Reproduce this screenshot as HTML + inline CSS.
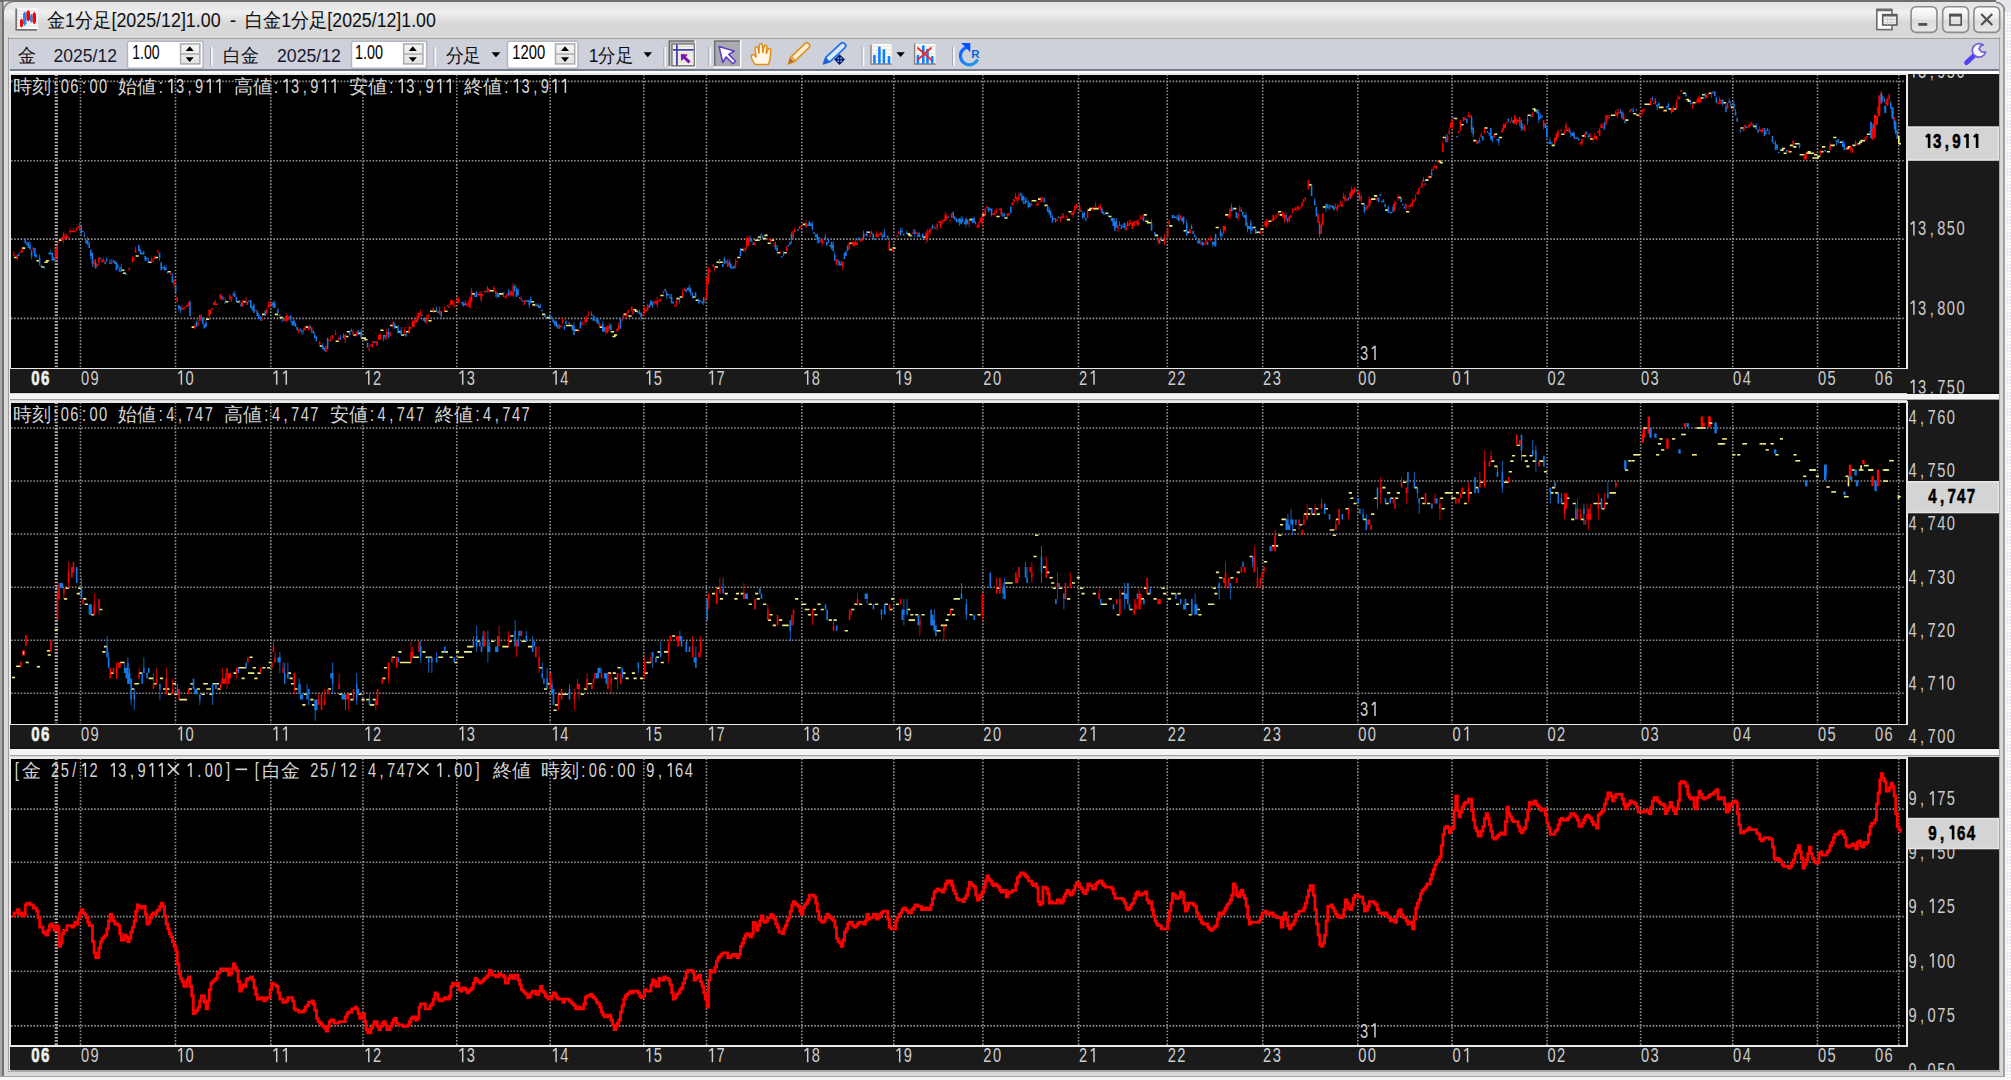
<!DOCTYPE html>
<html><head><meta charset="utf-8">
<style>
*{margin:0;padding:0;box-sizing:border-box}
html,body{width:2011px;height:1080px;overflow:hidden;background:#f6f6f6;font-family:"Liberation Sans",sans-serif}
.a{position:absolute}
svg{position:absolute;left:0;top:0}
</style></head><body>

<div class="a" style="left:2005px;top:0;width:6px;height:1080px;background-color:#e4e4ec;background-image:repeating-linear-gradient(0deg,rgba(255,255,255,.7) 0 1.6px,transparent 1.6px 3.2px),repeating-linear-gradient(90deg,rgba(255,255,255,.5) 0 1.6px,transparent 1.6px 3.2px)"></div>
<div class="a" style="left:0;top:0;width:2005px;height:1077px;background:#d8d8d8;border-radius:6px 6px 0 0"></div>
<div class="a" style="left:0;top:0;width:2px;height:1077px;background:#a8a8a8"></div>
<div class="a" style="left:2px;top:0;width:2px;height:1077px;background:#707070"></div>
<div class="a" style="left:0;top:0;width:2005px;height:2px;background:#6e6e6e"></div>
<div class="a" style="left:4px;top:2px;width:1999px;height:35px;background:linear-gradient(#e4e4e4 0px,#e6e6e6 6px,#f0f0f0 10px,#e4e4e4 16px,#d8d8d8 21px,#d8d8d8 33px,#e0e0e0 35px);border-radius:6px 6px 0 0"></div>
<div class="a" style="left:2003px;top:0;width:2px;height:1077px;background:#a0a0a0"></div>
<div class="a" style="left:0;top:1075.5px;width:2005px;height:1.6px;background:#a4a4a4"></div>
<div class="a" style="left:8px;top:1070px;width:1992px;height:1.6px;background:#a8a8a8"></div>
<div class="a" style="left:8px;top:37px;width:1px;height:1034px;background:#a0a0a0"></div><div class="a" style="left:9px;top:70px;width:2px;height:1001px;background:#e8e8e8"></div>
<div class="a" style="left:1998.5px;top:37px;width:1.6px;height:1034px;background:#a8a8a8"></div>
<div class="a" style="left:8px;top:37.5px;width:1992px;height:1.6px;background:#a0a0a0"></div>
<div class="a" style="left:9.5px;top:39px;width:1989px;height:29.5px;background:#ced1da"></div>
<div class="a" style="left:9.5px;top:68.5px;width:1989px;height:2px;background:#707c90"></div>
<div class="a" style="left:9.5px;top:70.5px;width:1989px;height:4px;background:#fff"></div>
<div class="a" style="left:9.5px;top:72.7px;width:1898px;height:320.8px;background:#1a1a1a"></div>
<div class="a" style="left:1907px;top:73.5px;width:92px;height:320.0px;background:#1a1a1a"></div>
<div class="a" style="left:9.5px;top:72.7px;width:1898px;height:296.6px;background:#e8e8e8"></div>
<div class="a" style="left:11px;top:74.5px;width:1894.5px;height:293.0px;background:#000"></div>
<div class="a" style="left:9.5px;top:391.9px;width:1989px;height:1.6px;background:#101010"></div>
<div class="a" style="left:9.5px;top:393.5px;width:1989px;height:5.5px;background:#f4f4f4"></div>
<div class="a" style="left:9.5px;top:399.0px;width:1989px;height:1.4px;background:#a0a0a0"></div>
<div class="a" style="left:9.5px;top:400.7px;width:1898px;height:348.59999999999997px;background:#1a1a1a"></div>
<div class="a" style="left:1907px;top:400.3px;width:92px;height:348.99999999999994px;background:#1a1a1a"></div>
<div class="a" style="left:9.5px;top:400.7px;width:1898px;height:324.70000000000005px;background:#e8e8e8"></div>
<div class="a" style="left:11px;top:402.5px;width:1894.5px;height:321.1px;background:#000"></div>
<div class="a" style="left:9.5px;top:747.6999999999999px;width:1989px;height:1.6px;background:#101010"></div>
<div class="a" style="left:9.5px;top:749.3px;width:1989px;height:5.5px;background:#f4f4f4"></div>
<div class="a" style="left:9.5px;top:754.8px;width:1989px;height:1.4px;background:#a0a0a0"></div>
<div class="a" style="left:9.5px;top:756.7px;width:1898px;height:313.29999999999995px;background:#1a1a1a"></div>
<div class="a" style="left:1907px;top:756.5px;width:92px;height:313.5px;background:#1a1a1a"></div>
<div class="a" style="left:9.5px;top:756.7px;width:1898px;height:290.1px;background:#e8e8e8"></div>
<div class="a" style="left:11px;top:758.5px;width:1894.5px;height:286.5px;background:#000"></div>
<svg width="2011" height="1080" style="position:absolute;left:0;top:0">
<defs><clipPath id="c0"><rect x="11" y="74.5" width="1894.5" height="293.0"/></clipPath><clipPath id="ax0"><rect x="1907" y="73.5" width="92" height="320.0"/></clipPath></defs>
<g clip-path="url(#c0)">
<line x1="56.3" y1="74.5" x2="56.3" y2="367.5" stroke="#b4b4b4" stroke-width="3.2" stroke-dasharray="1.6 1.6"/>
<line x1="80.5" y1="74.5" x2="80.5" y2="367.5" stroke="#8c8c8c" stroke-width="1.6" stroke-dasharray="1.6 1.6"/>
<line x1="175.5" y1="74.5" x2="175.5" y2="367.5" stroke="#8c8c8c" stroke-width="1.6" stroke-dasharray="1.6 1.6"/>
<line x1="270.8" y1="74.5" x2="270.8" y2="367.5" stroke="#8c8c8c" stroke-width="1.6" stroke-dasharray="1.6 1.6"/>
<line x1="362.9" y1="74.5" x2="362.9" y2="367.5" stroke="#8c8c8c" stroke-width="1.6" stroke-dasharray="1.6 1.6"/>
<line x1="456.8" y1="74.5" x2="456.8" y2="367.5" stroke="#8c8c8c" stroke-width="1.6" stroke-dasharray="1.6 1.6"/>
<line x1="550.2" y1="74.5" x2="550.2" y2="367.5" stroke="#8c8c8c" stroke-width="1.6" stroke-dasharray="1.6 1.6"/>
<line x1="643.8" y1="74.5" x2="643.8" y2="367.5" stroke="#8c8c8c" stroke-width="1.6" stroke-dasharray="1.6 1.6"/>
<line x1="706.5" y1="74.5" x2="706.5" y2="367.5" stroke="#8c8c8c" stroke-width="1.6" stroke-dasharray="1.6 1.6"/>
<line x1="801.8" y1="74.5" x2="801.8" y2="367.5" stroke="#8c8c8c" stroke-width="1.6" stroke-dasharray="1.6 1.6"/>
<line x1="893.8" y1="74.5" x2="893.8" y2="367.5" stroke="#8c8c8c" stroke-width="1.6" stroke-dasharray="1.6 1.6"/>
<line x1="982.9" y1="74.5" x2="982.9" y2="367.5" stroke="#8c8c8c" stroke-width="1.6" stroke-dasharray="1.6 1.6"/>
<line x1="1078.5" y1="74.5" x2="1078.5" y2="367.5" stroke="#8c8c8c" stroke-width="1.6" stroke-dasharray="1.6 1.6"/>
<line x1="1167.3" y1="74.5" x2="1167.3" y2="367.5" stroke="#8c8c8c" stroke-width="1.6" stroke-dasharray="1.6 1.6"/>
<line x1="1262.7" y1="74.5" x2="1262.7" y2="367.5" stroke="#8c8c8c" stroke-width="1.6" stroke-dasharray="1.6 1.6"/>
<line x1="1357.8" y1="74.5" x2="1357.8" y2="367.5" stroke="#8c8c8c" stroke-width="1.6" stroke-dasharray="1.6 1.6"/>
<line x1="1452.1" y1="74.5" x2="1452.1" y2="367.5" stroke="#8c8c8c" stroke-width="1.6" stroke-dasharray="1.6 1.6"/>
<line x1="1547.1" y1="74.5" x2="1547.1" y2="367.5" stroke="#8c8c8c" stroke-width="1.6" stroke-dasharray="1.6 1.6"/>
<line x1="1640.6" y1="74.5" x2="1640.6" y2="367.5" stroke="#8c8c8c" stroke-width="1.6" stroke-dasharray="1.6 1.6"/>
<line x1="1732.7" y1="74.5" x2="1732.7" y2="367.5" stroke="#8c8c8c" stroke-width="1.6" stroke-dasharray="1.6 1.6"/>
<line x1="1817.5" y1="74.5" x2="1817.5" y2="367.5" stroke="#8c8c8c" stroke-width="1.6" stroke-dasharray="1.6 1.6"/>
<line x1="1898.7" y1="74.5" x2="1898.7" y2="367.5" stroke="#8c8c8c" stroke-width="1.6" stroke-dasharray="1.6 1.6"/>
<line x1="11" y1="81.4" x2="1905.5" y2="81.4" stroke="#8c8c8c" stroke-width="1.6" stroke-dasharray="1.6 1.6"/>
<line x1="11" y1="160.8" x2="1905.5" y2="160.8" stroke="#8c8c8c" stroke-width="1.6" stroke-dasharray="1.6 1.6"/>
<line x1="11" y1="239.1" x2="1905.5" y2="239.1" stroke="#8c8c8c" stroke-width="1.6" stroke-dasharray="1.6 1.6"/>
<line x1="11" y1="318.4" x2="1905.5" y2="318.4" stroke="#8c8c8c" stroke-width="1.6" stroke-dasharray="1.6 1.6"/>
<path d="M14.0 256.7h3.2v1.6h-3.2zM22.0 247.3h3.2v1.6h-3.2zM36.4 259.9h3.2v1.6h-3.2zM41.2 266.2h3.2v1.6h-3.2zM44.4 261.5h3.2v1.6h-3.2zM46.0 259.9h3.2v1.6h-3.2zM58.8 239.4h3.2v1.6h-3.2zM121.2 269.4h3.2v1.6h-3.2zM122.8 272.5h3.2v1.6h-3.2zM135.6 255.2h3.2v1.6h-3.2zM148.4 261.5h3.2v1.6h-3.2zM154.8 256.7h3.2v1.6h-3.2zM167.6 271.0h3.2v1.6h-3.2zM191.6 326.3h3.2v1.6h-3.2zM206.0 318.4h3.2v1.6h-3.2zM225.2 301.0h3.2v1.6h-3.2zM236.4 301.0h3.2v1.6h-3.2zM242.8 301.0h3.2v1.6h-3.2zM262.0 313.6h3.2v1.6h-3.2zM274.8 313.6h3.2v1.6h-3.2zM279.6 316.8h3.2v1.6h-3.2zM305.2 326.3h3.2v1.6h-3.2zM319.6 345.2h3.2v1.6h-3.2zM335.6 340.5h3.2v1.6h-3.2zM345.2 335.7h3.2v1.6h-3.2zM346.8 331.0h3.2v1.6h-3.2zM353.2 334.2h3.2v1.6h-3.2zM358.0 332.6h3.2v1.6h-3.2zM361.2 337.3h3.2v1.6h-3.2zM362.8 337.3h3.2v1.6h-3.2zM364.4 338.9h3.2v1.6h-3.2zM380.4 329.4h3.2v1.6h-3.2zM390.0 324.7h3.2v1.6h-3.2zM394.8 326.3h3.2v1.6h-3.2zM398.0 331.0h3.2v1.6h-3.2zM401.2 334.2h3.2v1.6h-3.2zM406.0 331.0h3.2v1.6h-3.2zM428.4 319.9h3.2v1.6h-3.2zM430.0 310.5h3.2v1.6h-3.2zM433.2 310.5h3.2v1.6h-3.2zM444.4 310.5h3.2v1.6h-3.2zM471.6 293.1h3.2v1.6h-3.2zM489.2 289.9h3.2v1.6h-3.2zM490.8 289.9h3.2v1.6h-3.2zM498.8 293.1h3.2v1.6h-3.2zM500.4 293.1h3.2v1.6h-3.2zM530.8 301.0h3.2v1.6h-3.2zM532.4 304.1h3.2v1.6h-3.2zM542.0 313.6h3.2v1.6h-3.2zM546.8 316.8h3.2v1.6h-3.2zM566.0 324.7h3.2v1.6h-3.2zM569.2 324.7h3.2v1.6h-3.2zM574.0 329.4h3.2v1.6h-3.2zM575.6 329.4h3.2v1.6h-3.2zM599.6 326.3h3.2v1.6h-3.2zM610.8 331.0h3.2v1.6h-3.2zM612.4 335.7h3.2v1.6h-3.2zM614.0 334.2h3.2v1.6h-3.2zM623.6 313.6h3.2v1.6h-3.2zM628.4 315.2h3.2v1.6h-3.2zM633.2 308.9h3.2v1.6h-3.2zM634.8 310.5h3.2v1.6h-3.2zM660.4 294.7h3.2v1.6h-3.2zM676.4 297.8h3.2v1.6h-3.2zM679.6 296.2h3.2v1.6h-3.2zM692.4 296.2h3.2v1.6h-3.2zM695.6 299.4h3.2v1.6h-3.2zM714.8 266.2h3.2v1.6h-3.2zM716.4 261.5h3.2v1.6h-3.2zM719.6 261.5h3.2v1.6h-3.2zM737.2 256.7h3.2v1.6h-3.2zM740.4 248.8h3.2v1.6h-3.2zM754.8 239.4h3.2v1.6h-3.2zM756.4 239.4h3.2v1.6h-3.2zM758.0 236.2h3.2v1.6h-3.2zM762.8 237.8h3.2v1.6h-3.2zM764.4 234.6h3.2v1.6h-3.2zM767.6 242.5h3.2v1.6h-3.2zM770.8 239.4h3.2v1.6h-3.2zM777.2 252.0h3.2v1.6h-3.2zM783.6 252.0h3.2v1.6h-3.2zM802.8 223.6h3.2v1.6h-3.2zM849.2 242.5h3.2v1.6h-3.2zM866.8 231.5h3.2v1.6h-3.2zM889.2 248.8h3.2v1.6h-3.2zM892.4 247.3h3.2v1.6h-3.2zM906.8 233.0h3.2v1.6h-3.2zM908.4 234.6h3.2v1.6h-3.2zM922.8 236.2h3.2v1.6h-3.2zM969.2 218.8h3.2v1.6h-3.2zM982.0 214.1h3.2v1.6h-3.2zM996.4 215.7h3.2v1.6h-3.2zM1004.4 217.2h3.2v1.6h-3.2zM1031.6 199.9h3.2v1.6h-3.2zM1033.2 199.9h3.2v1.6h-3.2zM1038.0 198.3h3.2v1.6h-3.2zM1044.4 204.6h3.2v1.6h-3.2zM1066.8 218.8h3.2v1.6h-3.2zM1068.4 210.9h3.2v1.6h-3.2zM1087.6 209.3h3.2v1.6h-3.2zM1089.2 207.8h3.2v1.6h-3.2zM1092.4 207.8h3.2v1.6h-3.2zM1095.6 207.8h3.2v1.6h-3.2zM1105.2 212.5h3.2v1.6h-3.2zM1108.4 215.7h3.2v1.6h-3.2zM1143.6 214.1h3.2v1.6h-3.2zM1145.2 220.4h3.2v1.6h-3.2zM1146.8 222.0h3.2v1.6h-3.2zM1148.4 222.0h3.2v1.6h-3.2zM1154.8 234.6h3.2v1.6h-3.2zM1161.2 239.4h3.2v1.6h-3.2zM1169.2 225.1h3.2v1.6h-3.2zM1183.6 229.9h3.2v1.6h-3.2zM1186.8 231.5h3.2v1.6h-3.2zM1215.6 226.7h3.2v1.6h-3.2zM1225.2 214.1h3.2v1.6h-3.2zM1233.2 207.8h3.2v1.6h-3.2zM1252.4 226.7h3.2v1.6h-3.2zM1255.6 231.5h3.2v1.6h-3.2zM1257.2 231.5h3.2v1.6h-3.2zM1260.4 228.3h3.2v1.6h-3.2zM1268.4 220.4h3.2v1.6h-3.2zM1278.0 210.9h3.2v1.6h-3.2zM1279.6 214.1h3.2v1.6h-3.2zM1308.4 184.1h3.2v1.6h-3.2zM1322.8 206.2h3.2v1.6h-3.2zM1361.2 203.0h3.2v1.6h-3.2zM1370.8 198.3h3.2v1.6h-3.2zM1372.4 198.3h3.2v1.6h-3.2zM1374.0 195.1h3.2v1.6h-3.2zM1385.2 209.3h3.2v1.6h-3.2zM1398.0 196.7h3.2v1.6h-3.2zM1406.0 210.9h3.2v1.6h-3.2zM1425.2 179.3h3.2v1.6h-3.2zM1428.4 176.2h3.2v1.6h-3.2zM1438.0 160.4h3.2v1.6h-3.2zM1439.6 161.9h3.2v1.6h-3.2zM1442.8 136.7h3.2v1.6h-3.2zM1454.0 117.7h3.2v1.6h-3.2zM1460.4 124.0h3.2v1.6h-3.2zM1473.2 139.8h3.2v1.6h-3.2zM1484.4 127.2h3.2v1.6h-3.2zM1494.0 133.5h3.2v1.6h-3.2zM1498.8 136.7h3.2v1.6h-3.2zM1527.6 114.5h3.2v1.6h-3.2zM1532.4 108.2h3.2v1.6h-3.2zM1534.0 109.8h3.2v1.6h-3.2zM1551.6 144.6h3.2v1.6h-3.2zM1561.2 133.5h3.2v1.6h-3.2zM1582.0 135.1h3.2v1.6h-3.2zM1590.0 138.2h3.2v1.6h-3.2zM1610.8 114.5h3.2v1.6h-3.2zM1612.4 114.5h3.2v1.6h-3.2zM1625.2 119.3h3.2v1.6h-3.2zM1633.2 113.0h3.2v1.6h-3.2zM1636.4 114.5h3.2v1.6h-3.2zM1644.4 103.5h3.2v1.6h-3.2zM1647.6 103.5h3.2v1.6h-3.2zM1658.8 106.6h3.2v1.6h-3.2zM1660.4 106.6h3.2v1.6h-3.2zM1663.6 109.8h3.2v1.6h-3.2zM1668.4 108.2h3.2v1.6h-3.2zM1673.2 108.2h3.2v1.6h-3.2zM1682.8 92.4h3.2v1.6h-3.2zM1686.0 98.7h3.2v1.6h-3.2zM1687.6 100.3h3.2v1.6h-3.2zM1692.4 101.9h3.2v1.6h-3.2zM1700.4 97.2h3.2v1.6h-3.2zM1702.0 94.0h3.2v1.6h-3.2zM1708.4 92.4h3.2v1.6h-3.2zM1722.8 101.9h3.2v1.6h-3.2zM1730.8 106.6h3.2v1.6h-3.2zM1740.4 127.2h3.2v1.6h-3.2zM1753.2 125.6h3.2v1.6h-3.2zM1780.4 149.3h3.2v1.6h-3.2zM1782.0 147.7h3.2v1.6h-3.2zM1783.6 152.5h3.2v1.6h-3.2zM1788.4 150.9h3.2v1.6h-3.2zM1790.0 144.6h3.2v1.6h-3.2zM1793.2 146.1h3.2v1.6h-3.2zM1794.8 143.0h3.2v1.6h-3.2zM1796.4 143.0h3.2v1.6h-3.2zM1799.6 154.0h3.2v1.6h-3.2zM1801.2 154.0h3.2v1.6h-3.2zM1806.0 152.5h3.2v1.6h-3.2zM1807.6 150.9h3.2v1.6h-3.2zM1809.2 152.5h3.2v1.6h-3.2zM1810.8 152.5h3.2v1.6h-3.2zM1812.4 157.2h3.2v1.6h-3.2zM1814.0 154.0h3.2v1.6h-3.2zM1815.6 157.2h3.2v1.6h-3.2zM1817.2 155.6h3.2v1.6h-3.2zM1820.4 150.9h3.2v1.6h-3.2zM1822.0 146.1h3.2v1.6h-3.2zM1826.8 150.9h3.2v1.6h-3.2zM1830.0 144.6h3.2v1.6h-3.2zM1831.6 144.6h3.2v1.6h-3.2zM1833.2 136.7h3.2v1.6h-3.2zM1839.6 141.4h3.2v1.6h-3.2zM1846.0 147.7h3.2v1.6h-3.2zM1847.6 146.1h3.2v1.6h-3.2zM1852.4 144.6h3.2v1.6h-3.2zM1857.2 143.0h3.2v1.6h-3.2zM1858.8 141.4h3.2v1.6h-3.2zM1860.4 139.8h3.2v1.6h-3.2zM1862.0 139.8h3.2v1.6h-3.2zM1866.8 133.5h3.2v1.6h-3.2zM1874.8 116.1h3.2v1.6h-3.2z" fill="#f0ec80"/><path d="M18.0 254.4h1.6v1.6h-1.6zM18.4 252.8h0.8v1.6h-0.8zM24.4 238.6h1.6v4.7h-1.6zM26.0 243.3h1.6v1.6h-1.6zM26.4 241.7h0.8v1.6h-0.8zM27.6 241.7h1.6v6.3h-1.6zM29.2 244.9h1.6v4.7h-1.6zM29.6 241.7h0.8v3.2h-0.8zM30.8 251.2h1.6v4.7h-1.6zM31.2 249.6h0.8v1.6h-0.8zM31.2 256.0h0.8v3.2h-0.8zM34.0 248.1h1.6v7.9h-1.6zM34.4 256.0h0.8v1.6h-0.8zM35.6 254.4h1.6v3.2h-1.6zM38.8 257.5h1.6v6.3h-1.6zM39.2 254.4h0.8v3.2h-0.8zM39.2 263.9h0.8v1.6h-0.8zM40.4 265.4h1.6v1.6h-1.6zM40.8 263.9h0.8v1.6h-0.8zM43.6 267.0h1.6v1.6h-1.6zM48.4 252.8h1.6v1.6h-1.6zM50.0 252.8h1.6v1.6h-1.6zM50.4 249.6h0.8v3.2h-0.8zM51.6 252.8h1.6v7.9h-1.6zM53.2 257.5h1.6v3.2h-1.6zM80.4 225.9h1.6v6.3h-1.6zM80.8 224.4h0.8v1.6h-0.8zM80.8 232.3h0.8v3.2h-0.8zM82.0 230.7h1.6v1.6h-1.6zM83.6 235.4h1.6v1.6h-1.6zM84.0 232.3h0.8v3.2h-0.8zM85.2 240.2h1.6v3.2h-1.6zM86.8 240.2h1.6v3.2h-1.6zM87.2 237.0h0.8v3.2h-0.8zM87.2 243.3h0.8v1.6h-0.8zM88.4 243.3h1.6v4.7h-1.6zM88.8 241.7h0.8v1.6h-0.8zM90.0 249.6h1.6v6.3h-1.6zM90.4 256.0h0.8v3.2h-0.8zM91.6 252.8h1.6v11.1h-1.6zM92.0 263.9h0.8v3.2h-0.8zM94.8 262.3h1.6v6.3h-1.6zM95.2 259.1h0.8v3.2h-0.8zM99.6 257.5h1.6v1.6h-1.6zM104.4 262.3h1.6v1.6h-1.6zM104.8 260.7h0.8v1.6h-0.8zM106.0 259.1h1.6v1.6h-1.6zM106.4 257.5h0.8v1.6h-0.8zM106.4 260.7h0.8v1.6h-0.8zM109.2 262.3h1.6v1.6h-1.6zM109.6 259.1h0.8v3.2h-0.8zM112.4 260.7h1.6v1.6h-1.6zM112.8 259.1h0.8v1.6h-0.8zM114.0 260.7h1.6v3.2h-1.6zM115.6 262.3h1.6v7.9h-1.6zM117.2 265.4h1.6v1.6h-1.6zM117.6 263.9h0.8v1.6h-0.8zM117.6 267.0h0.8v3.2h-0.8zM118.8 270.2h1.6v1.6h-1.6zM119.2 267.0h0.8v3.2h-0.8zM120.4 267.0h1.6v4.7h-1.6zM120.8 263.9h0.8v3.2h-0.8zM125.2 273.3h1.6v1.6h-1.6zM138.0 244.9h1.6v6.3h-1.6zM139.6 249.6h1.6v4.7h-1.6zM141.2 252.8h1.6v1.6h-1.6zM142.8 251.2h1.6v3.2h-1.6zM144.4 256.0h1.6v4.7h-1.6zM146.0 257.5h1.6v1.6h-1.6zM146.4 259.1h0.8v1.6h-0.8zM147.6 260.7h1.6v1.6h-1.6zM148.0 257.5h0.8v3.2h-0.8zM158.8 252.8h1.6v4.7h-1.6zM159.2 257.5h0.8v3.2h-0.8zM160.4 262.3h1.6v7.9h-1.6zM162.0 267.0h1.6v1.6h-1.6zM163.6 267.0h1.6v3.2h-1.6zM164.0 265.4h0.8v1.6h-0.8zM165.2 268.6h1.6v1.6h-1.6zM165.6 265.4h0.8v3.2h-0.8zM166.8 271.8h1.6v1.6h-1.6zM171.6 276.5h1.6v6.3h-1.6zM172.0 273.3h0.8v3.2h-0.8zM174.8 284.4h1.6v7.9h-1.6zM178.0 304.9h1.6v3.2h-1.6zM178.4 308.1h0.8v3.2h-0.8zM179.6 306.5h1.6v3.2h-1.6zM180.0 309.7h0.8v3.2h-0.8zM189.2 301.8h1.6v14.2h-1.6zM189.6 300.2h0.8v1.6h-0.8zM195.6 322.3h1.6v4.7h-1.6zM196.0 320.7h0.8v1.6h-0.8zM198.8 316.0h1.6v1.6h-1.6zM199.2 314.4h0.8v1.6h-0.8zM199.2 317.6h0.8v3.2h-0.8zM202.0 317.6h1.6v6.3h-1.6zM203.6 323.9h1.6v4.7h-1.6zM205.2 322.3h1.6v4.7h-1.6zM205.6 319.2h0.8v3.2h-0.8zM221.2 295.5h1.6v3.2h-1.6zM221.6 298.6h0.8v1.6h-0.8zM224.4 301.8h1.6v1.6h-1.6zM224.8 298.6h0.8v3.2h-0.8zM232.4 293.9h1.6v1.6h-1.6zM232.8 292.3h0.8v1.6h-0.8zM234.0 293.9h1.6v3.2h-1.6zM234.4 290.7h0.8v3.2h-0.8zM235.6 297.0h1.6v4.7h-1.6zM238.8 300.2h1.6v1.6h-1.6zM239.2 301.8h0.8v1.6h-0.8zM240.4 303.4h1.6v3.2h-1.6zM240.8 301.8h0.8v1.6h-0.8zM246.8 301.8h1.6v1.6h-1.6zM247.2 301.8h0.8v3.2h-0.8zM248.4 300.2h1.6v1.6h-1.6zM250.0 300.2h1.6v7.9h-1.6zM251.6 306.5h1.6v3.2h-1.6zM252.0 309.7h0.8v1.6h-0.8zM253.2 304.9h1.6v7.9h-1.6zM253.6 303.4h0.8v1.6h-0.8zM256.4 311.3h1.6v4.7h-1.6zM256.8 309.7h0.8v1.6h-0.8zM258.0 314.4h1.6v4.7h-1.6zM258.4 312.8h0.8v1.6h-0.8zM259.6 317.6h1.6v1.6h-1.6zM260.0 316.0h0.8v1.6h-0.8zM260.0 319.2h0.8v1.6h-0.8zM264.4 311.3h1.6v4.7h-1.6zM264.8 309.7h0.8v1.6h-0.8zM270.8 303.4h1.6v1.6h-1.6zM271.2 303.4h0.8v3.2h-0.8zM272.4 301.8h1.6v4.7h-1.6zM272.8 306.5h0.8v1.6h-0.8zM274.0 303.4h1.6v4.7h-1.6zM274.4 300.2h0.8v3.2h-0.8zM277.2 309.7h1.6v3.2h-1.6zM277.6 308.1h0.8v1.6h-0.8zM278.8 314.4h1.6v1.6h-1.6zM282.0 319.2h1.6v1.6h-1.6zM282.4 320.7h0.8v1.6h-0.8zM290.0 316.0h1.6v3.2h-1.6zM290.4 314.4h0.8v1.6h-0.8zM290.4 319.2h0.8v3.2h-0.8zM291.6 320.7h1.6v4.7h-1.6zM293.2 320.7h1.6v4.7h-1.6zM293.6 319.2h0.8v1.6h-0.8zM294.8 323.9h1.6v3.2h-1.6zM295.2 322.3h0.8v1.6h-0.8zM296.4 327.1h1.6v3.2h-1.6zM299.6 328.6h1.6v1.6h-1.6zM300.0 330.2h0.8v1.6h-0.8zM301.2 330.2h1.6v1.6h-1.6zM301.6 331.8h0.8v3.2h-0.8zM309.2 325.5h1.6v3.2h-1.6zM309.6 328.6h0.8v1.6h-0.8zM312.4 330.2h1.6v3.2h-1.6zM314.0 335.0h1.6v3.2h-1.6zM314.4 331.8h0.8v3.2h-0.8zM315.6 336.5h1.6v4.7h-1.6zM322.0 346.0h1.6v3.2h-1.6zM322.4 342.9h0.8v3.2h-0.8zM323.6 347.6h1.6v3.2h-1.6zM326.8 338.1h1.6v11.1h-1.6zM339.6 338.1h1.6v1.6h-1.6zM340.0 335.0h0.8v3.2h-0.8zM342.8 335.0h1.6v3.2h-1.6zM343.2 333.4h0.8v1.6h-0.8zM349.2 333.4h1.6v1.6h-1.6zM349.6 330.2h0.8v3.2h-0.8zM350.8 330.2h1.6v1.6h-1.6zM351.2 328.6h0.8v1.6h-0.8zM357.2 330.2h1.6v4.7h-1.6zM360.4 331.8h1.6v6.3h-1.6zM360.8 328.6h0.8v3.2h-0.8zM366.8 342.9h1.6v4.7h-1.6zM373.2 341.3h1.6v1.6h-1.6zM382.8 335.0h1.6v3.2h-1.6zM383.2 338.1h0.8v3.2h-0.8zM384.4 335.0h1.6v1.6h-1.6zM384.8 336.5h0.8v3.2h-0.8zM387.6 331.8h1.6v3.2h-1.6zM388.0 328.6h0.8v3.2h-0.8zM388.0 335.0h0.8v3.2h-0.8zM394.0 323.9h1.6v4.7h-1.6zM394.4 322.3h0.8v1.6h-0.8zM397.2 325.5h1.6v7.9h-1.6zM400.4 330.2h1.6v4.7h-1.6zM400.8 327.1h0.8v3.2h-0.8zM405.2 333.4h1.6v3.2h-1.6zM421.2 314.4h1.6v1.6h-1.6zM422.8 319.2h1.6v1.6h-1.6zM423.2 317.6h0.8v1.6h-0.8zM424.4 319.2h1.6v3.2h-1.6zM424.8 317.6h0.8v1.6h-0.8zM435.6 309.7h1.6v1.6h-1.6zM436.0 306.5h0.8v3.2h-0.8zM437.2 311.3h1.6v1.6h-1.6zM437.6 311.3h0.8v1.6h-0.8zM440.4 311.3h1.6v4.7h-1.6zM440.8 316.0h0.8v3.2h-0.8zM461.2 301.8h1.6v1.6h-1.6zM461.6 303.4h0.8v1.6h-0.8zM462.8 303.4h1.6v3.2h-1.6zM463.2 301.8h0.8v1.6h-0.8zM464.4 303.4h1.6v1.6h-1.6zM464.8 300.2h0.8v3.2h-0.8zM474.0 295.5h1.6v1.6h-1.6zM474.4 293.9h0.8v1.6h-0.8zM475.6 292.3h1.6v4.7h-1.6zM476.0 290.7h0.8v1.6h-0.8zM485.2 290.7h1.6v1.6h-1.6zM496.4 292.3h1.6v4.7h-1.6zM496.8 297.0h0.8v1.6h-0.8zM498.0 293.9h1.6v3.2h-1.6zM502.8 292.3h1.6v1.6h-1.6zM503.2 293.9h0.8v3.2h-0.8zM507.6 292.3h1.6v3.2h-1.6zM508.0 289.1h0.8v3.2h-0.8zM514.0 286.0h1.6v4.7h-1.6zM514.4 284.4h0.8v1.6h-0.8zM514.4 290.7h0.8v1.6h-0.8zM515.6 290.7h1.6v6.3h-1.6zM516.0 287.6h0.8v3.2h-0.8zM517.2 289.1h1.6v6.3h-1.6zM518.8 297.0h1.6v1.6h-1.6zM522.0 300.2h1.6v1.6h-1.6zM525.2 300.2h1.6v1.6h-1.6zM526.8 300.2h1.6v1.6h-1.6zM528.4 300.2h1.6v4.7h-1.6zM528.8 304.9h0.8v3.2h-0.8zM530.0 298.6h1.6v4.7h-1.6zM530.4 295.5h0.8v3.2h-0.8zM536.4 303.4h1.6v3.2h-1.6zM538.0 304.9h1.6v3.2h-1.6zM539.6 306.5h1.6v1.6h-1.6zM540.0 303.4h0.8v3.2h-0.8zM541.2 309.7h1.6v1.6h-1.6zM544.4 314.4h1.6v3.2h-1.6zM549.2 314.4h1.6v3.2h-1.6zM550.8 317.6h1.6v1.6h-1.6zM551.2 316.0h0.8v1.6h-0.8zM552.4 319.2h1.6v3.2h-1.6zM554.0 320.7h1.6v4.7h-1.6zM555.6 322.3h1.6v4.7h-1.6zM556.0 320.7h0.8v1.6h-0.8zM557.2 325.5h1.6v3.2h-1.6zM557.6 323.9h0.8v1.6h-0.8zM563.6 325.5h1.6v3.2h-1.6zM564.0 328.6h0.8v1.6h-0.8zM565.2 320.7h1.6v3.2h-1.6zM568.4 322.3h1.6v1.6h-1.6zM571.6 325.5h1.6v4.7h-1.6zM573.2 325.5h1.6v9.5h-1.6zM573.6 322.3h0.8v3.2h-0.8zM579.6 322.3h1.6v6.3h-1.6zM580.0 320.7h0.8v1.6h-0.8zM590.8 314.4h1.6v1.6h-1.6zM591.2 311.3h0.8v3.2h-0.8zM592.4 317.6h1.6v3.2h-1.6zM592.8 314.4h0.8v3.2h-0.8zM594.0 319.2h1.6v1.6h-1.6zM594.4 316.0h0.8v3.2h-0.8zM595.6 320.7h1.6v1.6h-1.6zM596.0 317.6h0.8v3.2h-0.8zM596.0 320.7h0.8v1.6h-0.8zM597.2 319.2h1.6v4.7h-1.6zM602.0 323.9h1.6v7.9h-1.6zM602.4 320.7h0.8v3.2h-0.8zM603.6 327.1h1.6v4.7h-1.6zM610.0 325.5h1.6v4.7h-1.6zM610.4 323.9h0.8v1.6h-0.8zM619.6 319.2h1.6v9.5h-1.6zM620.0 317.6h0.8v1.6h-0.8zM637.2 311.3h1.6v1.6h-1.6zM638.8 312.8h1.6v1.6h-1.6zM639.2 309.7h0.8v3.2h-0.8zM640.4 312.8h1.6v4.7h-1.6zM640.8 317.6h0.8v3.2h-0.8zM648.4 304.9h1.6v3.2h-1.6zM648.8 303.4h0.8v1.6h-0.8zM650.0 300.2h1.6v4.7h-1.6zM650.4 304.9h0.8v1.6h-0.8zM651.6 301.8h1.6v3.2h-1.6zM652.0 304.9h0.8v3.2h-0.8zM664.4 289.1h1.6v1.6h-1.6zM664.8 290.7h0.8v1.6h-0.8zM666.0 292.3h1.6v3.2h-1.6zM666.4 290.7h0.8v1.6h-0.8zM666.4 295.5h0.8v3.2h-0.8zM667.6 293.9h1.6v1.6h-1.6zM669.2 297.0h1.6v1.6h-1.6zM669.6 293.9h0.8v3.2h-0.8zM670.8 297.0h1.6v6.3h-1.6zM671.2 293.9h0.8v3.2h-0.8zM672.4 301.8h1.6v1.6h-1.6zM678.8 298.6h1.6v1.6h-1.6zM679.2 300.2h0.8v3.2h-0.8zM685.2 289.1h1.6v3.2h-1.6zM686.8 287.6h1.6v1.6h-1.6zM687.2 289.1h0.8v1.6h-0.8zM688.4 287.6h1.6v3.2h-1.6zM688.8 284.4h0.8v3.2h-0.8zM688.8 290.7h0.8v1.6h-0.8zM690.0 289.1h1.6v4.7h-1.6zM690.4 287.6h0.8v1.6h-0.8zM690.4 293.9h0.8v1.6h-0.8zM691.6 293.9h1.6v1.6h-1.6zM692.0 292.3h0.8v1.6h-0.8zM692.0 295.5h0.8v3.2h-0.8zM694.8 292.3h1.6v4.7h-1.6zM698.0 300.2h1.6v3.2h-1.6zM698.4 298.6h0.8v1.6h-0.8zM699.6 300.2h1.6v1.6h-1.6zM701.2 301.8h1.6v1.6h-1.6zM702.8 298.6h1.6v4.7h-1.6zM703.2 297.0h0.8v1.6h-0.8zM703.2 303.4h0.8v1.6h-0.8zM718.8 259.1h1.6v1.6h-1.6zM719.2 260.7h0.8v3.2h-0.8zM722.0 263.9h1.6v3.2h-1.6zM723.6 257.5h1.6v6.3h-1.6zM725.2 260.7h1.6v1.6h-1.6zM725.6 262.3h0.8v1.6h-0.8zM728.4 262.3h1.6v3.2h-1.6zM728.8 259.1h0.8v3.2h-0.8zM728.8 265.4h0.8v1.6h-0.8zM730.0 263.9h1.6v4.7h-1.6zM730.4 262.3h0.8v1.6h-0.8zM731.6 267.0h1.6v1.6h-1.6zM733.2 265.4h1.6v3.2h-1.6zM739.6 251.2h1.6v4.7h-1.6zM740.0 248.1h0.8v3.2h-0.8zM742.8 249.6h1.6v1.6h-1.6zM749.2 238.6h1.6v3.2h-1.6zM749.6 235.4h0.8v3.2h-0.8zM750.8 240.2h1.6v1.6h-1.6zM752.4 243.3h1.6v1.6h-1.6zM752.8 241.7h0.8v1.6h-0.8zM760.4 233.8h1.6v1.6h-1.6zM762.0 235.4h1.6v3.2h-1.6zM774.8 244.9h1.6v4.7h-1.6zM775.2 241.7h0.8v3.2h-0.8zM776.4 248.1h1.6v3.2h-1.6zM776.8 244.9h0.8v3.2h-0.8zM781.2 256.0h1.6v1.6h-1.6zM782.8 251.2h1.6v3.2h-1.6zM783.2 254.4h0.8v1.6h-0.8zM787.6 244.9h1.6v1.6h-1.6zM789.2 241.7h1.6v3.2h-1.6zM790.8 233.8h1.6v6.3h-1.6zM791.2 232.3h0.8v1.6h-0.8zM791.2 240.2h0.8v3.2h-0.8zM797.2 229.1h1.6v1.6h-1.6zM806.8 224.4h1.6v1.6h-1.6zM808.4 221.2h1.6v4.7h-1.6zM810.0 222.8h1.6v3.2h-1.6zM811.6 224.4h1.6v4.7h-1.6zM812.0 221.2h0.8v3.2h-0.8zM812.0 229.1h0.8v1.6h-0.8zM813.2 232.3h1.6v1.6h-1.6zM814.8 235.4h1.6v1.6h-1.6zM815.2 233.8h0.8v1.6h-0.8zM815.2 235.4h0.8v1.6h-0.8zM816.4 233.8h1.6v6.3h-1.6zM816.8 240.2h0.8v3.2h-0.8zM818.0 237.0h1.6v6.3h-1.6zM824.4 237.0h1.6v3.2h-1.6zM824.8 233.8h0.8v3.2h-0.8zM826.0 241.7h1.6v3.2h-1.6zM826.4 244.9h0.8v1.6h-0.8zM827.6 240.2h1.6v1.6h-1.6zM828.0 238.6h0.8v1.6h-0.8zM828.0 241.7h0.8v1.6h-0.8zM829.2 244.9h1.6v1.6h-1.6zM830.8 241.7h1.6v6.3h-1.6zM831.2 248.1h0.8v1.6h-0.8zM832.4 244.9h1.6v6.3h-1.6zM832.8 241.7h0.8v3.2h-0.8zM834.0 254.4h1.6v6.3h-1.6zM834.4 251.2h0.8v3.2h-0.8zM837.2 260.7h1.6v1.6h-1.6zM837.6 259.1h0.8v1.6h-0.8zM837.6 262.3h0.8v3.2h-0.8zM838.8 262.3h1.6v3.2h-1.6zM839.2 260.7h0.8v1.6h-0.8zM840.4 263.9h1.6v1.6h-1.6zM840.8 260.7h0.8v3.2h-0.8zM843.6 252.8h1.6v6.3h-1.6zM845.2 251.2h1.6v4.7h-1.6zM846.8 246.5h1.6v4.7h-1.6zM847.2 244.9h0.8v1.6h-0.8zM858.0 238.6h1.6v1.6h-1.6zM858.4 237.0h0.8v1.6h-0.8zM862.8 233.8h1.6v4.7h-1.6zM863.2 230.7h0.8v3.2h-0.8zM863.2 238.6h0.8v1.6h-0.8zM866.0 233.8h1.6v1.6h-1.6zM866.4 230.7h0.8v3.2h-0.8zM866.4 235.4h0.8v1.6h-0.8zM870.8 232.3h1.6v1.6h-1.6zM871.2 230.7h0.8v1.6h-0.8zM872.4 233.8h1.6v4.7h-1.6zM874.0 238.6h1.6v1.6h-1.6zM882.0 235.4h1.6v1.6h-1.6zM882.4 233.8h0.8v1.6h-0.8zM882.4 237.0h0.8v3.2h-0.8zM883.6 232.3h1.6v4.7h-1.6zM884.0 229.1h0.8v3.2h-0.8zM885.2 238.6h1.6v1.6h-1.6zM886.8 235.4h1.6v3.2h-1.6zM899.6 230.7h1.6v4.7h-1.6zM900.0 227.5h0.8v3.2h-0.8zM901.2 230.7h1.6v1.6h-1.6zM901.6 227.5h0.8v3.2h-0.8zM902.8 233.8h1.6v1.6h-1.6zM906.0 232.3h1.6v1.6h-1.6zM906.4 230.7h0.8v1.6h-0.8zM910.8 235.4h1.6v1.6h-1.6zM914.0 230.7h1.6v3.2h-1.6zM914.4 229.1h0.8v1.6h-0.8zM914.4 233.8h0.8v3.2h-0.8zM917.2 233.8h1.6v3.2h-1.6zM917.6 232.3h0.8v1.6h-0.8zM918.8 235.4h1.6v1.6h-1.6zM919.2 232.3h0.8v3.2h-0.8zM922.0 233.8h1.6v3.2h-1.6zM922.4 237.0h0.8v1.6h-0.8zM931.6 225.9h1.6v3.2h-1.6zM932.0 224.4h0.8v1.6h-0.8zM934.8 227.5h1.6v1.6h-1.6zM947.6 216.5h1.6v1.6h-1.6zM952.4 211.7h1.6v6.3h-1.6zM954.0 216.5h1.6v3.2h-1.6zM955.6 219.6h1.6v1.6h-1.6zM956.0 218.0h0.8v1.6h-0.8zM956.0 221.2h0.8v1.6h-0.8zM957.2 219.6h1.6v1.6h-1.6zM957.6 219.6h0.8v3.2h-0.8zM958.8 218.0h1.6v4.7h-1.6zM959.2 222.8h0.8v3.2h-0.8zM960.4 219.6h1.6v4.7h-1.6zM960.8 216.5h0.8v3.2h-0.8zM962.0 219.6h1.6v1.6h-1.6zM962.4 216.5h0.8v3.2h-0.8zM962.4 221.2h0.8v1.6h-0.8zM963.6 222.8h1.6v1.6h-1.6zM964.0 221.2h0.8v1.6h-0.8zM965.2 218.0h1.6v6.3h-1.6zM965.6 224.4h0.8v3.2h-0.8zM966.8 219.6h1.6v3.2h-1.6zM967.2 222.8h0.8v1.6h-0.8zM971.6 218.0h1.6v4.7h-1.6zM973.2 218.0h1.6v4.7h-1.6zM973.6 216.5h0.8v1.6h-0.8zM974.8 222.8h1.6v1.6h-1.6zM975.2 221.2h0.8v1.6h-0.8zM987.6 207.0h1.6v4.7h-1.6zM989.2 208.6h1.6v1.6h-1.6zM990.8 208.6h1.6v6.3h-1.6zM991.2 214.9h0.8v1.6h-0.8zM1002.0 214.9h1.6v1.6h-1.6zM1002.4 211.7h0.8v3.2h-0.8zM1003.6 213.3h1.6v1.6h-1.6zM1004.0 214.9h0.8v3.2h-0.8zM1010.0 207.0h1.6v6.3h-1.6zM1010.4 205.4h0.8v1.6h-0.8zM1019.6 194.3h1.6v1.6h-1.6zM1020.0 192.8h0.8v1.6h-0.8zM1020.0 194.3h0.8v1.6h-0.8zM1021.2 195.9h1.6v4.7h-1.6zM1021.6 192.8h0.8v3.2h-0.8zM1021.6 200.7h0.8v1.6h-0.8zM1022.8 195.9h1.6v4.7h-1.6zM1023.2 200.7h0.8v3.2h-0.8zM1024.4 200.7h1.6v3.2h-1.6zM1024.8 197.5h0.8v3.2h-0.8zM1026.0 200.7h1.6v1.6h-1.6zM1026.4 197.5h0.8v3.2h-0.8zM1027.6 202.2h1.6v4.7h-1.6zM1028.0 200.7h0.8v1.6h-0.8zM1028.0 207.0h0.8v1.6h-0.8zM1029.2 203.8h1.6v3.2h-1.6zM1029.6 202.2h0.8v1.6h-0.8zM1043.6 199.1h1.6v3.2h-1.6zM1044.0 197.5h0.8v1.6h-0.8zM1046.8 205.4h1.6v6.3h-1.6zM1048.4 210.1h1.6v3.2h-1.6zM1048.8 207.0h0.8v3.2h-0.8zM1048.8 213.3h0.8v1.6h-0.8zM1050.0 211.7h1.6v6.3h-1.6zM1050.4 210.1h0.8v1.6h-0.8zM1051.6 218.0h1.6v4.7h-1.6zM1052.0 214.9h0.8v3.2h-0.8zM1053.2 218.0h1.6v1.6h-1.6zM1054.8 219.6h1.6v1.6h-1.6zM1055.2 218.0h0.8v1.6h-0.8zM1055.2 219.6h0.8v3.2h-0.8zM1058.0 216.5h1.6v1.6h-1.6zM1077.2 205.4h1.6v1.6h-1.6zM1080.4 210.1h1.6v1.6h-1.6zM1082.0 213.3h1.6v4.7h-1.6zM1082.4 211.7h0.8v1.6h-0.8zM1082.4 218.0h0.8v1.6h-0.8zM1083.6 213.3h1.6v3.2h-1.6zM1084.0 211.7h0.8v1.6h-0.8zM1084.0 216.5h0.8v1.6h-0.8zM1085.2 218.0h1.6v1.6h-1.6zM1085.6 219.6h0.8v1.6h-0.8zM1101.2 208.6h1.6v4.7h-1.6zM1101.6 207.0h0.8v1.6h-0.8zM1102.8 211.7h1.6v1.6h-1.6zM1103.2 213.3h0.8v1.6h-0.8zM1104.4 213.3h1.6v1.6h-1.6zM1107.6 214.9h1.6v1.6h-1.6zM1110.8 218.0h1.6v3.2h-1.6zM1112.4 218.0h1.6v7.9h-1.6zM1114.0 221.2h1.6v9.5h-1.6zM1114.4 218.0h0.8v3.2h-0.8zM1115.6 221.2h1.6v6.3h-1.6zM1116.0 218.0h0.8v3.2h-0.8zM1118.8 224.4h1.6v1.6h-1.6zM1119.2 221.2h0.8v3.2h-0.8zM1120.4 227.5h1.6v1.6h-1.6zM1120.8 224.4h0.8v3.2h-0.8zM1122.0 225.9h1.6v1.6h-1.6zM1122.4 224.4h0.8v1.6h-0.8zM1123.6 222.8h1.6v4.7h-1.6zM1124.0 227.5h0.8v1.6h-0.8zM1126.8 224.4h1.6v1.6h-1.6zM1127.2 221.2h0.8v3.2h-0.8zM1142.8 216.5h1.6v4.7h-1.6zM1150.8 222.8h1.6v7.9h-1.6zM1151.2 219.6h0.8v3.2h-0.8zM1154.0 232.3h1.6v1.6h-1.6zM1154.4 232.3h0.8v3.2h-0.8zM1158.8 240.2h1.6v3.2h-1.6zM1159.2 238.6h0.8v1.6h-0.8zM1160.4 237.0h1.6v1.6h-1.6zM1171.6 214.9h1.6v3.2h-1.6zM1173.2 216.5h1.6v1.6h-1.6zM1173.6 214.9h0.8v1.6h-0.8zM1174.8 216.5h1.6v1.6h-1.6zM1176.4 218.0h1.6v1.6h-1.6zM1176.8 214.9h0.8v3.2h-0.8zM1178.0 216.5h1.6v4.7h-1.6zM1178.4 213.3h0.8v3.2h-0.8zM1181.2 218.0h1.6v3.2h-1.6zM1181.6 216.5h0.8v1.6h-0.8zM1182.8 216.5h1.6v6.3h-1.6zM1183.2 222.8h0.8v1.6h-0.8zM1186.0 222.8h1.6v12.6h-1.6zM1186.4 219.6h0.8v3.2h-0.8zM1190.8 225.9h1.6v3.2h-1.6zM1191.2 224.4h0.8v1.6h-0.8zM1192.4 230.7h1.6v3.2h-1.6zM1194.0 235.4h1.6v1.6h-1.6zM1194.4 233.8h0.8v1.6h-0.8zM1195.6 237.0h1.6v1.6h-1.6zM1197.2 240.2h1.6v3.2h-1.6zM1198.8 240.2h1.6v3.2h-1.6zM1202.0 241.7h1.6v3.2h-1.6zM1202.4 244.9h0.8v1.6h-0.8zM1206.8 241.7h1.6v3.2h-1.6zM1211.6 241.7h1.6v1.6h-1.6zM1212.0 243.3h0.8v3.2h-0.8zM1213.2 241.7h1.6v3.2h-1.6zM1213.6 244.9h0.8v1.6h-0.8zM1214.8 233.8h1.6v12.6h-1.6zM1219.6 232.3h1.6v3.2h-1.6zM1220.0 229.1h0.8v3.2h-0.8zM1220.0 235.4h0.8v3.2h-0.8zM1221.2 233.8h1.6v1.6h-1.6zM1221.6 232.3h0.8v1.6h-0.8zM1221.6 235.4h0.8v1.6h-0.8zM1230.8 207.0h1.6v4.7h-1.6zM1231.2 203.8h0.8v3.2h-0.8zM1232.4 208.6h1.6v1.6h-1.6zM1235.6 211.7h1.6v6.3h-1.6zM1240.4 210.1h1.6v1.6h-1.6zM1240.8 207.0h0.8v3.2h-0.8zM1242.0 211.7h1.6v3.2h-1.6zM1242.4 214.9h0.8v1.6h-0.8zM1243.6 214.9h1.6v3.2h-1.6zM1245.2 214.9h1.6v11.1h-1.6zM1245.6 211.7h0.8v3.2h-0.8zM1246.8 225.9h1.6v3.2h-1.6zM1247.2 222.8h0.8v3.2h-0.8zM1247.2 229.1h0.8v3.2h-0.8zM1248.4 225.9h1.6v3.2h-1.6zM1250.0 222.8h1.6v7.9h-1.6zM1250.4 219.6h0.8v3.2h-0.8zM1250.4 230.7h0.8v3.2h-0.8zM1251.6 227.5h1.6v1.6h-1.6zM1252.0 227.5h0.8v3.2h-0.8zM1254.8 229.1h1.6v4.7h-1.6zM1285.2 214.9h1.6v3.2h-1.6zM1285.6 211.7h0.8v3.2h-0.8zM1285.6 218.0h0.8v3.2h-0.8zM1286.8 218.0h1.6v1.6h-1.6zM1287.2 219.6h0.8v3.2h-0.8zM1310.8 184.9h1.6v11.1h-1.6zM1314.0 200.7h1.6v4.7h-1.6zM1314.4 197.5h0.8v3.2h-0.8zM1315.6 207.0h1.6v9.5h-1.6zM1318.8 224.4h1.6v9.5h-1.6zM1319.2 221.2h0.8v3.2h-0.8zM1319.2 233.8h0.8v3.2h-0.8zM1325.2 203.8h1.6v4.7h-1.6zM1325.6 208.6h0.8v3.2h-0.8zM1326.8 205.4h1.6v1.6h-1.6zM1327.2 203.8h0.8v1.6h-0.8zM1327.2 207.0h0.8v1.6h-0.8zM1328.4 207.0h1.6v1.6h-1.6zM1328.8 203.8h0.8v3.2h-0.8zM1328.8 208.6h0.8v1.6h-0.8zM1330.0 205.4h1.6v1.6h-1.6zM1331.6 205.4h1.6v3.2h-1.6zM1333.2 207.0h1.6v3.2h-1.6zM1333.6 205.4h0.8v1.6h-0.8zM1347.6 197.5h1.6v1.6h-1.6zM1348.0 197.5h0.8v3.2h-0.8zM1355.6 189.6h1.6v1.6h-1.6zM1358.8 195.9h1.6v1.6h-1.6zM1359.2 192.8h0.8v3.2h-0.8zM1359.2 197.5h0.8v3.2h-0.8zM1363.6 205.4h1.6v6.3h-1.6zM1364.0 203.8h0.8v1.6h-0.8zM1364.0 211.7h0.8v1.6h-0.8zM1378.0 197.5h1.6v4.7h-1.6zM1379.6 194.3h1.6v1.6h-1.6zM1381.2 200.7h1.6v1.6h-1.6zM1382.8 200.7h1.6v1.6h-1.6zM1383.2 199.1h0.8v1.6h-0.8zM1384.4 203.8h1.6v3.2h-1.6zM1387.6 207.0h1.6v4.7h-1.6zM1388.0 205.4h0.8v1.6h-0.8zM1388.0 211.7h0.8v1.6h-0.8zM1389.2 211.7h1.6v1.6h-1.6zM1390.8 211.7h1.6v1.6h-1.6zM1392.4 207.0h1.6v4.7h-1.6zM1392.8 203.8h0.8v3.2h-0.8zM1400.4 197.5h1.6v4.7h-1.6zM1402.0 203.8h1.6v1.6h-1.6zM1403.6 207.0h1.6v1.6h-1.6zM1404.0 205.4h0.8v1.6h-0.8zM1422.8 180.1h1.6v1.6h-1.6zM1423.2 177.0h0.8v3.2h-0.8zM1430.8 172.2h1.6v3.2h-1.6zM1431.2 169.1h0.8v3.2h-0.8zM1445.2 137.5h1.6v4.7h-1.6zM1445.6 134.3h0.8v3.2h-0.8zM1453.2 116.9h1.6v1.6h-1.6zM1456.4 135.9h1.6v1.6h-1.6zM1466.0 118.5h1.6v4.7h-1.6zM1470.8 116.9h1.6v12.6h-1.6zM1471.2 115.3h0.8v1.6h-0.8zM1471.2 129.6h0.8v3.2h-0.8zM1472.4 128.0h1.6v6.3h-1.6zM1472.8 126.4h0.8v1.6h-0.8zM1472.8 134.3h0.8v3.2h-0.8zM1477.2 142.2h1.6v1.6h-1.6zM1477.6 140.6h0.8v1.6h-0.8zM1478.8 140.6h1.6v1.6h-1.6zM1479.2 137.5h0.8v3.2h-0.8zM1482.0 135.9h1.6v4.7h-1.6zM1486.8 131.1h1.6v1.6h-1.6zM1488.4 132.7h1.6v1.6h-1.6zM1488.8 132.7h0.8v3.2h-0.8zM1490.0 128.0h1.6v11.1h-1.6zM1490.4 139.0h0.8v1.6h-0.8zM1491.6 135.9h1.6v4.7h-1.6zM1492.0 140.6h0.8v1.6h-0.8zM1496.4 139.0h1.6v1.6h-1.6zM1498.0 139.0h1.6v3.2h-1.6zM1498.4 137.5h0.8v1.6h-0.8zM1498.4 142.2h0.8v3.2h-0.8zM1507.6 118.5h1.6v3.2h-1.6zM1512.4 120.1h1.6v3.2h-1.6zM1520.4 120.1h1.6v7.9h-1.6zM1520.8 128.0h0.8v3.2h-0.8zM1522.0 126.4h1.6v3.2h-1.6zM1522.4 123.2h0.8v3.2h-0.8zM1526.8 118.5h1.6v3.2h-1.6zM1527.2 115.3h0.8v3.2h-0.8zM1527.2 121.7h0.8v3.2h-0.8zM1530.0 115.3h1.6v1.6h-1.6zM1536.4 110.6h1.6v3.2h-1.6zM1538.0 112.2h1.6v7.9h-1.6zM1538.4 109.0h0.8v3.2h-0.8zM1538.4 120.1h0.8v3.2h-0.8zM1539.6 116.9h1.6v1.6h-1.6zM1540.0 113.8h0.8v3.2h-0.8zM1541.2 115.3h1.6v1.6h-1.6zM1541.6 116.9h0.8v1.6h-0.8zM1544.4 123.2h1.6v4.7h-1.6zM1546.0 128.0h1.6v9.5h-1.6zM1546.4 124.8h0.8v3.2h-0.8zM1547.6 142.2h1.6v1.6h-1.6zM1549.2 140.6h1.6v3.2h-1.6zM1549.6 137.5h0.8v3.2h-0.8zM1550.8 142.2h1.6v1.6h-1.6zM1566.8 129.6h1.6v1.6h-1.6zM1570.0 132.7h1.6v1.6h-1.6zM1570.4 129.6h0.8v3.2h-0.8zM1570.4 134.3h0.8v3.2h-0.8zM1571.6 132.7h1.6v3.2h-1.6zM1573.2 132.7h1.6v4.7h-1.6zM1573.6 131.1h0.8v1.6h-0.8zM1573.6 137.5h0.8v1.6h-0.8zM1574.8 137.5h1.6v1.6h-1.6zM1576.4 137.5h1.6v1.6h-1.6zM1578.0 139.0h1.6v1.6h-1.6zM1578.4 137.5h0.8v1.6h-0.8zM1586.0 132.7h1.6v1.6h-1.6zM1586.4 131.1h0.8v1.6h-0.8zM1587.6 135.9h1.6v1.6h-1.6zM1588.0 134.3h0.8v1.6h-0.8zM1603.6 123.2h1.6v6.3h-1.6zM1604.0 121.7h0.8v1.6h-0.8zM1619.6 112.2h1.6v1.6h-1.6zM1620.0 109.0h0.8v3.2h-0.8zM1621.2 112.2h1.6v6.3h-1.6zM1621.6 110.6h0.8v1.6h-0.8zM1624.4 120.1h1.6v3.2h-1.6zM1624.8 118.5h0.8v1.6h-0.8zM1630.8 109.0h1.6v1.6h-1.6zM1632.4 110.6h1.6v1.6h-1.6zM1632.8 107.4h0.8v3.2h-0.8zM1635.6 109.0h1.6v1.6h-1.6zM1651.6 98.0h1.6v1.6h-1.6zM1652.0 96.4h0.8v1.6h-0.8zM1652.0 99.5h0.8v1.6h-0.8zM1654.8 101.1h1.6v1.6h-1.6zM1655.2 98.0h0.8v3.2h-0.8zM1655.2 102.7h0.8v1.6h-0.8zM1656.4 104.3h1.6v3.2h-1.6zM1656.8 107.4h0.8v3.2h-0.8zM1658.0 102.7h1.6v3.2h-1.6zM1666.0 105.9h1.6v1.6h-1.6zM1666.4 107.4h0.8v1.6h-0.8zM1667.6 104.3h1.6v1.6h-1.6zM1668.0 102.7h0.8v1.6h-0.8zM1668.0 105.9h0.8v3.2h-0.8zM1685.2 93.2h1.6v3.2h-1.6zM1690.0 102.7h1.6v1.6h-1.6zM1690.4 99.5h0.8v3.2h-0.8zM1704.4 93.2h1.6v3.2h-1.6zM1704.8 96.4h0.8v3.2h-0.8zM1712.4 91.6h1.6v1.6h-1.6zM1714.0 91.6h1.6v4.7h-1.6zM1715.6 98.0h1.6v4.7h-1.6zM1716.0 96.4h0.8v1.6h-0.8zM1722.0 99.5h1.6v3.2h-1.6zM1722.4 102.7h0.8v3.2h-0.8zM1725.2 105.9h1.6v6.3h-1.6zM1725.6 102.7h0.8v3.2h-0.8zM1728.4 101.1h1.6v1.6h-1.6zM1728.8 98.0h0.8v3.2h-0.8zM1730.0 104.3h1.6v1.6h-1.6zM1730.4 101.1h0.8v3.2h-0.8zM1733.2 104.3h1.6v3.2h-1.6zM1733.6 101.1h0.8v3.2h-0.8zM1733.6 107.4h0.8v3.2h-0.8zM1734.8 112.2h1.6v3.2h-1.6zM1735.2 109.0h0.8v3.2h-0.8zM1736.4 118.5h1.6v3.2h-1.6zM1736.8 116.9h0.8v1.6h-0.8zM1739.6 129.6h1.6v1.6h-1.6zM1740.0 131.1h0.8v1.6h-0.8zM1746.0 126.4h1.6v1.6h-1.6zM1752.4 124.8h1.6v1.6h-1.6zM1752.8 123.2h0.8v1.6h-0.8zM1755.6 126.4h1.6v3.2h-1.6zM1756.0 123.2h0.8v3.2h-0.8zM1757.2 129.6h1.6v3.2h-1.6zM1763.6 128.0h1.6v7.9h-1.6zM1765.2 132.7h1.6v1.6h-1.6zM1765.6 129.6h0.8v3.2h-0.8zM1766.8 129.6h1.6v1.6h-1.6zM1767.2 128.0h0.8v1.6h-0.8zM1768.4 132.7h1.6v1.6h-1.6zM1768.8 129.6h0.8v3.2h-0.8zM1771.6 135.9h1.6v6.3h-1.6zM1773.2 142.2h1.6v1.6h-1.6zM1774.8 143.8h1.6v6.3h-1.6zM1775.2 140.6h0.8v3.2h-0.8zM1776.4 145.4h1.6v3.2h-1.6zM1776.8 143.8h0.8v1.6h-0.8zM1776.8 148.5h0.8v1.6h-0.8zM1778.0 151.7h1.6v1.6h-1.6zM1778.4 151.7h0.8v1.6h-0.8zM1779.6 148.5h1.6v1.6h-1.6zM1786.0 150.1h1.6v1.6h-1.6zM1798.8 143.8h1.6v3.2h-1.6zM1799.2 146.9h0.8v1.6h-0.8zM1824.4 150.1h1.6v1.6h-1.6zM1835.6 140.6h1.6v1.6h-1.6zM1836.0 142.2h0.8v3.2h-0.8zM1837.2 139.0h1.6v3.2h-1.6zM1837.6 142.2h0.8v1.6h-0.8zM1842.0 140.6h1.6v6.3h-1.6zM1843.6 143.8h1.6v6.3h-1.6zM1844.0 142.2h0.8v1.6h-0.8zM1854.8 143.8h1.6v1.6h-1.6zM1855.2 140.6h0.8v3.2h-0.8zM1872.4 124.8h1.6v6.3h-1.6zM1872.8 123.2h0.8v1.6h-0.8zM1882.0 96.4h1.6v1.6h-1.6zM1882.4 98.0h0.8v3.2h-0.8zM1883.6 99.5h1.6v1.6h-1.6zM1884.0 98.0h0.8v1.6h-0.8zM1884.0 99.5h0.8v3.2h-0.8zM1890.0 102.7h1.6v6.3h-1.6zM1890.4 101.1h0.8v1.6h-0.8zM1891.6 109.0h1.6v7.9h-1.6zM1894.8 121.7h1.6v11.1h-1.6zM1895.2 132.7h0.8v1.6h-0.8zM1896.4 131.1h1.6v7.9h-1.6zM1896.8 129.6h0.8v1.6h-0.8zM1898.0 139.0h1.6v3.2h-1.6zM1898.4 137.5h0.8v1.6h-0.8z" fill="#1478e6"/><path d="M13.2 254.4h1.6v1.6h-1.6zM13.6 251.2h0.8v3.2h-0.8zM16.4 254.4h1.6v4.7h-1.6zM16.8 259.1h0.8v1.6h-0.8zM19.6 251.2h1.6v1.6h-1.6zM21.2 249.6h1.6v3.2h-1.6zM21.6 248.1h0.8v1.6h-0.8zM32.4 248.1h1.6v1.6h-1.6zM32.8 246.5h0.8v1.6h-0.8zM32.8 249.6h0.8v3.2h-0.8zM54.8 249.6h1.6v11.1h-1.6zM55.2 248.1h0.8v1.6h-0.8zM56.4 244.9h1.6v12.6h-1.6zM58.0 241.7h1.6v1.6h-1.6zM61.2 237.0h1.6v3.2h-1.6zM61.6 240.2h0.8v1.6h-0.8zM62.8 233.8h1.6v6.3h-1.6zM63.2 232.3h0.8v1.6h-0.8zM63.2 240.2h0.8v3.2h-0.8zM64.4 237.0h1.6v1.6h-1.6zM64.8 233.8h0.8v3.2h-0.8zM66.0 235.4h1.6v3.2h-1.6zM66.4 233.8h0.8v1.6h-0.8zM67.6 237.0h1.6v1.6h-1.6zM68.0 237.0h0.8v1.6h-0.8zM69.2 230.7h1.6v1.6h-1.6zM69.6 227.5h0.8v3.2h-0.8zM69.6 232.3h0.8v1.6h-0.8zM70.8 230.7h1.6v1.6h-1.6zM72.4 230.7h1.6v1.6h-1.6zM72.8 227.5h0.8v3.2h-0.8zM74.0 230.7h1.6v1.6h-1.6zM75.6 227.5h1.6v3.2h-1.6zM77.2 225.9h1.6v1.6h-1.6zM78.8 225.9h1.6v4.7h-1.6zM79.2 222.8h0.8v3.2h-0.8zM93.2 260.7h1.6v3.2h-1.6zM93.6 259.1h0.8v1.6h-0.8zM93.6 263.9h0.8v3.2h-0.8zM96.4 263.9h1.6v3.2h-1.6zM98.0 257.5h1.6v4.7h-1.6zM98.4 262.3h0.8v3.2h-0.8zM101.2 259.1h1.6v3.2h-1.6zM102.8 260.7h1.6v1.6h-1.6zM103.2 257.5h0.8v3.2h-0.8zM110.8 262.3h1.6v1.6h-1.6zM111.2 259.1h0.8v3.2h-0.8zM128.4 268.6h1.6v1.6h-1.6zM128.8 267.0h0.8v1.6h-0.8zM131.6 259.1h1.6v3.2h-1.6zM132.0 256.0h0.8v3.2h-0.8zM133.2 257.5h1.6v1.6h-1.6zM133.6 259.1h0.8v1.6h-0.8zM134.8 249.6h1.6v3.2h-1.6zM135.2 246.5h0.8v3.2h-0.8zM150.8 259.1h1.6v1.6h-1.6zM151.2 257.5h0.8v1.6h-0.8zM152.4 260.7h1.6v1.6h-1.6zM152.8 257.5h0.8v3.2h-0.8zM154.0 257.5h1.6v1.6h-1.6zM154.4 256.0h0.8v1.6h-0.8zM157.2 251.2h1.6v1.6h-1.6zM157.6 249.6h0.8v1.6h-0.8zM170.0 273.3h1.6v1.6h-1.6zM173.2 279.7h1.6v4.7h-1.6zM173.6 284.4h0.8v3.2h-0.8zM176.4 297.0h1.6v4.7h-1.6zM181.2 308.1h1.6v1.6h-1.6zM181.6 304.9h0.8v3.2h-0.8zM182.8 308.1h1.6v1.6h-1.6zM184.4 306.5h1.6v1.6h-1.6zM186.0 304.9h1.6v1.6h-1.6zM187.6 304.9h1.6v1.6h-1.6zM188.0 301.8h0.8v3.2h-0.8zM194.0 327.1h1.6v1.6h-1.6zM194.4 323.9h0.8v3.2h-0.8zM197.2 322.3h1.6v3.2h-1.6zM197.6 319.2h0.8v3.2h-0.8zM200.4 314.4h1.6v6.3h-1.6zM208.4 309.7h1.6v6.3h-1.6zM208.8 316.0h0.8v1.6h-0.8zM210.0 309.7h1.6v4.7h-1.6zM211.6 308.1h1.6v1.6h-1.6zM213.2 301.8h1.6v3.2h-1.6zM214.8 303.4h1.6v1.6h-1.6zM215.2 300.2h0.8v3.2h-0.8zM216.4 303.4h1.6v1.6h-1.6zM216.8 303.4h0.8v1.6h-0.8zM219.6 293.9h1.6v4.7h-1.6zM220.0 298.6h0.8v1.6h-0.8zM222.8 297.0h1.6v1.6h-1.6zM223.2 297.0h0.8v3.2h-0.8zM229.2 295.5h1.6v3.2h-1.6zM229.6 293.9h0.8v1.6h-0.8zM229.6 298.6h0.8v3.2h-0.8zM230.8 297.0h1.6v1.6h-1.6zM231.2 298.6h0.8v3.2h-0.8zM242.0 300.2h1.6v6.3h-1.6zM245.2 300.2h1.6v1.6h-1.6zM245.6 297.0h0.8v3.2h-0.8zM245.6 301.8h0.8v3.2h-0.8zM254.8 309.7h1.6v1.6h-1.6zM255.2 309.7h0.8v1.6h-0.8zM261.2 319.2h1.6v1.6h-1.6zM261.6 316.0h0.8v3.2h-0.8zM266.0 309.7h1.6v3.2h-1.6zM266.4 308.1h0.8v1.6h-0.8zM266.4 312.8h0.8v1.6h-0.8zM267.6 304.9h1.6v3.2h-1.6zM268.0 301.8h0.8v3.2h-0.8zM269.2 303.4h1.6v3.2h-1.6zM269.6 300.2h0.8v3.2h-0.8zM283.6 319.2h1.6v1.6h-1.6zM285.2 316.0h1.6v4.7h-1.6zM285.6 312.8h0.8v3.2h-0.8zM285.6 320.7h0.8v1.6h-0.8zM286.8 316.0h1.6v4.7h-1.6zM287.2 314.4h0.8v1.6h-0.8zM288.4 317.6h1.6v1.6h-1.6zM288.8 316.0h0.8v1.6h-0.8zM298.0 330.2h1.6v1.6h-1.6zM298.4 328.6h0.8v1.6h-0.8zM298.4 331.8h0.8v1.6h-0.8zM302.8 328.6h1.6v1.6h-1.6zM303.2 330.2h0.8v3.2h-0.8zM304.4 327.1h1.6v3.2h-1.6zM307.6 328.6h1.6v1.6h-1.6zM308.0 325.5h0.8v3.2h-0.8zM310.8 327.1h1.6v4.7h-1.6zM311.2 331.8h0.8v1.6h-0.8zM318.8 341.3h1.6v3.2h-1.6zM325.2 346.0h1.6v6.3h-1.6zM328.4 339.7h1.6v1.6h-1.6zM330.0 339.7h1.6v1.6h-1.6zM330.4 336.5h0.8v3.2h-0.8zM331.6 335.0h1.6v3.2h-1.6zM332.0 338.1h0.8v1.6h-0.8zM334.8 333.4h1.6v1.6h-1.6zM335.2 330.2h0.8v3.2h-0.8zM338.0 338.1h1.6v1.6h-1.6zM338.4 336.5h0.8v1.6h-0.8zM344.4 335.0h1.6v4.7h-1.6zM344.8 333.4h0.8v1.6h-0.8zM344.8 339.7h0.8v3.2h-0.8zM352.4 331.8h1.6v3.2h-1.6zM352.8 330.2h0.8v1.6h-0.8zM355.6 335.0h1.6v1.6h-1.6zM356.0 331.8h0.8v3.2h-0.8zM368.4 349.2h1.6v1.6h-1.6zM368.8 346.0h0.8v3.2h-0.8zM370.0 344.4h1.6v1.6h-1.6zM371.6 344.4h1.6v3.2h-1.6zM372.0 341.3h0.8v3.2h-0.8zM374.8 341.3h1.6v1.6h-1.6zM376.4 341.3h1.6v4.7h-1.6zM378.0 335.0h1.6v4.7h-1.6zM379.6 335.0h1.6v4.7h-1.6zM380.0 333.4h0.8v1.6h-0.8zM386.0 331.8h1.6v4.7h-1.6zM386.4 328.6h0.8v3.2h-0.8zM386.4 336.5h0.8v3.2h-0.8zM389.2 331.8h1.6v4.7h-1.6zM392.4 322.3h1.6v3.2h-1.6zM392.8 320.7h0.8v1.6h-0.8zM392.8 325.5h0.8v3.2h-0.8zM403.6 330.2h1.6v3.2h-1.6zM404.0 327.1h0.8v3.2h-0.8zM408.4 327.1h1.6v6.3h-1.6zM408.8 325.5h0.8v1.6h-0.8zM410.0 327.1h1.6v1.6h-1.6zM411.6 322.3h1.6v4.7h-1.6zM412.0 319.2h0.8v3.2h-0.8zM413.2 320.7h1.6v6.3h-1.6zM414.8 319.2h1.6v3.2h-1.6zM416.4 316.0h1.6v6.3h-1.6zM416.8 312.8h0.8v3.2h-0.8zM418.0 312.8h1.6v4.7h-1.6zM418.4 317.6h0.8v1.6h-0.8zM419.6 312.8h1.6v1.6h-1.6zM420.0 309.7h0.8v3.2h-0.8zM420.0 314.4h0.8v1.6h-0.8zM426.0 317.6h1.6v3.2h-1.6zM426.4 314.4h0.8v3.2h-0.8zM426.4 320.7h0.8v3.2h-0.8zM427.6 314.4h1.6v3.2h-1.6zM432.4 308.1h1.6v1.6h-1.6zM432.8 309.7h0.8v3.2h-0.8zM438.8 309.7h1.6v4.7h-1.6zM439.2 306.5h0.8v3.2h-0.8zM443.6 309.7h1.6v1.6h-1.6zM444.0 306.5h0.8v3.2h-0.8zM444.0 309.7h0.8v1.6h-0.8zM446.8 304.9h1.6v1.6h-1.6zM448.4 306.5h1.6v1.6h-1.6zM448.8 303.4h0.8v3.2h-0.8zM450.0 300.2h1.6v4.7h-1.6zM451.6 300.2h1.6v3.2h-1.6zM452.0 303.4h0.8v1.6h-0.8zM453.2 303.4h1.6v1.6h-1.6zM453.6 300.2h0.8v3.2h-0.8zM453.6 304.9h0.8v3.2h-0.8zM454.8 304.9h1.6v1.6h-1.6zM456.4 298.6h1.6v3.2h-1.6zM456.8 297.0h0.8v1.6h-0.8zM458.0 298.6h1.6v4.7h-1.6zM458.4 297.0h0.8v1.6h-0.8zM466.0 304.9h1.6v1.6h-1.6zM466.4 301.8h0.8v3.2h-0.8zM467.6 303.4h1.6v1.6h-1.6zM468.0 300.2h0.8v3.2h-0.8zM468.0 304.9h0.8v1.6h-0.8zM469.2 297.0h1.6v11.1h-1.6zM470.8 290.7h1.6v11.1h-1.6zM471.2 287.6h0.8v3.2h-0.8zM477.2 293.9h1.6v1.6h-1.6zM477.6 292.3h0.8v1.6h-0.8zM478.8 293.9h1.6v1.6h-1.6zM479.2 292.3h0.8v1.6h-0.8zM480.4 292.3h1.6v7.9h-1.6zM480.8 290.7h0.8v1.6h-0.8zM480.8 300.2h0.8v1.6h-0.8zM482.0 293.9h1.6v1.6h-1.6zM483.6 290.7h1.6v1.6h-1.6zM486.8 287.6h1.6v4.7h-1.6zM487.2 286.0h0.8v1.6h-0.8zM488.4 289.1h1.6v1.6h-1.6zM493.2 287.6h1.6v3.2h-1.6zM493.6 286.0h0.8v1.6h-0.8zM494.8 290.7h1.6v3.2h-1.6zM495.2 293.9h0.8v3.2h-0.8zM504.4 295.5h1.6v1.6h-1.6zM504.8 297.0h0.8v1.6h-0.8zM506.0 293.9h1.6v1.6h-1.6zM506.4 295.5h0.8v3.2h-0.8zM509.2 290.7h1.6v4.7h-1.6zM509.6 295.5h0.8v1.6h-0.8zM510.8 292.3h1.6v3.2h-1.6zM511.2 290.7h0.8v1.6h-0.8zM512.4 286.0h1.6v9.5h-1.6zM512.8 282.8h0.8v3.2h-0.8zM512.8 295.5h0.8v1.6h-0.8zM520.4 298.6h1.6v1.6h-1.6zM520.8 295.5h0.8v3.2h-0.8zM523.6 300.2h1.6v4.7h-1.6zM534.8 304.9h1.6v1.6h-1.6zM535.2 303.4h0.8v1.6h-0.8zM558.8 325.5h1.6v3.2h-1.6zM559.2 323.9h0.8v1.6h-0.8zM560.4 325.5h1.6v1.6h-1.6zM562.0 319.2h1.6v3.2h-1.6zM562.4 317.6h0.8v1.6h-0.8zM562.4 322.3h0.8v1.6h-0.8zM578.0 330.2h1.6v1.6h-1.6zM581.2 322.3h1.6v3.2h-1.6zM581.6 320.7h0.8v1.6h-0.8zM584.4 319.2h1.6v3.2h-1.6zM584.8 316.0h0.8v3.2h-0.8zM584.8 322.3h0.8v3.2h-0.8zM586.0 317.6h1.6v4.7h-1.6zM586.4 316.0h0.8v1.6h-0.8zM587.6 314.4h1.6v1.6h-1.6zM588.0 311.3h0.8v3.2h-0.8zM598.8 323.9h1.6v3.2h-1.6zM599.2 322.3h0.8v1.6h-0.8zM605.2 327.1h1.6v6.3h-1.6zM605.6 325.5h0.8v1.6h-0.8zM606.8 327.1h1.6v4.7h-1.6zM607.2 325.5h0.8v1.6h-0.8zM607.2 331.8h0.8v1.6h-0.8zM608.4 325.5h1.6v3.2h-1.6zM608.8 322.3h0.8v3.2h-0.8zM608.8 328.6h0.8v3.2h-0.8zM616.4 328.6h1.6v3.2h-1.6zM618.0 325.5h1.6v4.7h-1.6zM618.4 322.3h0.8v3.2h-0.8zM621.2 319.2h1.6v1.6h-1.6zM622.8 314.4h1.6v4.7h-1.6zM626.0 312.8h1.6v3.2h-1.6zM626.4 316.0h0.8v1.6h-0.8zM627.6 309.7h1.6v3.2h-1.6zM630.8 306.5h1.6v4.7h-1.6zM632.4 311.3h1.6v3.2h-1.6zM632.8 308.1h0.8v3.2h-0.8zM642.0 314.4h1.6v1.6h-1.6zM643.6 308.1h1.6v3.2h-1.6zM644.0 306.5h0.8v1.6h-0.8zM644.0 311.3h0.8v3.2h-0.8zM645.2 309.7h1.6v1.6h-1.6zM646.8 304.9h1.6v6.3h-1.6zM647.2 303.4h0.8v1.6h-0.8zM653.2 301.8h1.6v1.6h-1.6zM653.6 300.2h0.8v1.6h-0.8zM654.8 301.8h1.6v1.6h-1.6zM655.2 300.2h0.8v1.6h-0.8zM656.4 300.2h1.6v4.7h-1.6zM656.8 297.0h0.8v3.2h-0.8zM656.8 304.9h0.8v3.2h-0.8zM658.0 300.2h1.6v1.6h-1.6zM659.6 298.6h1.6v1.6h-1.6zM660.0 298.6h0.8v3.2h-0.8zM662.8 290.7h1.6v1.6h-1.6zM663.2 292.3h0.8v1.6h-0.8zM674.0 304.9h1.6v1.6h-1.6zM675.6 300.2h1.6v3.2h-1.6zM676.0 303.4h0.8v3.2h-0.8zM682.0 292.3h1.6v4.7h-1.6zM682.4 289.1h0.8v3.2h-0.8zM683.6 289.1h1.6v1.6h-1.6zM684.0 287.6h0.8v1.6h-0.8zM704.4 298.6h1.6v1.6h-1.6zM704.8 297.0h0.8v1.6h-0.8zM704.8 300.2h0.8v3.2h-0.8zM706.0 278.1h1.6v20.5h-1.6zM707.6 268.6h1.6v12.6h-1.6zM708.0 267.0h0.8v1.6h-0.8zM708.0 281.2h0.8v3.2h-0.8zM709.2 270.2h1.6v1.6h-1.6zM712.4 265.4h1.6v1.6h-1.6zM712.8 263.9h0.8v1.6h-0.8zM714.0 267.0h1.6v1.6h-1.6zM714.4 268.6h0.8v3.2h-0.8zM726.8 260.7h1.6v6.3h-1.6zM727.2 259.1h0.8v1.6h-0.8zM734.8 262.3h1.6v4.7h-1.6zM735.2 259.1h0.8v3.2h-0.8zM735.2 267.0h0.8v1.6h-0.8zM736.4 260.7h1.6v1.6h-1.6zM744.4 248.1h1.6v1.6h-1.6zM744.8 246.5h0.8v1.6h-0.8zM744.8 249.6h0.8v3.2h-0.8zM746.0 238.6h1.6v7.9h-1.6zM746.4 235.4h0.8v3.2h-0.8zM746.4 246.5h0.8v3.2h-0.8zM747.6 240.2h1.6v4.7h-1.6zM748.0 237.0h0.8v3.2h-0.8zM748.0 244.9h0.8v1.6h-0.8zM754.0 243.3h1.6v1.6h-1.6zM754.4 241.7h0.8v1.6h-0.8zM766.8 238.6h1.6v1.6h-1.6zM770.0 238.6h1.6v3.2h-1.6zM773.2 244.9h1.6v1.6h-1.6zM773.6 241.7h0.8v3.2h-0.8zM779.6 251.2h1.6v1.6h-1.6zM786.0 246.5h1.6v4.7h-1.6zM792.4 230.7h1.6v6.3h-1.6zM792.8 237.0h0.8v1.6h-0.8zM794.0 229.1h1.6v3.2h-1.6zM794.4 227.5h0.8v1.6h-0.8zM798.8 225.9h1.6v3.2h-1.6zM800.4 225.9h1.6v1.6h-1.6zM800.8 224.4h0.8v1.6h-0.8zM805.2 222.8h1.6v4.7h-1.6zM805.6 219.6h0.8v3.2h-0.8zM819.6 240.2h1.6v1.6h-1.6zM821.2 238.6h1.6v4.7h-1.6zM821.6 243.3h0.8v3.2h-0.8zM822.8 241.7h1.6v1.6h-1.6zM835.6 259.1h1.6v4.7h-1.6zM836.0 263.9h0.8v1.6h-0.8zM842.0 262.3h1.6v4.7h-1.6zM842.4 260.7h0.8v1.6h-0.8zM842.4 267.0h0.8v3.2h-0.8zM848.4 243.3h1.6v6.3h-1.6zM848.8 241.7h0.8v1.6h-0.8zM851.6 241.7h1.6v3.2h-1.6zM853.2 241.7h1.6v4.7h-1.6zM854.8 241.7h1.6v3.2h-1.6zM855.2 238.6h0.8v3.2h-0.8zM856.4 243.3h1.6v1.6h-1.6zM856.8 240.2h0.8v3.2h-0.8zM859.6 240.2h1.6v1.6h-1.6zM861.2 238.6h1.6v1.6h-1.6zM861.6 237.0h0.8v1.6h-0.8zM861.6 238.6h0.8v3.2h-0.8zM864.4 233.8h1.6v1.6h-1.6zM869.2 235.4h1.6v1.6h-1.6zM869.6 232.3h0.8v3.2h-0.8zM875.6 233.8h1.6v3.2h-1.6zM876.0 230.7h0.8v3.2h-0.8zM877.2 235.4h1.6v1.6h-1.6zM877.6 233.8h0.8v1.6h-0.8zM878.8 233.8h1.6v1.6h-1.6zM880.4 232.3h1.6v3.2h-1.6zM888.4 241.7h1.6v7.9h-1.6zM888.8 238.6h0.8v3.2h-0.8zM891.6 248.1h1.6v3.2h-1.6zM896.4 235.4h1.6v1.6h-1.6zM898.0 232.3h1.6v1.6h-1.6zM898.4 230.7h0.8v1.6h-0.8zM912.4 232.3h1.6v1.6h-1.6zM912.8 229.1h0.8v3.2h-0.8zM915.6 232.3h1.6v1.6h-1.6zM925.2 233.8h1.6v6.3h-1.6zM925.6 230.7h0.8v3.2h-0.8zM925.6 240.2h0.8v3.2h-0.8zM926.8 232.3h1.6v6.3h-1.6zM927.2 229.1h0.8v3.2h-0.8zM927.2 238.6h0.8v3.2h-0.8zM928.4 230.7h1.6v1.6h-1.6zM928.8 227.5h0.8v3.2h-0.8zM928.8 232.3h0.8v3.2h-0.8zM930.0 229.1h1.6v1.6h-1.6zM930.4 230.7h0.8v3.2h-0.8zM933.2 225.9h1.6v1.6h-1.6zM936.4 224.4h1.6v3.2h-1.6zM936.8 222.8h0.8v1.6h-0.8zM936.8 227.5h0.8v3.2h-0.8zM938.0 221.2h1.6v1.6h-1.6zM939.6 221.2h1.6v6.3h-1.6zM940.0 227.5h0.8v1.6h-0.8zM941.2 221.2h1.6v1.6h-1.6zM941.6 219.6h0.8v1.6h-0.8zM941.6 222.8h0.8v1.6h-0.8zM942.8 219.6h1.6v1.6h-1.6zM944.4 214.9h1.6v6.3h-1.6zM944.8 211.7h0.8v3.2h-0.8zM946.0 216.5h1.6v3.2h-1.6zM946.4 213.3h0.8v3.2h-0.8zM949.2 219.6h1.6v1.6h-1.6zM950.8 213.3h1.6v4.7h-1.6zM968.4 222.8h1.6v1.6h-1.6zM968.8 219.6h0.8v3.2h-0.8zM968.8 224.4h0.8v3.2h-0.8zM976.4 225.9h1.6v1.6h-1.6zM976.8 224.4h0.8v1.6h-0.8zM978.0 224.4h1.6v3.2h-1.6zM978.4 221.2h0.8v3.2h-0.8zM979.6 218.0h1.6v4.7h-1.6zM981.2 216.5h1.6v6.3h-1.6zM981.6 213.3h0.8v3.2h-0.8zM981.6 222.8h0.8v3.2h-0.8zM984.4 208.6h1.6v7.9h-1.6zM986.0 207.0h1.6v1.6h-1.6zM986.4 205.4h0.8v1.6h-0.8zM992.4 213.3h1.6v1.6h-1.6zM994.0 213.3h1.6v1.6h-1.6zM994.4 210.1h0.8v3.2h-0.8zM995.6 211.7h1.6v1.6h-1.6zM996.0 208.6h0.8v3.2h-0.8zM998.8 208.6h1.6v1.6h-1.6zM1000.4 208.6h1.6v6.3h-1.6zM1000.8 214.9h0.8v1.6h-0.8zM1006.8 213.3h1.6v3.2h-1.6zM1007.2 216.5h0.8v1.6h-0.8zM1008.4 213.3h1.6v1.6h-1.6zM1011.6 202.2h1.6v3.2h-1.6zM1013.2 199.1h1.6v3.2h-1.6zM1014.8 195.9h1.6v3.2h-1.6zM1015.2 192.8h0.8v3.2h-0.8zM1016.4 197.5h1.6v3.2h-1.6zM1016.8 200.7h0.8v3.2h-0.8zM1018.0 195.9h1.6v3.2h-1.6zM1018.4 192.8h0.8v3.2h-0.8zM1018.4 199.1h0.8v1.6h-0.8zM1030.8 203.8h1.6v1.6h-1.6zM1031.2 202.2h0.8v1.6h-0.8zM1035.6 203.8h1.6v1.6h-1.6zM1037.2 203.8h1.6v1.6h-1.6zM1037.6 200.7h0.8v3.2h-0.8zM1040.4 199.1h1.6v3.2h-1.6zM1040.8 195.9h0.8v3.2h-0.8zM1042.0 197.5h1.6v1.6h-1.6zM1042.4 199.1h0.8v3.2h-0.8zM1056.4 219.6h1.6v1.6h-1.6zM1056.8 218.0h0.8v1.6h-0.8zM1059.6 218.0h1.6v1.6h-1.6zM1060.0 216.5h0.8v1.6h-0.8zM1060.0 219.6h0.8v3.2h-0.8zM1061.2 216.5h1.6v1.6h-1.6zM1061.6 213.3h0.8v3.2h-0.8zM1062.8 216.5h1.6v1.6h-1.6zM1063.2 213.3h0.8v3.2h-0.8zM1066.0 216.5h1.6v1.6h-1.6zM1066.4 214.9h0.8v1.6h-0.8zM1070.8 213.3h1.6v1.6h-1.6zM1072.4 211.7h1.6v3.2h-1.6zM1072.8 210.1h0.8v1.6h-0.8zM1072.8 214.9h0.8v3.2h-0.8zM1074.0 207.0h1.6v3.2h-1.6zM1074.4 205.4h0.8v1.6h-0.8zM1074.4 210.1h0.8v3.2h-0.8zM1075.6 203.8h1.6v4.7h-1.6zM1078.8 205.4h1.6v6.3h-1.6zM1079.2 202.2h0.8v3.2h-0.8zM1086.8 211.7h1.6v6.3h-1.6zM1087.2 208.6h0.8v3.2h-0.8zM1091.6 208.6h1.6v1.6h-1.6zM1092.0 207.0h0.8v1.6h-0.8zM1094.8 205.4h1.6v1.6h-1.6zM1095.2 202.2h0.8v3.2h-0.8zM1098.0 207.0h1.6v1.6h-1.6zM1098.4 205.4h0.8v1.6h-0.8zM1099.6 207.0h1.6v3.2h-1.6zM1100.0 203.8h0.8v3.2h-0.8zM1117.2 225.9h1.6v3.2h-1.6zM1117.6 224.4h0.8v1.6h-0.8zM1117.6 229.1h0.8v3.2h-0.8zM1125.2 225.9h1.6v4.7h-1.6zM1125.6 222.8h0.8v3.2h-0.8zM1128.4 222.8h1.6v3.2h-1.6zM1128.8 219.6h0.8v3.2h-0.8zM1130.0 222.8h1.6v1.6h-1.6zM1130.4 219.6h0.8v3.2h-0.8zM1131.6 222.8h1.6v6.3h-1.6zM1133.2 221.2h1.6v4.7h-1.6zM1134.8 221.2h1.6v1.6h-1.6zM1136.4 221.2h1.6v3.2h-1.6zM1136.8 219.6h0.8v1.6h-0.8zM1136.8 224.4h0.8v1.6h-0.8zM1138.0 222.8h1.6v1.6h-1.6zM1138.4 219.6h0.8v3.2h-0.8zM1138.4 222.8h0.8v3.2h-0.8zM1139.6 218.0h1.6v1.6h-1.6zM1140.0 214.9h0.8v3.2h-0.8zM1141.2 218.0h1.6v1.6h-1.6zM1141.6 214.9h0.8v3.2h-0.8zM1157.2 238.6h1.6v3.2h-1.6zM1157.6 237.0h0.8v1.6h-0.8zM1157.6 241.7h0.8v3.2h-0.8zM1163.6 237.0h1.6v6.3h-1.6zM1164.0 233.8h0.8v3.2h-0.8zM1164.0 243.3h0.8v1.6h-0.8zM1166.8 227.5h1.6v9.5h-1.6zM1167.2 237.0h0.8v3.2h-0.8zM1168.4 221.2h1.6v3.2h-1.6zM1168.8 219.6h0.8v1.6h-0.8zM1179.6 214.9h1.6v4.7h-1.6zM1189.2 229.1h1.6v4.7h-1.6zM1200.4 243.3h1.6v1.6h-1.6zM1200.8 240.2h0.8v3.2h-0.8zM1203.6 243.3h1.6v1.6h-1.6zM1205.2 240.2h1.6v3.2h-1.6zM1208.4 238.6h1.6v1.6h-1.6zM1210.0 238.6h1.6v1.6h-1.6zM1210.4 235.4h0.8v3.2h-0.8zM1210.4 240.2h0.8v1.6h-0.8zM1222.8 225.9h1.6v7.9h-1.6zM1224.4 225.9h1.6v4.7h-1.6zM1227.6 214.9h1.6v1.6h-1.6zM1228.0 216.5h0.8v1.6h-0.8zM1229.2 208.6h1.6v7.9h-1.6zM1229.6 216.5h0.8v3.2h-0.8zM1237.2 213.3h1.6v4.7h-1.6zM1237.6 218.0h0.8v3.2h-0.8zM1238.8 208.6h1.6v3.2h-1.6zM1239.2 205.4h0.8v3.2h-0.8zM1259.6 230.7h1.6v3.2h-1.6zM1264.4 221.2h1.6v4.7h-1.6zM1264.8 225.9h0.8v1.6h-0.8zM1266.0 219.6h1.6v7.9h-1.6zM1267.6 222.8h1.6v1.6h-1.6zM1270.8 219.6h1.6v1.6h-1.6zM1272.4 214.9h1.6v6.3h-1.6zM1274.0 218.0h1.6v1.6h-1.6zM1274.4 216.5h0.8v1.6h-0.8zM1274.4 218.0h0.8v1.6h-0.8zM1275.6 214.9h1.6v1.6h-1.6zM1276.0 216.5h0.8v1.6h-0.8zM1277.2 213.3h1.6v1.6h-1.6zM1282.0 211.7h1.6v4.7h-1.6zM1282.4 216.5h0.8v1.6h-0.8zM1283.6 214.9h1.6v4.7h-1.6zM1284.0 213.3h0.8v1.6h-0.8zM1284.0 219.6h0.8v3.2h-0.8zM1288.4 216.5h1.6v4.7h-1.6zM1288.8 221.2h0.8v1.6h-0.8zM1290.0 214.9h1.6v3.2h-1.6zM1291.6 211.7h1.6v1.6h-1.6zM1292.0 208.6h0.8v3.2h-0.8zM1293.2 208.6h1.6v1.6h-1.6zM1294.8 208.6h1.6v1.6h-1.6zM1295.2 207.0h0.8v1.6h-0.8zM1296.4 207.0h1.6v1.6h-1.6zM1296.8 205.4h0.8v1.6h-0.8zM1296.8 208.6h0.8v3.2h-0.8zM1298.0 208.6h1.6v1.6h-1.6zM1298.4 205.4h0.8v3.2h-0.8zM1299.6 207.0h1.6v1.6h-1.6zM1301.2 202.2h1.6v4.7h-1.6zM1302.8 199.1h1.6v3.2h-1.6zM1304.4 197.5h1.6v1.6h-1.6zM1304.8 199.1h0.8v1.6h-0.8zM1307.6 180.1h1.6v9.5h-1.6zM1317.2 213.3h1.6v9.5h-1.6zM1320.4 224.4h1.6v9.5h-1.6zM1320.8 221.2h0.8v3.2h-0.8zM1322.0 213.3h1.6v11.1h-1.6zM1322.4 224.4h0.8v1.6h-0.8zM1334.8 207.0h1.6v1.6h-1.6zM1335.2 203.8h0.8v3.2h-0.8zM1336.4 207.0h1.6v3.2h-1.6zM1336.8 203.8h0.8v3.2h-0.8zM1336.8 210.1h0.8v1.6h-0.8zM1338.0 205.4h1.6v1.6h-1.6zM1339.6 203.8h1.6v1.6h-1.6zM1340.0 200.7h0.8v3.2h-0.8zM1341.2 203.8h1.6v3.2h-1.6zM1341.6 200.7h0.8v3.2h-0.8zM1342.8 195.9h1.6v3.2h-1.6zM1343.2 192.8h0.8v3.2h-0.8zM1344.4 197.5h1.6v3.2h-1.6zM1344.8 194.3h0.8v3.2h-0.8zM1344.8 200.7h0.8v1.6h-0.8zM1346.0 199.1h1.6v1.6h-1.6zM1349.2 192.8h1.6v6.3h-1.6zM1349.6 191.2h0.8v1.6h-0.8zM1350.8 189.6h1.6v7.9h-1.6zM1351.2 186.4h0.8v3.2h-0.8zM1352.4 189.6h1.6v4.7h-1.6zM1354.0 188.0h1.6v4.7h-1.6zM1354.4 186.4h0.8v1.6h-0.8zM1357.2 191.2h1.6v3.2h-1.6zM1357.6 189.6h0.8v1.6h-0.8zM1357.6 194.3h0.8v1.6h-0.8zM1360.4 195.9h1.6v4.7h-1.6zM1360.8 194.3h0.8v1.6h-0.8zM1360.8 200.7h0.8v1.6h-0.8zM1365.2 207.0h1.6v3.2h-1.6zM1365.6 205.4h0.8v1.6h-0.8zM1366.8 205.4h1.6v1.6h-1.6zM1367.2 207.0h0.8v1.6h-0.8zM1368.4 199.1h1.6v6.3h-1.6zM1368.8 195.9h0.8v3.2h-0.8zM1368.8 205.4h0.8v1.6h-0.8zM1370.0 200.7h1.6v1.6h-1.6zM1370.4 199.1h0.8v1.6h-0.8zM1370.4 202.2h0.8v3.2h-0.8zM1376.4 197.5h1.6v3.2h-1.6zM1394.0 203.8h1.6v6.3h-1.6zM1394.4 200.7h0.8v3.2h-0.8zM1394.4 210.1h0.8v1.6h-0.8zM1395.6 202.2h1.6v1.6h-1.6zM1397.2 195.9h1.6v3.2h-1.6zM1397.6 194.3h0.8v1.6h-0.8zM1397.6 199.1h0.8v1.6h-0.8zM1405.2 203.8h1.6v4.7h-1.6zM1405.6 208.6h0.8v1.6h-0.8zM1408.4 205.4h1.6v1.6h-1.6zM1408.8 207.0h0.8v3.2h-0.8zM1410.0 203.8h1.6v3.2h-1.6zM1411.6 202.2h1.6v1.6h-1.6zM1412.0 199.1h0.8v3.2h-0.8zM1412.0 203.8h0.8v3.2h-0.8zM1413.2 200.7h1.6v1.6h-1.6zM1413.6 199.1h0.8v1.6h-0.8zM1414.8 197.5h1.6v1.6h-1.6zM1415.2 194.3h0.8v3.2h-0.8zM1415.2 199.1h0.8v1.6h-0.8zM1416.4 192.8h1.6v1.6h-1.6zM1416.8 191.2h0.8v1.6h-0.8zM1416.8 192.8h0.8v1.6h-0.8zM1418.0 188.0h1.6v6.3h-1.6zM1419.6 186.4h1.6v1.6h-1.6zM1421.2 183.3h1.6v3.2h-1.6zM1421.6 180.1h0.8v3.2h-0.8zM1421.6 186.4h0.8v1.6h-0.8zM1424.4 183.3h1.6v1.6h-1.6zM1424.8 184.9h0.8v1.6h-0.8zM1427.6 177.0h1.6v1.6h-1.6zM1428.0 175.4h0.8v1.6h-0.8zM1432.4 169.1h1.6v1.6h-1.6zM1432.8 165.9h0.8v3.2h-0.8zM1434.0 165.9h1.6v1.6h-1.6zM1434.4 164.3h0.8v1.6h-0.8zM1435.6 165.9h1.6v3.2h-1.6zM1437.2 161.2h1.6v1.6h-1.6zM1437.6 159.6h0.8v1.6h-0.8zM1442.0 143.8h1.6v7.9h-1.6zM1442.4 140.6h0.8v3.2h-0.8zM1446.8 135.9h1.6v6.3h-1.6zM1447.2 134.3h0.8v1.6h-0.8zM1448.4 131.1h1.6v3.2h-1.6zM1448.8 128.0h0.8v3.2h-0.8zM1450.0 123.2h1.6v4.7h-1.6zM1450.4 121.7h0.8v1.6h-0.8zM1451.6 121.7h1.6v4.7h-1.6zM1452.0 118.5h0.8v3.2h-0.8zM1452.0 126.4h0.8v3.2h-0.8zM1458.0 131.1h1.6v1.6h-1.6zM1459.6 121.7h1.6v7.9h-1.6zM1460.0 120.1h0.8v1.6h-0.8zM1460.0 129.6h0.8v1.6h-0.8zM1462.8 116.9h1.6v4.7h-1.6zM1464.4 118.5h1.6v1.6h-1.6zM1464.8 116.9h0.8v1.6h-0.8zM1467.6 115.3h1.6v1.6h-1.6zM1468.0 112.2h0.8v3.2h-0.8zM1469.2 115.3h1.6v1.6h-1.6zM1469.6 116.9h0.8v1.6h-0.8zM1475.6 140.6h1.6v1.6h-1.6zM1476.0 142.2h0.8v1.6h-0.8zM1480.4 134.3h1.6v3.2h-1.6zM1480.8 132.7h0.8v1.6h-0.8zM1483.6 131.1h1.6v1.6h-1.6zM1484.0 128.0h0.8v3.2h-0.8zM1484.0 131.1h0.8v3.2h-0.8zM1493.2 134.3h1.6v3.2h-1.6zM1501.2 129.6h1.6v3.2h-1.6zM1501.6 128.0h0.8v1.6h-0.8zM1502.8 124.8h1.6v4.7h-1.6zM1503.2 123.2h0.8v1.6h-0.8zM1503.2 129.6h0.8v1.6h-0.8zM1504.4 123.2h1.6v4.7h-1.6zM1506.0 121.7h1.6v1.6h-1.6zM1509.2 121.7h1.6v1.6h-1.6zM1510.8 120.1h1.6v1.6h-1.6zM1511.2 116.9h0.8v3.2h-0.8zM1514.0 115.3h1.6v7.9h-1.6zM1514.4 123.2h0.8v1.6h-0.8zM1515.6 118.5h1.6v3.2h-1.6zM1516.0 121.7h0.8v3.2h-0.8zM1517.2 120.1h1.6v1.6h-1.6zM1518.8 116.9h1.6v6.3h-1.6zM1519.2 123.2h0.8v3.2h-0.8zM1523.6 124.8h1.6v6.3h-1.6zM1531.6 113.8h1.6v1.6h-1.6zM1532.0 112.2h0.8v1.6h-0.8zM1532.0 115.3h0.8v1.6h-0.8zM1542.8 120.1h1.6v6.3h-1.6zM1543.2 126.4h0.8v3.2h-0.8zM1554.0 137.5h1.6v6.3h-1.6zM1555.6 134.3h1.6v6.3h-1.6zM1556.0 132.7h0.8v1.6h-0.8zM1557.2 131.1h1.6v6.3h-1.6zM1557.6 129.6h0.8v1.6h-0.8zM1560.4 129.6h1.6v1.6h-1.6zM1563.6 131.1h1.6v1.6h-1.6zM1564.0 129.6h0.8v1.6h-0.8zM1564.0 131.1h0.8v3.2h-0.8zM1565.2 124.8h1.6v6.3h-1.6zM1565.6 121.7h0.8v3.2h-0.8zM1568.4 128.0h1.6v4.7h-1.6zM1568.8 126.4h0.8v1.6h-0.8zM1579.6 142.2h1.6v1.6h-1.6zM1580.0 142.2h0.8v3.2h-0.8zM1581.2 139.0h1.6v4.7h-1.6zM1581.6 143.8h0.8v1.6h-0.8zM1584.4 132.7h1.6v4.7h-1.6zM1584.8 131.1h0.8v1.6h-0.8zM1589.2 134.3h1.6v3.2h-1.6zM1589.6 132.7h0.8v1.6h-0.8zM1592.4 137.5h1.6v1.6h-1.6zM1592.8 139.0h0.8v3.2h-0.8zM1594.0 135.9h1.6v3.2h-1.6zM1594.4 132.7h0.8v3.2h-0.8zM1595.6 135.9h1.6v3.2h-1.6zM1596.0 139.0h0.8v1.6h-0.8zM1597.2 131.1h1.6v1.6h-1.6zM1598.8 129.6h1.6v6.3h-1.6zM1599.2 128.0h0.8v1.6h-0.8zM1600.4 124.8h1.6v3.2h-1.6zM1600.8 123.2h0.8v1.6h-0.8zM1602.0 126.4h1.6v1.6h-1.6zM1602.4 123.2h0.8v3.2h-0.8zM1602.4 126.4h0.8v1.6h-0.8zM1605.2 115.3h1.6v9.5h-1.6zM1606.8 115.3h1.6v1.6h-1.6zM1607.2 116.9h0.8v3.2h-0.8zM1608.4 116.9h1.6v1.6h-1.6zM1608.8 115.3h0.8v1.6h-0.8zM1614.8 113.8h1.6v1.6h-1.6zM1615.2 110.6h0.8v3.2h-0.8zM1616.4 112.2h1.6v3.2h-1.6zM1616.8 109.0h0.8v3.2h-0.8zM1616.8 115.3h0.8v3.2h-0.8zM1618.0 112.2h1.6v1.6h-1.6zM1618.4 109.0h0.8v3.2h-0.8zM1622.8 113.8h1.6v6.3h-1.6zM1623.2 112.2h0.8v1.6h-0.8zM1629.2 110.6h1.6v1.6h-1.6zM1629.6 109.0h0.8v1.6h-0.8zM1638.8 113.8h1.6v3.2h-1.6zM1639.2 112.2h0.8v1.6h-0.8zM1640.4 110.6h1.6v1.6h-1.6zM1642.0 110.6h1.6v1.6h-1.6zM1642.4 109.0h0.8v1.6h-0.8zM1642.4 112.2h0.8v3.2h-0.8zM1643.6 109.0h1.6v1.6h-1.6zM1650.0 101.1h1.6v4.7h-1.6zM1650.4 98.0h0.8v3.2h-0.8zM1653.2 102.7h1.6v1.6h-1.6zM1653.6 99.5h0.8v3.2h-0.8zM1662.8 110.6h1.6v1.6h-1.6zM1670.8 109.0h1.6v3.2h-1.6zM1671.2 112.2h0.8v1.6h-0.8zM1672.4 107.4h1.6v4.7h-1.6zM1672.8 105.9h0.8v1.6h-0.8zM1675.6 102.7h1.6v6.3h-1.6zM1676.0 99.5h0.8v3.2h-0.8zM1677.2 98.0h1.6v1.6h-1.6zM1677.6 94.8h0.8v3.2h-0.8zM1678.8 96.4h1.6v1.6h-1.6zM1679.2 98.0h0.8v1.6h-0.8zM1680.4 90.1h1.6v1.6h-1.6zM1691.6 105.9h1.6v1.6h-1.6zM1692.0 104.3h0.8v1.6h-0.8zM1692.0 105.9h0.8v3.2h-0.8zM1694.8 102.7h1.6v1.6h-1.6zM1696.4 99.5h1.6v3.2h-1.6zM1696.8 98.0h0.8v1.6h-0.8zM1698.0 96.4h1.6v6.3h-1.6zM1699.6 99.5h1.6v3.2h-1.6zM1700.0 98.0h0.8v1.6h-0.8zM1706.0 94.8h1.6v3.2h-1.6zM1707.6 93.2h1.6v1.6h-1.6zM1710.8 93.2h1.6v1.6h-1.6zM1711.2 94.8h0.8v3.2h-0.8zM1717.2 102.7h1.6v1.6h-1.6zM1717.6 101.1h0.8v1.6h-0.8zM1718.8 99.5h1.6v1.6h-1.6zM1719.2 96.4h0.8v3.2h-0.8zM1719.2 101.1h0.8v3.2h-0.8zM1720.4 99.5h1.6v4.7h-1.6zM1726.8 102.7h1.6v6.3h-1.6zM1742.8 128.0h1.6v3.2h-1.6zM1744.4 124.8h1.6v3.2h-1.6zM1744.8 128.0h0.8v1.6h-0.8zM1747.6 124.8h1.6v1.6h-1.6zM1748.0 124.8h0.8v3.2h-0.8zM1749.2 124.8h1.6v1.6h-1.6zM1749.6 121.7h0.8v3.2h-0.8zM1750.8 123.2h1.6v1.6h-1.6zM1751.2 121.7h0.8v1.6h-0.8zM1758.8 129.6h1.6v1.6h-1.6zM1759.2 126.4h0.8v3.2h-0.8zM1760.4 129.6h1.6v1.6h-1.6zM1760.8 131.1h0.8v1.6h-0.8zM1762.0 129.6h1.6v1.6h-1.6zM1762.4 128.0h0.8v1.6h-0.8zM1762.4 129.6h0.8v3.2h-0.8zM1787.6 150.1h1.6v1.6h-1.6zM1792.4 140.6h1.6v4.7h-1.6zM1803.6 154.8h1.6v4.7h-1.6zM1805.2 153.3h1.6v6.3h-1.6zM1805.6 151.7h0.8v1.6h-0.8zM1819.6 150.1h1.6v4.7h-1.6zM1829.2 145.4h1.6v4.7h-1.6zM1829.6 142.2h0.8v3.2h-0.8zM1845.2 148.5h1.6v1.6h-1.6zM1850.0 145.4h1.6v4.7h-1.6zM1850.4 150.1h0.8v3.2h-0.8zM1851.6 148.5h1.6v1.6h-1.6zM1852.0 150.1h0.8v3.2h-0.8zM1856.4 143.8h1.6v1.6h-1.6zM1856.8 142.2h0.8v1.6h-0.8zM1864.4 137.5h1.6v1.6h-1.6zM1866.0 135.9h1.6v1.6h-1.6zM1866.4 137.5h0.8v3.2h-0.8zM1869.2 131.1h1.6v1.6h-1.6zM1870.8 129.6h1.6v1.6h-1.6zM1874.0 120.1h1.6v1.6h-1.6zM1874.4 121.7h0.8v3.2h-0.8zM1877.2 107.4h1.6v6.3h-1.6zM1877.6 105.9h0.8v1.6h-0.8zM1877.6 113.8h0.8v3.2h-0.8zM1880.4 91.6h1.6v12.6h-1.6zM1885.2 102.7h1.6v1.6h-1.6zM1885.6 99.5h0.8v3.2h-0.8zM1886.8 102.7h1.6v1.6h-1.6zM1887.2 99.5h0.8v3.2h-0.8zM1887.2 102.7h0.8v3.2h-0.8zM1888.4 94.8h1.6v4.7h-1.6zM1888.8 93.2h0.8v1.6h-0.8zM1888.8 99.5h0.8v1.6h-0.8zM1893.2 116.9h1.6v4.7h-1.6zM1893.6 121.7h0.8v3.2h-0.8z" fill="#ff0000"/><rect x="1898" y="136" width="1.6" height="8" fill="#f0ec80"/><rect x="1898.6" y="143" width="2.4" height="1.6" fill="#f0ec80"/><rect x="1870.1" y="121.9" width="2" height="16.3" fill="#1478e6"/><rect x="1871.6" y="127.9" width="2" height="11.9" fill="#ff0000"/><rect x="1873.8" y="114.5" width="2" height="23.7" fill="#ff0000"/><rect x="1876.0" y="116.0" width="2" height="8.9" fill="#ff0000"/><rect x="1878.3" y="95.3" width="2" height="20.7" fill="#ff0000"/><rect x="1880.5" y="93.8" width="2" height="8.9" fill="#1478e6"/><rect x="1884.2" y="105.6" width="2" height="7.4" fill="#1478e6"/><rect x="1886.4" y="98.2" width="2" height="7.4" fill="#ff0000"/><rect x="1891.6" y="107.1" width="2" height="11.9" fill="#1478e6"/><rect x="1893.8" y="120.4" width="2" height="8.9" fill="#1478e6"/>
<text xml:space="preserve" transform="translate(12.80,93.1) scale(1.0000,1)" font-size="19.2" font-family="Liberation Sans" font-weight="normal" fill="#d4d4d4" >時刻</text><g font-size="20.4" font-family="Liberation Sans" font-weight="normal" fill="#d4d4d4"><text transform="translate(55.20,93.1) scale(0.72,1)" text-anchor="middle">:</text><text transform="translate(64.80,93.1) scale(0.72,1)" text-anchor="middle">0</text><text transform="translate(74.40,93.1) scale(0.72,1)" text-anchor="middle">6</text><text transform="translate(84.00,93.1) scale(0.72,1)" text-anchor="middle">:</text><text transform="translate(93.60,93.1) scale(0.72,1)" text-anchor="middle">0</text><text transform="translate(103.20,93.1) scale(0.72,1)" text-anchor="middle">0</text></g><text xml:space="preserve" transform="translate(118.40,93.1) scale(1.0000,1)" font-size="19.2" font-family="Liberation Sans" font-weight="normal" fill="#d4d4d4" >始値</text><g font-size="20.4" font-family="Liberation Sans" font-weight="normal" fill="#d4d4d4"><text transform="translate(160.80,93.1) scale(0.72,1)" text-anchor="middle">:</text><path d="M171.80 78.90V93.10M168.60 82.10L171.80 79.10" stroke="#d4d4d4" stroke-width="1.5" fill="none"/><text transform="translate(180.00,93.1) scale(0.72,1)" text-anchor="middle">3</text><text transform="translate(189.60,93.1) scale(0.72,1)" text-anchor="middle">,</text><text transform="translate(199.20,93.1) scale(0.72,1)" text-anchor="middle">9</text><path d="M210.20 78.90V93.10M207.00 82.10L210.20 79.10" stroke="#d4d4d4" stroke-width="1.5" fill="none"/><path d="M219.80 78.90V93.10M216.60 82.10L219.80 79.10" stroke="#d4d4d4" stroke-width="1.5" fill="none"/></g><text xml:space="preserve" transform="translate(233.60,93.1) scale(1.0000,1)" font-size="19.2" font-family="Liberation Sans" font-weight="normal" fill="#d4d4d4" >高値</text><g font-size="20.4" font-family="Liberation Sans" font-weight="normal" fill="#d4d4d4"><text transform="translate(276.00,93.1) scale(0.72,1)" text-anchor="middle">:</text><path d="M287.00 78.90V93.10M283.80 82.10L287.00 79.10" stroke="#d4d4d4" stroke-width="1.5" fill="none"/><text transform="translate(295.20,93.1) scale(0.72,1)" text-anchor="middle">3</text><text transform="translate(304.80,93.1) scale(0.72,1)" text-anchor="middle">,</text><text transform="translate(314.40,93.1) scale(0.72,1)" text-anchor="middle">9</text><path d="M325.40 78.90V93.10M322.20 82.10L325.40 79.10" stroke="#d4d4d4" stroke-width="1.5" fill="none"/><path d="M335.00 78.90V93.10M331.80 82.10L335.00 79.10" stroke="#d4d4d4" stroke-width="1.5" fill="none"/></g><text xml:space="preserve" transform="translate(348.80,93.1) scale(1.0000,1)" font-size="19.2" font-family="Liberation Sans" font-weight="normal" fill="#d4d4d4" >安値</text><g font-size="20.4" font-family="Liberation Sans" font-weight="normal" fill="#d4d4d4"><text transform="translate(391.20,93.1) scale(0.72,1)" text-anchor="middle">:</text><path d="M402.20 78.90V93.10M399.00 82.10L402.20 79.10" stroke="#d4d4d4" stroke-width="1.5" fill="none"/><text transform="translate(410.40,93.1) scale(0.72,1)" text-anchor="middle">3</text><text transform="translate(420.00,93.1) scale(0.72,1)" text-anchor="middle">,</text><text transform="translate(429.60,93.1) scale(0.72,1)" text-anchor="middle">9</text><path d="M440.60 78.90V93.10M437.40 82.10L440.60 79.10" stroke="#d4d4d4" stroke-width="1.5" fill="none"/><path d="M450.20 78.90V93.10M447.00 82.10L450.20 79.10" stroke="#d4d4d4" stroke-width="1.5" fill="none"/></g><text xml:space="preserve" transform="translate(464.00,93.1) scale(1.0000,1)" font-size="19.2" font-family="Liberation Sans" font-weight="normal" fill="#d4d4d4" >終値</text><g font-size="20.4" font-family="Liberation Sans" font-weight="normal" fill="#d4d4d4"><text transform="translate(506.40,93.1) scale(0.72,1)" text-anchor="middle">:</text><path d="M517.40 78.90V93.10M514.20 82.10L517.40 79.10" stroke="#d4d4d4" stroke-width="1.5" fill="none"/><text transform="translate(525.60,93.1) scale(0.72,1)" text-anchor="middle">3</text><text transform="translate(535.20,93.1) scale(0.72,1)" text-anchor="middle">,</text><text transform="translate(544.80,93.1) scale(0.72,1)" text-anchor="middle">9</text><path d="M555.80 78.90V93.10M552.60 82.10L555.80 79.10" stroke="#d4d4d4" stroke-width="1.5" fill="none"/><path d="M565.40 78.90V93.10M562.20 82.10L565.40 79.10" stroke="#d4d4d4" stroke-width="1.5" fill="none"/></g>
<g font-size="20.4" font-family="Liberation Sans" font-weight="normal" fill="#cccccc"><text transform="translate(1364.00,360.0) scale(0.72,1)" text-anchor="middle">3</text><path d="M1375.00 345.80V360.00M1371.80 349.00L1375.00 346.00" stroke="#cccccc" stroke-width="1.5" fill="none"/></g>
</g>
<g font-size="20.4" font-family="Liberation Sans" font-weight="bold" fill="#f0f0f0" stroke="#f0f0f0" stroke-width="0.6"><text transform="translate(35.50,384.7) scale(0.74,1)" text-anchor="middle">0</text><text transform="translate(45.10,384.7) scale(0.74,1)" text-anchor="middle">6</text></g>
<g font-size="20.4" font-family="Liberation Sans" font-weight="normal" fill="#cccccc"><text transform="translate(85.00,384.7) scale(0.72,1)" text-anchor="middle">0</text><text transform="translate(94.60,384.7) scale(0.72,1)" text-anchor="middle">9</text></g>
<g font-size="20.4" font-family="Liberation Sans" font-weight="normal" fill="#cccccc"><path d="M181.40 370.50V384.70M178.20 373.70L181.40 370.70" stroke="#cccccc" stroke-width="1.5" fill="none"/><text transform="translate(189.60,384.7) scale(0.72,1)" text-anchor="middle">0</text></g>
<g font-size="20.4" font-family="Liberation Sans" font-weight="normal" fill="#cccccc"><path d="M276.70 370.50V384.70M273.50 373.70L276.70 370.70" stroke="#cccccc" stroke-width="1.5" fill="none"/><path d="M286.30 370.50V384.70M283.10 373.70L286.30 370.70" stroke="#cccccc" stroke-width="1.5" fill="none"/></g>
<g font-size="20.4" font-family="Liberation Sans" font-weight="normal" fill="#cccccc"><path d="M368.80 370.50V384.70M365.60 373.70L368.80 370.70" stroke="#cccccc" stroke-width="1.5" fill="none"/><text transform="translate(377.00,384.7) scale(0.72,1)" text-anchor="middle">2</text></g>
<g font-size="20.4" font-family="Liberation Sans" font-weight="normal" fill="#cccccc"><path d="M462.70 370.50V384.70M459.50 373.70L462.70 370.70" stroke="#cccccc" stroke-width="1.5" fill="none"/><text transform="translate(470.90,384.7) scale(0.72,1)" text-anchor="middle">3</text></g>
<g font-size="20.4" font-family="Liberation Sans" font-weight="normal" fill="#cccccc"><path d="M556.10 370.50V384.70M552.90 373.70L556.10 370.70" stroke="#cccccc" stroke-width="1.5" fill="none"/><text transform="translate(564.30,384.7) scale(0.72,1)" text-anchor="middle">4</text></g>
<g font-size="20.4" font-family="Liberation Sans" font-weight="normal" fill="#cccccc"><path d="M649.70 370.50V384.70M646.50 373.70L649.70 370.70" stroke="#cccccc" stroke-width="1.5" fill="none"/><text transform="translate(657.90,384.7) scale(0.72,1)" text-anchor="middle">5</text></g>
<g font-size="20.4" font-family="Liberation Sans" font-weight="normal" fill="#cccccc"><path d="M712.40 370.50V384.70M709.20 373.70L712.40 370.70" stroke="#cccccc" stroke-width="1.5" fill="none"/><text transform="translate(720.60,384.7) scale(0.72,1)" text-anchor="middle">7</text></g>
<g font-size="20.4" font-family="Liberation Sans" font-weight="normal" fill="#cccccc"><path d="M807.70 370.50V384.70M804.50 373.70L807.70 370.70" stroke="#cccccc" stroke-width="1.5" fill="none"/><text transform="translate(815.90,384.7) scale(0.72,1)" text-anchor="middle">8</text></g>
<g font-size="20.4" font-family="Liberation Sans" font-weight="normal" fill="#cccccc"><path d="M899.70 370.50V384.70M896.50 373.70L899.70 370.70" stroke="#cccccc" stroke-width="1.5" fill="none"/><text transform="translate(907.90,384.7) scale(0.72,1)" text-anchor="middle">9</text></g>
<g font-size="20.4" font-family="Liberation Sans" font-weight="normal" fill="#cccccc"><text transform="translate(987.40,384.7) scale(0.72,1)" text-anchor="middle">2</text><text transform="translate(997.00,384.7) scale(0.72,1)" text-anchor="middle">0</text></g>
<g font-size="20.4" font-family="Liberation Sans" font-weight="normal" fill="#cccccc"><text transform="translate(1083.00,384.7) scale(0.72,1)" text-anchor="middle">2</text><path d="M1094.00 370.50V384.70M1090.80 373.70L1094.00 370.70" stroke="#cccccc" stroke-width="1.5" fill="none"/></g>
<g font-size="20.4" font-family="Liberation Sans" font-weight="normal" fill="#cccccc"><text transform="translate(1171.80,384.7) scale(0.72,1)" text-anchor="middle">2</text><text transform="translate(1181.40,384.7) scale(0.72,1)" text-anchor="middle">2</text></g>
<g font-size="20.4" font-family="Liberation Sans" font-weight="normal" fill="#cccccc"><text transform="translate(1267.20,384.7) scale(0.72,1)" text-anchor="middle">2</text><text transform="translate(1276.80,384.7) scale(0.72,1)" text-anchor="middle">3</text></g>
<g font-size="20.4" font-family="Liberation Sans" font-weight="normal" fill="#cccccc"><text transform="translate(1362.30,384.7) scale(0.72,1)" text-anchor="middle">0</text><text transform="translate(1371.90,384.7) scale(0.72,1)" text-anchor="middle">0</text></g>
<g font-size="20.4" font-family="Liberation Sans" font-weight="normal" fill="#cccccc"><text transform="translate(1456.60,384.7) scale(0.72,1)" text-anchor="middle">0</text><path d="M1467.60 370.50V384.70M1464.40 373.70L1467.60 370.70" stroke="#cccccc" stroke-width="1.5" fill="none"/></g>
<g font-size="20.4" font-family="Liberation Sans" font-weight="normal" fill="#cccccc"><text transform="translate(1551.60,384.7) scale(0.72,1)" text-anchor="middle">0</text><text transform="translate(1561.20,384.7) scale(0.72,1)" text-anchor="middle">2</text></g>
<g font-size="20.4" font-family="Liberation Sans" font-weight="normal" fill="#cccccc"><text transform="translate(1645.10,384.7) scale(0.72,1)" text-anchor="middle">0</text><text transform="translate(1654.70,384.7) scale(0.72,1)" text-anchor="middle">3</text></g>
<g font-size="20.4" font-family="Liberation Sans" font-weight="normal" fill="#cccccc"><text transform="translate(1737.20,384.7) scale(0.72,1)" text-anchor="middle">0</text><text transform="translate(1746.80,384.7) scale(0.72,1)" text-anchor="middle">4</text></g>
<g font-size="20.4" font-family="Liberation Sans" font-weight="normal" fill="#cccccc"><text transform="translate(1822.00,384.7) scale(0.72,1)" text-anchor="middle">0</text><text transform="translate(1831.60,384.7) scale(0.72,1)" text-anchor="middle">5</text></g>
<g font-size="20.4" font-family="Liberation Sans" font-weight="normal" fill="#cccccc"><text transform="translate(1879.00,384.7) scale(0.72,1)" text-anchor="middle">0</text><text transform="translate(1888.60,384.7) scale(0.72,1)" text-anchor="middle">6</text></g>
<g clip-path="url(#ax0)">
<g font-size="20.4" font-family="Liberation Sans" font-weight="normal" fill="#cccccc"><path d="M1913.90 63.50V77.70M1910.70 66.70L1913.90 63.70" stroke="#cccccc" stroke-width="1.5" fill="none"/><text transform="translate(1922.10,77.7) scale(0.72,1)" text-anchor="middle">3</text><text transform="translate(1931.70,77.7) scale(0.72,1)" text-anchor="middle">,</text><text transform="translate(1941.30,77.7) scale(0.72,1)" text-anchor="middle">9</text><text transform="translate(1950.90,77.7) scale(0.72,1)" text-anchor="middle">5</text><text transform="translate(1960.50,77.7) scale(0.72,1)" text-anchor="middle">0</text></g>
<g font-size="20.4" font-family="Liberation Sans" font-weight="normal" fill="#cccccc"><path d="M1913.90 142.90V157.10M1910.70 146.10L1913.90 143.10" stroke="#cccccc" stroke-width="1.5" fill="none"/><text transform="translate(1922.10,157.10000000000002) scale(0.72,1)" text-anchor="middle">3</text><text transform="translate(1931.70,157.10000000000002) scale(0.72,1)" text-anchor="middle">,</text><text transform="translate(1941.30,157.10000000000002) scale(0.72,1)" text-anchor="middle">9</text><text transform="translate(1950.90,157.10000000000002) scale(0.72,1)" text-anchor="middle">0</text><text transform="translate(1960.50,157.10000000000002) scale(0.72,1)" text-anchor="middle">0</text></g>
<g font-size="20.4" font-family="Liberation Sans" font-weight="normal" fill="#cccccc"><path d="M1913.90 221.20V235.40M1910.70 224.40L1913.90 221.40" stroke="#cccccc" stroke-width="1.5" fill="none"/><text transform="translate(1922.10,235.4) scale(0.72,1)" text-anchor="middle">3</text><text transform="translate(1931.70,235.4) scale(0.72,1)" text-anchor="middle">,</text><text transform="translate(1941.30,235.4) scale(0.72,1)" text-anchor="middle">8</text><text transform="translate(1950.90,235.4) scale(0.72,1)" text-anchor="middle">5</text><text transform="translate(1960.50,235.4) scale(0.72,1)" text-anchor="middle">0</text></g>
<g font-size="20.4" font-family="Liberation Sans" font-weight="normal" fill="#cccccc"><path d="M1913.90 300.50V314.70M1910.70 303.70L1913.90 300.70" stroke="#cccccc" stroke-width="1.5" fill="none"/><text transform="translate(1922.10,314.7) scale(0.72,1)" text-anchor="middle">3</text><text transform="translate(1931.70,314.7) scale(0.72,1)" text-anchor="middle">,</text><text transform="translate(1941.30,314.7) scale(0.72,1)" text-anchor="middle">8</text><text transform="translate(1950.90,314.7) scale(0.72,1)" text-anchor="middle">0</text><text transform="translate(1960.50,314.7) scale(0.72,1)" text-anchor="middle">0</text></g>
<g font-size="20.4" font-family="Liberation Sans" font-weight="normal" fill="#cccccc"><path d="M1913.90 379.70V393.90M1910.70 382.90L1913.90 379.90" stroke="#cccccc" stroke-width="1.5" fill="none"/><text transform="translate(1922.10,393.90000000000003) scale(0.72,1)" text-anchor="middle">3</text><text transform="translate(1931.70,393.90000000000003) scale(0.72,1)" text-anchor="middle">,</text><text transform="translate(1941.30,393.90000000000003) scale(0.72,1)" text-anchor="middle">7</text><text transform="translate(1950.90,393.90000000000003) scale(0.72,1)" text-anchor="middle">5</text><text transform="translate(1960.50,393.90000000000003) scale(0.72,1)" text-anchor="middle">0</text></g>
<rect x="1905.8" y="126.3" width="93.5" height="34.500000000000014" fill="#e4e4e4"/>
<rect x="1907.4" y="127.89999999999999" width="90.3" height="31.300000000000015" fill="#d4d4d4"/>
<g font-size="20.4" font-family="Liberation Sans" font-weight="bold" fill="#000" stroke="#000" stroke-width="0.6"><path d="M1929.10 133.90V148.10M1925.90 137.10L1929.10 134.10" stroke="#000" stroke-width="2.6" fill="none"/><text transform="translate(1937.30,148.1) scale(0.74,1)" text-anchor="middle">3</text><text transform="translate(1946.90,148.1) scale(0.74,1)" text-anchor="middle">,</text><text transform="translate(1956.50,148.1) scale(0.74,1)" text-anchor="middle">9</text><path d="M1967.50 133.90V148.10M1964.30 137.10L1967.50 134.10" stroke="#000" stroke-width="2.6" fill="none"/><path d="M1977.10 133.90V148.10M1973.90 137.10L1977.10 134.10" stroke="#000" stroke-width="2.6" fill="none"/></g>
</g>
</svg>
<svg width="2011" height="1080" style="position:absolute;left:0;top:0">
<defs><clipPath id="c1"><rect x="11" y="402.5" width="1894.5" height="321.1"/></clipPath><clipPath id="ax1"><rect x="1907" y="400.3" width="92" height="348.99999999999994"/></clipPath></defs>
<g clip-path="url(#c1)">
<line x1="56.3" y1="402.5" x2="56.3" y2="723.6" stroke="#b4b4b4" stroke-width="3.2" stroke-dasharray="1.6 1.6"/>
<line x1="80.5" y1="402.5" x2="80.5" y2="723.6" stroke="#8c8c8c" stroke-width="1.6" stroke-dasharray="1.6 1.6"/>
<line x1="175.5" y1="402.5" x2="175.5" y2="723.6" stroke="#8c8c8c" stroke-width="1.6" stroke-dasharray="1.6 1.6"/>
<line x1="270.8" y1="402.5" x2="270.8" y2="723.6" stroke="#8c8c8c" stroke-width="1.6" stroke-dasharray="1.6 1.6"/>
<line x1="362.9" y1="402.5" x2="362.9" y2="723.6" stroke="#8c8c8c" stroke-width="1.6" stroke-dasharray="1.6 1.6"/>
<line x1="456.8" y1="402.5" x2="456.8" y2="723.6" stroke="#8c8c8c" stroke-width="1.6" stroke-dasharray="1.6 1.6"/>
<line x1="550.2" y1="402.5" x2="550.2" y2="723.6" stroke="#8c8c8c" stroke-width="1.6" stroke-dasharray="1.6 1.6"/>
<line x1="643.8" y1="402.5" x2="643.8" y2="723.6" stroke="#8c8c8c" stroke-width="1.6" stroke-dasharray="1.6 1.6"/>
<line x1="706.5" y1="402.5" x2="706.5" y2="723.6" stroke="#8c8c8c" stroke-width="1.6" stroke-dasharray="1.6 1.6"/>
<line x1="801.8" y1="402.5" x2="801.8" y2="723.6" stroke="#8c8c8c" stroke-width="1.6" stroke-dasharray="1.6 1.6"/>
<line x1="893.8" y1="402.5" x2="893.8" y2="723.6" stroke="#8c8c8c" stroke-width="1.6" stroke-dasharray="1.6 1.6"/>
<line x1="982.9" y1="402.5" x2="982.9" y2="723.6" stroke="#8c8c8c" stroke-width="1.6" stroke-dasharray="1.6 1.6"/>
<line x1="1078.5" y1="402.5" x2="1078.5" y2="723.6" stroke="#8c8c8c" stroke-width="1.6" stroke-dasharray="1.6 1.6"/>
<line x1="1167.3" y1="402.5" x2="1167.3" y2="723.6" stroke="#8c8c8c" stroke-width="1.6" stroke-dasharray="1.6 1.6"/>
<line x1="1262.7" y1="402.5" x2="1262.7" y2="723.6" stroke="#8c8c8c" stroke-width="1.6" stroke-dasharray="1.6 1.6"/>
<line x1="1357.8" y1="402.5" x2="1357.8" y2="723.6" stroke="#8c8c8c" stroke-width="1.6" stroke-dasharray="1.6 1.6"/>
<line x1="1452.1" y1="402.5" x2="1452.1" y2="723.6" stroke="#8c8c8c" stroke-width="1.6" stroke-dasharray="1.6 1.6"/>
<line x1="1547.1" y1="402.5" x2="1547.1" y2="723.6" stroke="#8c8c8c" stroke-width="1.6" stroke-dasharray="1.6 1.6"/>
<line x1="1640.6" y1="402.5" x2="1640.6" y2="723.6" stroke="#8c8c8c" stroke-width="1.6" stroke-dasharray="1.6 1.6"/>
<line x1="1732.7" y1="402.5" x2="1732.7" y2="723.6" stroke="#8c8c8c" stroke-width="1.6" stroke-dasharray="1.6 1.6"/>
<line x1="1817.5" y1="402.5" x2="1817.5" y2="723.6" stroke="#8c8c8c" stroke-width="1.6" stroke-dasharray="1.6 1.6"/>
<line x1="1898.7" y1="402.5" x2="1898.7" y2="723.6" stroke="#8c8c8c" stroke-width="1.6" stroke-dasharray="1.6 1.6"/>
<line x1="11" y1="428.0" x2="1905.5" y2="428.0" stroke="#8c8c8c" stroke-width="1.6" stroke-dasharray="1.6 1.6"/>
<line x1="11" y1="481.0" x2="1905.5" y2="481.0" stroke="#8c8c8c" stroke-width="1.6" stroke-dasharray="1.6 1.6"/>
<line x1="11" y1="534.0" x2="1905.5" y2="534.0" stroke="#8c8c8c" stroke-width="1.6" stroke-dasharray="1.6 1.6"/>
<line x1="11" y1="587.3" x2="1905.5" y2="587.3" stroke="#8c8c8c" stroke-width="1.6" stroke-dasharray="1.6 1.6"/>
<line x1="11" y1="640.3" x2="1905.5" y2="640.3" stroke="#8c8c8c" stroke-width="1.6" stroke-dasharray="1.6 1.6"/>
<line x1="11" y1="693.3" x2="1905.5" y2="693.3" stroke="#8c8c8c" stroke-width="1.6" stroke-dasharray="1.6 1.6"/>
<path d="M63.9 598.1h3.2v1.6h-3.2zM65.5 587.5h3.2v1.6h-3.2zM76.7 592.8h3.2v1.6h-3.2zM78.3 587.5h3.2v1.6h-3.2zM83.1 598.1h3.2v1.6h-3.2zM84.7 603.4h3.2v1.6h-3.2zM91.1 614.0h3.2v1.6h-3.2zM99.1 608.7h3.2v1.6h-3.2zM102.3 651.1h3.2v1.6h-3.2zM103.9 645.8h3.2v1.6h-3.2zM110.3 672.3h3.2v1.6h-3.2zM119.9 661.7h3.2v1.6h-3.2zM121.5 661.7h3.2v1.6h-3.2zM131.1 688.2h3.2v1.6h-3.2zM134.3 682.9h3.2v1.6h-3.2zM135.9 682.9h3.2v1.6h-3.2zM139.1 672.3h3.2v1.6h-3.2zM148.7 677.6h3.2v1.6h-3.2zM150.3 677.6h3.2v1.6h-3.2zM153.5 682.9h3.2v1.6h-3.2zM159.9 677.6h3.2v1.6h-3.2zM163.1 688.2h3.2v1.6h-3.2zM166.3 688.2h3.2v1.6h-3.2zM167.9 693.5h3.2v1.6h-3.2zM172.7 682.9h3.2v1.6h-3.2zM174.3 693.5h3.2v1.6h-3.2zM179.1 698.8h3.2v1.6h-3.2zM180.7 698.8h3.2v1.6h-3.2zM182.3 698.8h3.2v1.6h-3.2zM183.9 698.8h3.2v1.6h-3.2zM188.7 688.2h3.2v1.6h-3.2zM190.3 682.9h3.2v1.6h-3.2zM196.7 688.2h3.2v1.6h-3.2zM201.5 693.5h3.2v1.6h-3.2zM203.1 682.9h3.2v1.6h-3.2zM204.7 682.9h3.2v1.6h-3.2zM206.3 688.2h3.2v1.6h-3.2zM207.9 688.2h3.2v1.6h-3.2zM209.5 693.5h3.2v1.6h-3.2zM212.7 682.9h3.2v1.6h-3.2zM215.9 682.9h3.2v1.6h-3.2zM217.5 688.2h3.2v1.6h-3.2zM233.5 672.3h3.2v1.6h-3.2zM238.3 667.0h3.2v1.6h-3.2zM239.9 667.0h3.2v1.6h-3.2zM241.5 677.6h3.2v1.6h-3.2zM243.1 667.0h3.2v1.6h-3.2zM247.9 672.3h3.2v1.6h-3.2zM249.5 656.4h3.2v1.6h-3.2zM251.1 672.3h3.2v1.6h-3.2zM252.7 667.0h3.2v1.6h-3.2zM254.3 677.6h3.2v1.6h-3.2zM257.5 672.3h3.2v1.6h-3.2zM262.3 667.0h3.2v1.6h-3.2zM267.1 667.0h3.2v1.6h-3.2zM268.7 661.7h3.2v1.6h-3.2zM287.9 672.3h3.2v1.6h-3.2zM289.5 677.6h3.2v1.6h-3.2zM291.1 682.9h3.2v1.6h-3.2zM294.3 688.2h3.2v1.6h-3.2zM302.3 704.1h3.2v1.6h-3.2zM303.9 693.5h3.2v1.6h-3.2zM310.3 698.8h3.2v1.6h-3.2zM311.9 704.1h3.2v1.6h-3.2zM327.9 688.2h3.2v1.6h-3.2zM339.1 693.5h3.2v1.6h-3.2zM348.7 693.5h3.2v1.6h-3.2zM350.3 698.8h3.2v1.6h-3.2zM358.3 693.5h3.2v1.6h-3.2zM361.5 698.8h3.2v1.6h-3.2zM366.3 698.8h3.2v1.6h-3.2zM369.5 704.1h3.2v1.6h-3.2zM371.1 704.1h3.2v1.6h-3.2zM372.7 698.8h3.2v1.6h-3.2zM382.3 677.6h3.2v1.6h-3.2zM383.9 667.0h3.2v1.6h-3.2zM391.9 656.4h3.2v1.6h-3.2zM398.3 651.1h3.2v1.6h-3.2zM399.9 661.7h3.2v1.6h-3.2zM401.5 661.7h3.2v1.6h-3.2zM403.1 661.7h3.2v1.6h-3.2zM404.7 661.7h3.2v1.6h-3.2zM406.3 661.7h3.2v1.6h-3.2zM407.9 661.7h3.2v1.6h-3.2zM412.7 656.4h3.2v1.6h-3.2zM415.9 656.4h3.2v1.6h-3.2zM422.3 651.1h3.2v1.6h-3.2zM425.5 656.4h3.2v1.6h-3.2zM428.7 656.4h3.2v1.6h-3.2zM438.3 656.4h3.2v1.6h-3.2zM439.9 656.4h3.2v1.6h-3.2zM441.5 651.1h3.2v1.6h-3.2zM444.7 651.1h3.2v1.6h-3.2zM449.5 656.4h3.2v1.6h-3.2zM454.3 661.7h3.2v1.6h-3.2zM455.9 651.1h3.2v1.6h-3.2zM457.5 656.4h3.2v1.6h-3.2zM459.1 656.4h3.2v1.6h-3.2zM460.7 656.4h3.2v1.6h-3.2zM463.9 651.1h3.2v1.6h-3.2zM465.5 651.1h3.2v1.6h-3.2zM467.1 645.8h3.2v1.6h-3.2zM468.7 651.1h3.2v1.6h-3.2zM470.3 645.8h3.2v1.6h-3.2zM476.7 640.5h3.2v1.6h-3.2zM491.1 640.5h3.2v1.6h-3.2zM502.3 645.8h3.2v1.6h-3.2zM503.9 645.8h3.2v1.6h-3.2zM505.5 645.8h3.2v1.6h-3.2zM508.7 640.5h3.2v1.6h-3.2zM510.3 635.2h3.2v1.6h-3.2zM521.5 640.5h3.2v1.6h-3.2zM523.1 640.5h3.2v1.6h-3.2zM527.9 645.8h3.2v1.6h-3.2zM529.5 645.8h3.2v1.6h-3.2zM539.1 667.0h3.2v1.6h-3.2zM543.9 688.2h3.2v1.6h-3.2zM547.1 682.9h3.2v1.6h-3.2zM553.5 709.4h3.2v1.6h-3.2zM555.1 704.1h3.2v1.6h-3.2zM558.3 693.5h3.2v1.6h-3.2zM561.5 693.5h3.2v1.6h-3.2zM564.7 693.5h3.2v1.6h-3.2zM580.7 693.5h3.2v1.6h-3.2zM583.9 688.2h3.2v1.6h-3.2zM587.1 682.9h3.2v1.6h-3.2zM588.7 682.9h3.2v1.6h-3.2zM607.9 672.3h3.2v1.6h-3.2zM612.7 672.3h3.2v1.6h-3.2zM614.3 677.6h3.2v1.6h-3.2zM617.5 667.0h3.2v1.6h-3.2zM622.3 672.3h3.2v1.6h-3.2zM625.5 677.6h3.2v1.6h-3.2zM631.9 672.3h3.2v1.6h-3.2zM633.5 677.6h3.2v1.6h-3.2zM639.9 677.6h3.2v1.6h-3.2zM644.7 672.3h3.2v1.6h-3.2zM646.3 661.7h3.2v1.6h-3.2zM647.9 661.7h3.2v1.6h-3.2zM655.9 656.4h3.2v1.6h-3.2zM657.5 651.1h3.2v1.6h-3.2zM660.7 661.7h3.2v1.6h-3.2zM663.9 651.1h3.2v1.6h-3.2zM665.5 651.1h3.2v1.6h-3.2zM671.9 635.2h3.2v1.6h-3.2zM711.9 592.8h3.2v1.6h-3.2zM716.7 587.5h3.2v1.6h-3.2zM719.9 598.1h3.2v1.6h-3.2zM724.7 592.8h3.2v1.6h-3.2zM734.3 598.1h3.2v1.6h-3.2zM735.9 592.8h3.2v1.6h-3.2zM740.7 592.8h3.2v1.6h-3.2zM748.7 603.4h3.2v1.6h-3.2zM755.1 592.8h3.2v1.6h-3.2zM756.7 598.1h3.2v1.6h-3.2zM763.1 603.4h3.2v1.6h-3.2zM767.9 619.3h3.2v1.6h-3.2zM769.5 614.0h3.2v1.6h-3.2zM772.7 624.6h3.2v1.6h-3.2zM779.1 619.3h3.2v1.6h-3.2zM782.3 624.6h3.2v1.6h-3.2zM785.5 624.6h3.2v1.6h-3.2zM795.1 598.1h3.2v1.6h-3.2zM801.5 603.4h3.2v1.6h-3.2zM803.1 603.4h3.2v1.6h-3.2zM804.7 608.7h3.2v1.6h-3.2zM806.3 608.7h3.2v1.6h-3.2zM807.9 614.0h3.2v1.6h-3.2zM812.7 608.7h3.2v1.6h-3.2zM814.3 614.0h3.2v1.6h-3.2zM817.5 603.4h3.2v1.6h-3.2zM820.7 608.7h3.2v1.6h-3.2zM828.7 619.3h3.2v1.6h-3.2zM833.5 619.3h3.2v1.6h-3.2zM844.7 629.9h3.2v1.6h-3.2zM851.1 608.7h3.2v1.6h-3.2zM854.3 603.4h3.2v1.6h-3.2zM859.1 603.4h3.2v1.6h-3.2zM868.7 603.4h3.2v1.6h-3.2zM875.1 603.4h3.2v1.6h-3.2zM884.7 603.4h3.2v1.6h-3.2zM889.5 608.7h3.2v1.6h-3.2zM891.1 598.1h3.2v1.6h-3.2zM895.9 603.4h3.2v1.6h-3.2zM907.1 608.7h3.2v1.6h-3.2zM908.7 619.3h3.2v1.6h-3.2zM910.3 614.0h3.2v1.6h-3.2zM911.9 619.3h3.2v1.6h-3.2zM915.1 614.0h3.2v1.6h-3.2zM921.5 614.0h3.2v1.6h-3.2zM935.9 629.9h3.2v1.6h-3.2zM937.5 629.9h3.2v1.6h-3.2zM940.7 624.6h3.2v1.6h-3.2zM943.9 624.6h3.2v1.6h-3.2zM945.5 619.3h3.2v1.6h-3.2zM947.1 614.0h3.2v1.6h-3.2zM950.3 608.7h3.2v1.6h-3.2zM951.9 614.0h3.2v1.6h-3.2zM953.5 598.1h3.2v1.6h-3.2zM956.7 598.1h3.2v1.6h-3.2zM969.5 614.0h3.2v1.6h-3.2zM977.5 614.0h3.2v1.6h-3.2zM996.7 587.5h3.2v1.6h-3.2zM1004.7 582.2h3.2v1.6h-3.2zM1006.3 582.2h3.2v1.6h-3.2zM1009.5 582.2h3.2v1.6h-3.2zM1033.5 555.7h3.2v1.6h-3.2zM1035.1 534.5h3.2v1.6h-3.2zM1043.1 566.3h3.2v1.6h-3.2zM1046.3 571.6h3.2v1.6h-3.2zM1049.5 576.9h3.2v1.6h-3.2zM1051.1 582.2h3.2v1.6h-3.2zM1052.7 587.5h3.2v1.6h-3.2zM1059.1 587.5h3.2v1.6h-3.2zM1067.1 598.1h3.2v1.6h-3.2zM1071.9 582.2h3.2v1.6h-3.2zM1076.7 576.9h3.2v1.6h-3.2zM1079.9 587.5h3.2v1.6h-3.2zM1081.5 592.8h3.2v1.6h-3.2zM1092.7 592.8h3.2v1.6h-3.2zM1100.7 603.4h3.2v1.6h-3.2zM1102.3 603.4h3.2v1.6h-3.2zM1103.9 603.4h3.2v1.6h-3.2zM1108.7 598.1h3.2v1.6h-3.2zM1116.7 614.0h3.2v1.6h-3.2zM1121.5 592.8h3.2v1.6h-3.2zM1129.5 608.7h3.2v1.6h-3.2zM1140.7 598.1h3.2v1.6h-3.2zM1143.9 587.5h3.2v1.6h-3.2zM1147.1 592.8h3.2v1.6h-3.2zM1153.5 598.1h3.2v1.6h-3.2zM1161.5 587.5h3.2v1.6h-3.2zM1163.1 592.8h3.2v1.6h-3.2zM1167.9 598.1h3.2v1.6h-3.2zM1171.1 592.8h3.2v1.6h-3.2zM1172.7 592.8h3.2v1.6h-3.2zM1175.9 603.4h3.2v1.6h-3.2zM1177.5 592.8h3.2v1.6h-3.2zM1185.5 603.4h3.2v1.6h-3.2zM1188.7 614.0h3.2v1.6h-3.2zM1196.7 608.7h3.2v1.6h-3.2zM1198.3 614.0h3.2v1.6h-3.2zM1207.9 603.4h3.2v1.6h-3.2zM1211.1 603.4h3.2v1.6h-3.2zM1212.7 587.5h3.2v1.6h-3.2zM1214.3 592.8h3.2v1.6h-3.2zM1215.9 571.6h3.2v1.6h-3.2zM1219.1 576.9h3.2v1.6h-3.2zM1230.3 576.9h3.2v1.6h-3.2zM1236.7 571.6h3.2v1.6h-3.2zM1249.5 555.7h3.2v1.6h-3.2zM1263.9 561.0h3.2v1.6h-3.2zM1271.9 545.1h3.2v1.6h-3.2zM1275.1 545.1h3.2v1.6h-3.2zM1278.3 534.5h3.2v1.6h-3.2zM1279.9 523.9h3.2v1.6h-3.2zM1281.5 518.6h3.2v1.6h-3.2zM1283.1 518.6h3.2v1.6h-3.2zM1292.7 529.2h3.2v1.6h-3.2zM1299.1 523.9h3.2v1.6h-3.2zM1303.9 513.3h3.2v1.6h-3.2zM1307.1 513.3h3.2v1.6h-3.2zM1308.7 508.0h3.2v1.6h-3.2zM1311.9 513.3h3.2v1.6h-3.2zM1315.1 508.0h3.2v1.6h-3.2zM1316.7 513.3h3.2v1.6h-3.2zM1324.7 508.0h3.2v1.6h-3.2zM1329.5 529.2h3.2v1.6h-3.2zM1331.1 529.2h3.2v1.6h-3.2zM1332.7 534.5h3.2v1.6h-3.2zM1335.9 518.6h3.2v1.6h-3.2zM1345.5 508.0h3.2v1.6h-3.2zM1348.7 492.1h3.2v1.6h-3.2zM1350.3 497.4h3.2v1.6h-3.2zM1353.5 502.7h3.2v1.6h-3.2zM1363.1 518.6h3.2v1.6h-3.2zM1371.1 513.3h3.2v1.6h-3.2zM1374.3 497.4h3.2v1.6h-3.2zM1382.3 486.8h3.2v1.6h-3.2zM1385.5 502.7h3.2v1.6h-3.2zM1387.1 492.1h3.2v1.6h-3.2zM1390.3 497.4h3.2v1.6h-3.2zM1395.1 497.4h3.2v1.6h-3.2zM1396.7 492.1h3.2v1.6h-3.2zM1403.1 481.5h3.2v1.6h-3.2zM1414.3 486.8h3.2v1.6h-3.2zM1420.7 497.4h3.2v1.6h-3.2zM1422.3 502.7h3.2v1.6h-3.2zM1427.1 502.7h3.2v1.6h-3.2zM1439.9 497.4h3.2v1.6h-3.2zM1441.5 508.0h3.2v1.6h-3.2zM1444.7 492.1h3.2v1.6h-3.2zM1447.9 492.1h3.2v1.6h-3.2zM1449.5 492.1h3.2v1.6h-3.2zM1451.1 497.4h3.2v1.6h-3.2zM1452.7 497.4h3.2v1.6h-3.2zM1455.9 492.1h3.2v1.6h-3.2zM1462.3 492.1h3.2v1.6h-3.2zM1463.9 502.7h3.2v1.6h-3.2zM1468.7 492.1h3.2v1.6h-3.2zM1475.1 486.8h3.2v1.6h-3.2zM1479.9 481.5h3.2v1.6h-3.2zM1491.1 460.3h3.2v1.6h-3.2zM1494.3 465.6h3.2v1.6h-3.2zM1503.9 481.5h3.2v1.6h-3.2zM1505.5 481.5h3.2v1.6h-3.2zM1508.7 470.9h3.2v1.6h-3.2zM1510.3 460.3h3.2v1.6h-3.2zM1511.9 455.0h3.2v1.6h-3.2zM1516.7 444.4h3.2v1.6h-3.2zM1521.5 455.0h3.2v1.6h-3.2zM1523.1 455.0h3.2v1.6h-3.2zM1524.7 460.3h3.2v1.6h-3.2zM1526.3 465.6h3.2v1.6h-3.2zM1529.5 455.0h3.2v1.6h-3.2zM1532.7 460.3h3.2v1.6h-3.2zM1539.1 460.3h3.2v1.6h-3.2zM1540.7 460.3h3.2v1.6h-3.2zM1543.9 470.9h3.2v1.6h-3.2zM1550.3 492.1h3.2v1.6h-3.2zM1551.9 486.8h3.2v1.6h-3.2zM1555.1 492.1h3.2v1.6h-3.2zM1561.5 502.7h3.2v1.6h-3.2zM1566.3 497.4h3.2v1.6h-3.2zM1571.1 518.6h3.2v1.6h-3.2zM1572.7 502.7h3.2v1.6h-3.2zM1580.7 518.6h3.2v1.6h-3.2zM1593.5 502.7h3.2v1.6h-3.2zM1595.1 502.7h3.2v1.6h-3.2zM1598.3 502.7h3.2v1.6h-3.2zM1601.5 508.0h3.2v1.6h-3.2zM1604.7 502.7h3.2v1.6h-3.2zM1609.5 492.1h3.2v1.6h-3.2zM1612.7 492.1h3.2v1.6h-3.2z" fill="#f0ec80"/><path d="M59.9 583.0h1.6v5.3h-1.6zM61.5 583.0h1.6v5.3h-1.6zM75.9 567.1h1.6v15.9h-1.6zM80.7 588.3h1.6v10.6h-1.6zM81.1 577.7h0.8v10.6h-0.8zM88.7 604.2h1.6v10.6h-1.6zM90.3 604.2h1.6v10.6h-1.6zM106.3 646.6h1.6v10.6h-1.6zM106.7 636.0h0.8v10.6h-0.8zM107.9 657.2h1.6v10.6h-1.6zM108.3 651.9h0.8v5.3h-0.8zM123.9 667.8h1.6v5.3h-1.6zM124.3 662.5h0.8v5.3h-0.8zM125.5 667.8h1.6v10.6h-1.6zM127.1 662.5h1.6v21.2h-1.6zM127.5 657.2h0.8v5.3h-0.8zM128.7 673.1h1.6v10.6h-1.6zM129.1 667.8h0.8v5.3h-0.8zM130.3 678.4h1.6v21.2h-1.6zM130.7 699.6h0.8v5.3h-0.8zM133.5 694.3h1.6v5.3h-1.6zM133.9 689.0h0.8v5.3h-0.8zM133.9 699.6h0.8v10.6h-0.8zM141.5 673.1h1.6v10.6h-1.6zM143.1 667.8h1.6v5.3h-1.6zM143.5 657.2h0.8v10.6h-0.8zM146.3 673.1h1.6v5.3h-1.6zM147.9 667.8h1.6v5.3h-1.6zM159.1 683.7h1.6v5.3h-1.6zM159.5 689.0h0.8v10.6h-0.8zM176.7 689.0h1.6v5.3h-1.6zM177.1 683.7h0.8v5.3h-0.8zM192.7 678.4h1.6v10.6h-1.6zM194.3 689.0h1.6v5.3h-1.6zM195.9 689.0h1.6v5.3h-1.6zM199.1 694.3h1.6v5.3h-1.6zM199.5 699.6h0.8v5.3h-0.8zM211.9 683.7h1.6v10.6h-1.6zM212.3 694.3h0.8v10.6h-0.8zM215.1 683.7h1.6v5.3h-1.6zM237.5 667.8h1.6v5.3h-1.6zM245.5 662.5h1.6v5.3h-1.6zM277.5 657.2h1.6v5.3h-1.6zM279.1 657.2h1.6v5.3h-1.6zM279.5 651.9h0.8v5.3h-0.8zM279.5 662.5h0.8v10.6h-0.8zM283.9 673.1h1.6v10.6h-1.6zM284.3 662.5h0.8v10.6h-0.8zM287.1 673.1h1.6v5.3h-1.6zM287.5 662.5h0.8v10.6h-0.8zM298.3 683.7h1.6v10.6h-1.6zM298.7 678.4h0.8v5.3h-0.8zM299.9 694.3h1.6v5.3h-1.6zM300.3 683.7h0.8v10.6h-0.8zM301.5 694.3h1.6v5.3h-1.6zM306.3 694.3h1.6v5.3h-1.6zM306.7 683.7h0.8v10.6h-0.8zM307.9 689.0h1.6v5.3h-1.6zM308.3 694.3h0.8v10.6h-0.8zM314.3 699.6h1.6v10.6h-1.6zM314.7 710.2h0.8v10.6h-0.8zM315.9 699.6h1.6v10.6h-1.6zM330.3 673.1h1.6v5.3h-1.6zM331.9 673.1h1.6v10.6h-1.6zM332.3 662.5h0.8v10.6h-0.8zM332.3 683.7h0.8v10.6h-0.8zM341.5 694.3h1.6v5.3h-1.6zM343.1 694.3h1.6v5.3h-1.6zM344.7 694.3h1.6v5.3h-1.6zM345.1 699.6h0.8v10.6h-0.8zM355.9 683.7h1.6v15.9h-1.6zM356.3 673.1h0.8v10.6h-0.8zM356.3 699.6h0.8v5.3h-0.8zM357.5 689.0h1.6v5.3h-1.6zM368.7 699.6h1.6v5.3h-1.6zM369.1 694.3h0.8v5.3h-0.8zM397.5 657.2h1.6v5.3h-1.6zM419.9 646.6h1.6v10.6h-1.6zM420.3 641.3h0.8v5.3h-0.8zM420.3 657.2h0.8v5.3h-0.8zM427.9 657.2h1.6v5.3h-1.6zM428.3 662.5h0.8v10.6h-0.8zM431.1 657.2h1.6v5.3h-1.6zM431.5 662.5h0.8v10.6h-0.8zM435.9 657.2h1.6v5.3h-1.6zM436.3 651.9h0.8v5.3h-0.8zM443.9 646.6h1.6v5.3h-1.6zM453.5 657.2h1.6v5.3h-1.6zM472.7 641.3h1.6v5.3h-1.6zM473.1 636.0h0.8v5.3h-0.8zM475.9 636.0h1.6v10.6h-1.6zM476.3 625.4h0.8v10.6h-0.8zM476.3 646.6h0.8v5.3h-0.8zM479.1 641.3h1.6v5.3h-1.6zM480.7 646.6h1.6v5.3h-1.6zM482.3 636.0h1.6v10.6h-1.6zM482.7 630.7h0.8v5.3h-0.8zM487.1 641.3h1.6v10.6h-1.6zM487.5 630.7h0.8v10.6h-0.8zM487.5 651.9h0.8v10.6h-0.8zM488.7 646.6h1.6v5.3h-1.6zM489.1 641.3h0.8v5.3h-0.8zM495.1 646.6h1.6v5.3h-1.6zM496.7 646.6h1.6v5.3h-1.6zM497.1 636.0h0.8v10.6h-0.8zM514.3 630.7h1.6v15.9h-1.6zM514.7 620.1h0.8v10.6h-0.8zM517.5 641.3h1.6v5.3h-1.6zM517.9 630.7h0.8v10.6h-0.8zM519.1 630.7h1.6v5.3h-1.6zM525.5 636.0h1.6v5.3h-1.6zM525.9 630.7h0.8v5.3h-0.8zM531.9 646.6h1.6v5.3h-1.6zM532.3 636.0h0.8v10.6h-0.8zM533.5 641.3h1.6v5.3h-1.6zM541.5 673.1h1.6v5.3h-1.6zM541.9 662.5h0.8v10.6h-0.8zM543.1 678.4h1.6v5.3h-1.6zM546.3 678.4h1.6v10.6h-1.6zM546.7 667.8h0.8v10.6h-0.8zM551.1 683.7h1.6v10.6h-1.6zM551.5 678.4h0.8v5.3h-0.8zM552.7 689.0h1.6v15.9h-1.6zM568.7 689.0h1.6v10.6h-1.6zM569.1 683.7h0.8v5.3h-0.8zM595.9 673.1h1.6v5.3h-1.6zM597.5 667.8h1.6v10.6h-1.6zM599.1 667.8h1.6v5.3h-1.6zM603.9 673.1h1.6v5.3h-1.6zM605.5 673.1h1.6v10.6h-1.6zM621.5 667.8h1.6v10.6h-1.6zM637.5 662.5h1.6v5.3h-1.6zM637.9 667.8h0.8v5.3h-0.8zM651.9 651.9h1.6v5.3h-1.6zM652.3 657.2h0.8v10.6h-0.8zM655.1 657.2h1.6v5.3h-1.6zM659.9 651.9h1.6v5.3h-1.6zM660.3 641.3h0.8v10.6h-0.8zM679.1 636.0h1.6v5.3h-1.6zM679.5 630.7h0.8v5.3h-0.8zM680.7 636.0h1.6v10.6h-1.6zM685.5 641.3h1.6v10.6h-1.6zM688.7 646.6h1.6v5.3h-1.6zM693.5 657.2h1.6v5.3h-1.6zM695.1 657.2h1.6v10.6h-1.6zM695.5 646.6h0.8v10.6h-0.8zM706.3 598.9h1.6v21.2h-1.6zM722.3 588.3h1.6v5.3h-1.6zM722.7 577.7h0.8v10.6h-0.8zM744.7 593.6h1.6v5.3h-1.6zM746.3 593.6h1.6v5.3h-1.6zM759.1 588.3h1.6v5.3h-1.6zM760.7 593.6h1.6v5.3h-1.6zM789.5 620.1h1.6v10.6h-1.6zM789.9 630.7h0.8v10.6h-0.8zM824.7 604.2h1.6v5.3h-1.6zM826.3 609.5h1.6v10.6h-1.6zM835.9 625.4h1.6v5.3h-1.6zM864.7 593.6h1.6v5.3h-1.6zM866.3 593.6h1.6v5.3h-1.6zM866.7 598.9h0.8v5.3h-0.8zM872.7 604.2h1.6v5.3h-1.6zM880.7 609.5h1.6v5.3h-1.6zM881.1 614.8h0.8v5.3h-0.8zM883.9 604.2h1.6v10.6h-1.6zM901.5 609.5h1.6v10.6h-1.6zM903.1 609.5h1.6v5.3h-1.6zM903.5 598.9h0.8v10.6h-0.8zM903.5 614.8h0.8v10.6h-0.8zM906.3 609.5h1.6v5.3h-1.6zM906.7 598.9h0.8v10.6h-0.8zM917.5 614.8h1.6v10.6h-1.6zM930.3 609.5h1.6v15.9h-1.6zM931.9 614.8h1.6v10.6h-1.6zM933.5 620.1h1.6v10.6h-1.6zM933.9 609.5h0.8v10.6h-0.8zM935.1 625.4h1.6v10.6h-1.6zM960.7 593.6h1.6v5.3h-1.6zM961.1 583.0h0.8v10.6h-0.8zM965.5 604.2h1.6v10.6h-1.6zM965.9 598.9h0.8v5.3h-0.8zM965.9 614.8h0.8v5.3h-0.8zM973.5 614.8h1.6v5.3h-1.6zM989.5 572.4h1.6v15.9h-1.6zM1002.3 588.3h1.6v5.3h-1.6zM1002.7 583.0h0.8v5.3h-0.8zM1002.7 593.6h0.8v5.3h-0.8zM1003.9 588.3h1.6v10.6h-1.6zM1004.3 577.7h0.8v10.6h-0.8zM1024.7 567.1h1.6v10.6h-1.6zM1025.1 561.8h0.8v5.3h-0.8zM1026.3 577.7h1.6v5.3h-1.6zM1026.7 567.1h0.8v10.6h-0.8zM1040.7 556.5h1.6v15.9h-1.6zM1041.1 545.9h0.8v10.6h-0.8zM1041.1 572.4h0.8v10.6h-0.8zM1055.1 598.9h1.6v5.3h-1.6zM1058.3 583.0h1.6v5.3h-1.6zM1063.1 593.6h1.6v5.3h-1.6zM1063.5 598.9h0.8v10.6h-0.8zM1099.9 598.9h1.6v5.3h-1.6zM1112.7 604.2h1.6v5.3h-1.6zM1123.9 593.6h1.6v5.3h-1.6zM1124.3 583.0h0.8v10.6h-0.8zM1124.3 598.9h0.8v10.6h-0.8zM1125.5 593.6h1.6v5.3h-1.6zM1127.1 583.0h1.6v21.2h-1.6zM1128.7 604.2h1.6v5.3h-1.6zM1136.7 593.6h1.6v5.3h-1.6zM1143.1 598.9h1.6v5.3h-1.6zM1149.5 588.3h1.6v5.3h-1.6zM1175.1 593.6h1.6v5.3h-1.6zM1179.9 598.9h1.6v5.3h-1.6zM1183.1 604.2h1.6v5.3h-1.6zM1184.7 598.9h1.6v10.6h-1.6zM1191.1 598.9h1.6v15.9h-1.6zM1194.3 604.2h1.6v10.6h-1.6zM1194.7 593.6h0.8v10.6h-0.8zM1195.9 604.2h1.6v10.6h-1.6zM1218.3 583.0h1.6v5.3h-1.6zM1218.7 588.3h0.8v10.6h-0.8zM1229.5 583.0h1.6v5.3h-1.6zM1229.9 588.3h0.8v10.6h-0.8zM1242.3 561.8h1.6v5.3h-1.6zM1251.9 556.5h1.6v5.3h-1.6zM1252.3 561.8h0.8v5.3h-0.8zM1269.5 545.9h1.6v5.3h-1.6zM1285.5 519.4h1.6v10.6h-1.6zM1287.1 519.4h1.6v10.6h-1.6zM1287.5 514.1h0.8v5.3h-0.8zM1288.7 524.7h1.6v5.3h-1.6zM1290.3 519.4h1.6v5.3h-1.6zM1290.7 508.8h0.8v10.6h-0.8zM1291.9 519.4h1.6v5.3h-1.6zM1292.3 524.7h0.8v10.6h-0.8zM1295.1 519.4h1.6v5.3h-1.6zM1311.1 508.8h1.6v5.3h-1.6zM1323.9 503.5h1.6v10.6h-1.6zM1328.7 514.1h1.6v5.3h-1.6zM1341.5 514.1h1.6v5.3h-1.6zM1357.5 498.2h1.6v5.3h-1.6zM1359.1 508.8h1.6v5.3h-1.6zM1362.3 514.1h1.6v5.3h-1.6zM1362.7 508.8h0.8v5.3h-0.8zM1365.5 519.4h1.6v10.6h-1.6zM1365.9 514.1h0.8v5.3h-0.8zM1376.7 487.6h1.6v10.6h-1.6zM1377.1 498.2h0.8v10.6h-0.8zM1384.7 498.2h1.6v5.3h-1.6zM1389.5 498.2h1.6v5.3h-1.6zM1407.1 471.7h1.6v10.6h-1.6zM1407.5 482.3h0.8v10.6h-0.8zM1413.5 482.3h1.6v5.3h-1.6zM1413.9 471.7h0.8v10.6h-0.8zM1416.7 487.6h1.6v5.3h-1.6zM1417.1 492.9h0.8v5.3h-0.8zM1418.3 498.2h1.6v5.3h-1.6zM1418.7 503.5h0.8v10.6h-0.8zM1431.1 503.5h1.6v5.3h-1.6zM1435.9 498.2h1.6v5.3h-1.6zM1474.3 477.0h1.6v15.9h-1.6zM1477.5 487.6h1.6v5.3h-1.6zM1496.7 471.7h1.6v5.3h-1.6zM1497.1 466.4h0.8v5.3h-0.8zM1501.5 471.7h1.6v15.9h-1.6zM1501.9 461.1h0.8v10.6h-0.8zM1501.9 487.6h0.8v5.3h-0.8zM1520.7 434.6h1.6v15.9h-1.6zM1521.1 450.5h0.8v10.6h-0.8zM1531.9 450.5h1.6v5.3h-1.6zM1532.3 439.9h0.8v10.6h-0.8zM1535.1 450.5h1.6v10.6h-1.6zM1535.5 445.2h0.8v5.3h-0.8zM1535.5 461.1h0.8v10.6h-0.8zM1543.1 455.8h1.6v10.6h-1.6zM1549.5 487.6h1.6v5.3h-1.6zM1549.9 492.9h0.8v10.6h-0.8zM1554.3 482.3h1.6v5.3h-1.6zM1557.5 492.9h1.6v10.6h-1.6zM1560.7 498.2h1.6v5.3h-1.6zM1561.1 492.9h0.8v5.3h-0.8zM1575.1 508.8h1.6v10.6h-1.6zM1575.5 503.5h0.8v5.3h-0.8zM1583.1 508.8h1.6v5.3h-1.6zM1583.5 503.5h0.8v5.3h-0.8zM1583.5 514.1h0.8v10.6h-0.8zM1600.7 498.2h1.6v10.6h-1.6zM1607.1 492.9h1.6v5.3h-1.6zM1607.5 482.3h0.8v10.6h-0.8z" fill="#1478e6"/><path d="M56.7 593.6h1.6v26.5h-1.6zM57.1 588.3h0.8v5.3h-0.8zM58.3 583.0h1.6v15.9h-1.6zM63.1 588.3h1.6v5.3h-1.6zM63.5 593.6h0.8v5.3h-0.8zM67.9 572.4h1.6v10.6h-1.6zM68.3 561.8h0.8v10.6h-0.8zM68.3 583.0h0.8v5.3h-0.8zM71.1 567.1h1.6v10.6h-1.6zM72.7 561.8h1.6v10.6h-1.6zM82.3 598.9h1.6v5.3h-1.6zM93.5 604.2h1.6v10.6h-1.6zM93.9 593.6h0.8v10.6h-0.8zM98.3 598.9h1.6v10.6h-1.6zM98.7 609.5h0.8v5.3h-0.8zM109.5 667.8h1.6v10.6h-1.6zM112.7 667.8h1.6v5.3h-1.6zM115.9 667.8h1.6v10.6h-1.6zM116.3 662.5h0.8v5.3h-0.8zM117.5 662.5h1.6v5.3h-1.6zM119.1 662.5h1.6v5.3h-1.6zM138.3 673.1h1.6v5.3h-1.6zM138.7 667.8h0.8v5.3h-0.8zM152.7 683.7h1.6v5.3h-1.6zM153.1 673.1h0.8v10.6h-0.8zM155.9 678.4h1.6v5.3h-1.6zM156.3 667.8h0.8v10.6h-0.8zM165.5 678.4h1.6v15.9h-1.6zM165.9 667.8h0.8v10.6h-0.8zM171.9 689.0h1.6v5.3h-1.6zM172.3 678.4h0.8v10.6h-0.8zM178.3 689.0h1.6v10.6h-1.6zM187.9 689.0h1.6v5.3h-1.6zM219.9 683.7h1.6v5.3h-1.6zM221.5 678.4h1.6v5.3h-1.6zM221.9 667.8h0.8v10.6h-0.8zM223.1 678.4h1.6v5.3h-1.6zM224.7 678.4h1.6v5.3h-1.6zM225.1 673.1h0.8v5.3h-0.8zM226.3 667.8h1.6v10.6h-1.6zM226.7 678.4h0.8v10.6h-0.8zM227.9 673.1h1.6v10.6h-1.6zM229.5 673.1h1.6v5.3h-1.6zM235.9 667.8h1.6v5.3h-1.6zM236.3 673.1h0.8v5.3h-0.8zM247.1 657.2h1.6v5.3h-1.6zM259.9 667.8h1.6v5.3h-1.6zM271.1 662.5h1.6v5.3h-1.6zM272.7 646.6h1.6v5.3h-1.6zM273.1 641.3h0.8v5.3h-0.8zM274.3 657.2h1.6v5.3h-1.6zM274.7 651.9h0.8v5.3h-0.8zM282.3 667.8h1.6v5.3h-1.6zM282.7 662.5h0.8v5.3h-0.8zM293.5 673.1h1.6v10.6h-1.6zM293.9 683.7h0.8v10.6h-0.8zM317.5 699.6h1.6v5.3h-1.6zM317.9 694.3h0.8v5.3h-0.8zM320.7 694.3h1.6v15.9h-1.6zM323.9 699.6h1.6v5.3h-1.6zM324.3 689.0h0.8v10.6h-0.8zM327.1 689.0h1.6v5.3h-1.6zM338.3 683.7h1.6v5.3h-1.6zM338.7 673.1h0.8v10.6h-0.8zM346.3 694.3h1.6v5.3h-1.6zM347.9 694.3h1.6v5.3h-1.6zM348.3 699.6h0.8v10.6h-0.8zM352.7 689.0h1.6v10.6h-1.6zM375.1 699.6h1.6v5.3h-1.6zM375.5 704.9h0.8v5.3h-0.8zM376.7 689.0h1.6v15.9h-1.6zM381.5 678.4h1.6v5.3h-1.6zM387.9 662.5h1.6v15.9h-1.6zM388.3 678.4h0.8v5.3h-0.8zM391.1 657.2h1.6v5.3h-1.6zM395.9 657.2h1.6v10.6h-1.6zM410.3 651.9h1.6v10.6h-1.6zM410.7 641.3h0.8v10.6h-0.8zM411.9 651.9h1.6v5.3h-1.6zM412.3 646.6h0.8v5.3h-0.8zM418.3 641.3h1.6v10.6h-1.6zM483.9 641.3h1.6v5.3h-1.6zM484.3 630.7h0.8v10.6h-0.8zM498.3 636.0h1.6v10.6h-1.6zM498.7 625.4h0.8v10.6h-0.8zM507.9 636.0h1.6v5.3h-1.6zM508.3 630.7h0.8v5.3h-0.8zM508.3 641.3h0.8v5.3h-0.8zM515.9 641.3h1.6v5.3h-1.6zM516.3 646.6h0.8v10.6h-0.8zM520.7 630.7h1.6v5.3h-1.6zM535.1 646.6h1.6v10.6h-1.6zM538.3 657.2h1.6v10.6h-1.6zM538.7 646.6h0.8v10.6h-0.8zM538.7 667.8h0.8v5.3h-0.8zM549.5 673.1h1.6v15.9h-1.6zM557.5 694.3h1.6v10.6h-1.6zM557.9 704.9h0.8v5.3h-0.8zM560.7 689.0h1.6v10.6h-1.6zM573.5 694.3h1.6v5.3h-1.6zM573.9 689.0h0.8v5.3h-0.8zM573.9 699.6h0.8v10.6h-0.8zM576.7 683.7h1.6v5.3h-1.6zM577.1 678.4h0.8v5.3h-0.8zM578.3 683.7h1.6v5.3h-1.6zM578.7 689.0h0.8v10.6h-0.8zM586.3 678.4h1.6v10.6h-1.6zM586.7 673.1h0.8v5.3h-0.8zM591.1 683.7h1.6v5.3h-1.6zM592.7 678.4h1.6v5.3h-1.6zM594.3 673.1h1.6v5.3h-1.6zM600.7 673.1h1.6v5.3h-1.6zM601.1 667.8h0.8v5.3h-0.8zM607.1 673.1h1.6v15.9h-1.6zM610.3 678.4h1.6v5.3h-1.6zM610.7 673.1h0.8v5.3h-0.8zM610.7 683.7h0.8v10.6h-0.8zM616.7 673.1h1.6v5.3h-1.6zM617.1 678.4h0.8v10.6h-0.8zM619.9 678.4h1.6v5.3h-1.6zM620.3 673.1h0.8v5.3h-0.8zM643.9 662.5h1.6v10.6h-1.6zM644.3 657.2h0.8v5.3h-0.8zM644.3 673.1h0.8v5.3h-0.8zM650.3 657.2h1.6v5.3h-1.6zM650.7 651.9h0.8v5.3h-0.8zM667.9 641.3h1.6v10.6h-1.6zM668.3 651.9h0.8v10.6h-0.8zM669.5 636.0h1.6v5.3h-1.6zM675.9 636.0h1.6v5.3h-1.6zM677.5 636.0h1.6v10.6h-1.6zM691.9 646.6h1.6v10.6h-1.6zM692.3 636.0h0.8v10.6h-0.8zM698.3 651.9h1.6v5.3h-1.6zM699.9 641.3h1.6v10.6h-1.6zM700.3 636.0h0.8v5.3h-0.8zM700.3 651.9h0.8v5.3h-0.8zM707.9 593.6h1.6v5.3h-1.6zM708.3 598.9h0.8v10.6h-0.8zM715.9 593.6h1.6v10.6h-1.6zM716.3 588.3h0.8v5.3h-0.8zM719.1 588.3h1.6v5.3h-1.6zM719.5 577.7h0.8v10.6h-0.8zM743.1 593.6h1.6v5.3h-1.6zM743.5 583.0h0.8v10.6h-0.8zM754.3 598.9h1.6v10.6h-1.6zM767.1 609.5h1.6v10.6h-1.6zM767.5 604.2h0.8v5.3h-0.8zM776.7 614.8h1.6v10.6h-1.6zM791.1 614.8h1.6v10.6h-1.6zM792.7 609.5h1.6v5.3h-1.6zM793.1 614.8h0.8v10.6h-0.8zM811.9 609.5h1.6v5.3h-1.6zM812.3 614.8h0.8v10.6h-0.8zM832.7 625.4h1.6v5.3h-1.6zM833.1 620.1h0.8v5.3h-0.8zM848.7 614.8h1.6v5.3h-1.6zM849.1 609.5h0.8v5.3h-0.8zM850.3 609.5h1.6v5.3h-1.6zM856.7 598.9h1.6v5.3h-1.6zM857.1 593.6h0.8v5.3h-0.8zM888.7 604.2h1.6v5.3h-1.6zM899.9 598.9h1.6v5.3h-1.6zM919.1 620.1h1.6v5.3h-1.6zM919.5 614.8h0.8v5.3h-0.8zM919.5 625.4h0.8v10.6h-0.8zM943.1 625.4h1.6v5.3h-1.6zM943.5 630.7h0.8v10.6h-0.8zM949.5 609.5h1.6v5.3h-1.6zM981.5 593.6h1.6v21.2h-1.6zM981.9 614.8h0.8v5.3h-0.8zM995.9 588.3h1.6v5.3h-1.6zM996.3 577.7h0.8v10.6h-0.8zM999.1 577.7h1.6v15.9h-1.6zM1015.1 572.4h1.6v10.6h-1.6zM1016.7 577.7h1.6v5.3h-1.6zM1018.3 567.1h1.6v10.6h-1.6zM1029.5 567.1h1.6v5.3h-1.6zM1031.1 572.4h1.6v5.3h-1.6zM1031.5 561.8h0.8v10.6h-0.8zM1031.5 577.7h0.8v5.3h-0.8zM1045.5 567.1h1.6v10.6h-1.6zM1045.9 556.5h0.8v10.6h-0.8zM1056.7 583.0h1.6v5.3h-1.6zM1057.1 572.4h0.8v10.6h-0.8zM1057.1 588.3h0.8v10.6h-0.8zM1064.7 583.0h1.6v15.9h-1.6zM1069.5 583.0h1.6v5.3h-1.6zM1069.9 572.4h0.8v10.6h-0.8zM1098.3 593.6h1.6v5.3h-1.6zM1098.7 588.3h0.8v5.3h-0.8zM1115.9 598.9h1.6v5.3h-1.6zM1119.1 598.9h1.6v15.9h-1.6zM1119.5 588.3h0.8v10.6h-0.8zM1133.5 609.5h1.6v5.3h-1.6zM1133.9 598.9h0.8v10.6h-0.8zM1135.1 604.2h1.6v5.3h-1.6zM1135.5 598.9h0.8v5.3h-0.8zM1138.3 593.6h1.6v15.9h-1.6zM1138.7 588.3h0.8v5.3h-0.8zM1139.9 593.6h1.6v10.6h-1.6zM1140.3 604.2h0.8v5.3h-0.8zM1146.3 577.7h1.6v15.9h-1.6zM1157.5 598.9h1.6v5.3h-1.6zM1159.1 598.9h1.6v5.3h-1.6zM1223.1 577.7h1.6v5.3h-1.6zM1224.7 572.4h1.6v15.9h-1.6zM1225.1 561.8h0.8v10.6h-0.8zM1227.9 577.7h1.6v5.3h-1.6zM1228.3 583.0h0.8v5.3h-0.8zM1235.9 577.7h1.6v5.3h-1.6zM1240.7 567.1h1.6v5.3h-1.6zM1243.9 567.1h1.6v5.3h-1.6zM1253.5 556.5h1.6v15.9h-1.6zM1253.9 545.9h0.8v10.6h-0.8zM1256.7 577.7h1.6v10.6h-1.6zM1257.1 567.1h0.8v10.6h-0.8zM1259.9 577.7h1.6v5.3h-1.6zM1260.3 583.0h0.8v5.3h-0.8zM1261.5 572.4h1.6v5.3h-1.6zM1263.1 567.1h1.6v5.3h-1.6zM1271.1 545.9h1.6v5.3h-1.6zM1274.3 535.3h1.6v15.9h-1.6zM1274.7 530.0h0.8v5.3h-0.8zM1298.3 519.4h1.6v5.3h-1.6zM1298.7 524.7h0.8v5.3h-0.8zM1301.5 530.0h1.6v5.3h-1.6zM1303.1 519.4h1.6v5.3h-1.6zM1303.5 514.1h0.8v5.3h-0.8zM1306.3 514.1h1.6v5.3h-1.6zM1306.7 503.5h0.8v10.6h-0.8zM1314.3 508.8h1.6v5.3h-1.6zM1314.7 503.5h0.8v5.3h-0.8zM1320.7 503.5h1.6v5.3h-1.6zM1321.1 498.2h0.8v5.3h-0.8zM1335.1 524.7h1.6v5.3h-1.6zM1335.5 519.4h0.8v5.3h-0.8zM1338.3 508.8h1.6v15.9h-1.6zM1347.9 508.8h1.6v5.3h-1.6zM1348.3 514.1h0.8v5.3h-0.8zM1367.1 519.4h1.6v5.3h-1.6zM1368.7 519.4h1.6v5.3h-1.6zM1370.3 524.7h1.6v5.3h-1.6zM1379.9 487.6h1.6v5.3h-1.6zM1380.3 477.0h0.8v10.6h-0.8zM1380.3 492.9h0.8v10.6h-0.8zM1392.7 498.2h1.6v5.3h-1.6zM1394.3 503.5h1.6v5.3h-1.6zM1394.7 498.2h0.8v5.3h-0.8zM1400.7 482.3h1.6v5.3h-1.6zM1401.1 477.0h0.8v5.3h-0.8zM1405.5 487.6h1.6v5.3h-1.6zM1405.9 492.9h0.8v10.6h-0.8zM1424.7 492.9h1.6v10.6h-1.6zM1434.3 498.2h1.6v5.3h-1.6zM1434.7 492.9h0.8v5.3h-0.8zM1439.1 503.5h1.6v5.3h-1.6zM1439.5 498.2h0.8v5.3h-0.8zM1439.5 508.8h0.8v10.6h-0.8zM1455.1 498.2h1.6v5.3h-1.6zM1458.3 498.2h1.6v5.3h-1.6zM1459.9 492.9h1.6v5.3h-1.6zM1461.5 487.6h1.6v5.3h-1.6zM1467.9 487.6h1.6v10.6h-1.6zM1468.3 482.3h0.8v5.3h-0.8zM1468.3 498.2h0.8v5.3h-0.8zM1479.1 482.3h1.6v5.3h-1.6zM1479.5 471.7h0.8v10.6h-0.8zM1483.9 461.1h1.6v26.5h-1.6zM1484.3 450.5h0.8v10.6h-0.8zM1488.7 461.1h1.6v5.3h-1.6zM1490.3 455.8h1.6v5.3h-1.6zM1490.7 450.5h0.8v5.3h-0.8zM1507.9 477.0h1.6v5.3h-1.6zM1515.9 434.6h1.6v10.6h-1.6zM1519.1 439.9h1.6v5.3h-1.6zM1538.3 461.1h1.6v5.3h-1.6zM1563.9 503.5h1.6v10.6h-1.6zM1564.3 492.9h0.8v10.6h-0.8zM1564.3 514.1h0.8v5.3h-0.8zM1565.5 492.9h1.6v15.9h-1.6zM1576.7 508.8h1.6v10.6h-1.6zM1577.1 498.2h0.8v10.6h-0.8zM1579.9 514.1h1.6v5.3h-1.6zM1580.3 508.8h0.8v5.3h-0.8zM1584.7 519.4h1.6v5.3h-1.6zM1586.3 514.1h1.6v5.3h-1.6zM1586.7 503.5h0.8v10.6h-0.8zM1587.9 508.8h1.6v10.6h-1.6zM1588.3 519.4h0.8v10.6h-0.8zM1589.5 514.1h1.6v5.3h-1.6zM1589.9 503.5h0.8v10.6h-0.8zM1597.5 503.5h1.6v5.3h-1.6zM1597.9 492.9h0.8v10.6h-0.8zM1597.9 508.8h0.8v10.6h-0.8zM1603.9 503.5h1.6v5.3h-1.6zM1604.3 492.9h0.8v10.6h-0.8zM1615.1 482.3h1.6v5.3h-1.6z" fill="#ff0000"/><rect x="1624.1" y="460.3" width="2.4" height="9.3" fill="#1478e6"/><rect x="1625.0" y="469.3" width="3.2" height="1.6" fill="#f0ec80"/><rect x="1628.2" y="460.0" width="3.2" height="1.6" fill="#f0ec80"/><rect x="1631.5" y="460.0" width="3.2" height="1.6" fill="#f0ec80"/><rect x="1633.2" y="454.0" width="3.2" height="1.6" fill="#f0ec80"/><rect x="1635.7" y="454.0" width="4.8" height="1.6" fill="#f0ec80"/><rect x="1641.6" y="433.4" width="2.4" height="9.3" fill="#ff0000"/><rect x="1642.7" y="428.0" width="2.4" height="9.8" fill="#ff0000"/><rect x="1643.6" y="427.2" width="3.2" height="1.6" fill="#f0ec80"/><rect x="1647.6" y="416.5" width="2.4" height="17.0" fill="#ff0000"/><rect x="1649.3" y="428.0" width="2.4" height="9.8" fill="#1478e6"/><rect x="1654.2" y="433.4" width="2.4" height="4.4" fill="#1478e6"/><rect x="1656.1" y="454.0" width="3.2" height="1.6" fill="#f0ec80"/><rect x="1657.8" y="443.0" width="3.2" height="1.6" fill="#f0ec80"/><rect x="1659.4" y="438.1" width="3.2" height="1.6" fill="#f0ec80"/><rect x="1661.1" y="449.1" width="3.2" height="1.6" fill="#f0ec80"/><rect x="1666.2" y="438.4" width="2.4" height="10.4" fill="#ff0000"/><rect x="1672.0" y="438.1" width="3.2" height="1.6" fill="#f0ec80"/><rect x="1678.3" y="449.3" width="2.4" height="4.4" fill="#1478e6"/><rect x="1681.1" y="433.7" width="4.8" height="1.6" fill="#f0ec80"/><rect x="1683.8" y="423.1" width="2.4" height="3.8" fill="#ff0000"/><rect x="1686.5" y="423.1" width="2.4" height="3.8" fill="#1478e6"/><rect x="1692.0" y="454.0" width="4.8" height="1.6" fill="#f0ec80"/><rect x="1696.4" y="427.2" width="4.8" height="1.6" fill="#f0ec80"/><rect x="1700.8" y="427.2" width="4.8" height="1.6" fill="#f0ec80"/><rect x="1700.7" y="416.5" width="2.4" height="10.4" fill="#ff0000"/><rect x="1702.4" y="423.1" width="2.4" height="3.3" fill="#ff0000"/><rect x="1707.8" y="416.5" width="2.4" height="10.4" fill="#ff0000"/><rect x="1708.4" y="416.5" width="2.4" height="10.4" fill="#ff0000"/><rect x="1709.2" y="422.3" width="3.2" height="1.6" fill="#f0ec80"/><rect x="1714.4" y="422.5" width="2.4" height="10.9" fill="#1478e6"/><rect x="1717.7" y="443.0" width="4.8" height="1.6" fill="#f0ec80"/><rect x="1720.4" y="443.0" width="4.8" height="1.6" fill="#f0ec80"/><rect x="1722.1" y="438.1" width="4.8" height="1.6" fill="#f0ec80"/><rect x="1732.2" y="454.0" width="3.2" height="1.6" fill="#f0ec80"/><rect x="1737.1" y="454.0" width="3.2" height="1.6" fill="#f0ec80"/><rect x="1742.3" y="443.0" width="4.8" height="1.6" fill="#f0ec80"/><rect x="1759.5" y="443.0" width="3.2" height="1.6" fill="#f0ec80"/><rect x="1762.8" y="443.0" width="3.2" height="1.6" fill="#f0ec80"/><rect x="1765.6" y="449.1" width="3.2" height="1.6" fill="#f0ec80"/><rect x="1770.5" y="443.0" width="3.2" height="1.6" fill="#f0ec80"/><rect x="1774.0" y="449.3" width="2.4" height="4.4" fill="#1478e6"/><rect x="1775.4" y="454.0" width="3.2" height="1.6" fill="#f0ec80"/><rect x="1779.8" y="438.1" width="3.2" height="1.6" fill="#f0ec80"/><rect x="1793.5" y="454.0" width="3.2" height="1.6" fill="#f0ec80"/><rect x="1795.4" y="460.0" width="4.8" height="1.6" fill="#f0ec80"/><rect x="1809.3" y="469.3" width="3.2" height="1.6" fill="#f0ec80"/><rect x="1812.6" y="469.3" width="3.2" height="1.6" fill="#f0ec80"/><rect x="1824.3" y="464.6" width="2.4" height="10.4" fill="#1478e6"/><rect x="1803.2" y="475.5" width="3.2" height="1.6" fill="#f0ec80"/><rect x="1805.1" y="480.4" width="2.4" height="5.9" fill="#1478e6"/><rect x="1809.5" y="469.2" width="3.2" height="1.6" fill="#f0ec80"/><rect x="1812.5" y="469.2" width="3.2" height="1.6" fill="#f0ec80"/><rect x="1815.8" y="475.5" width="3.2" height="1.6" fill="#f0ec80"/><rect x="1824.0" y="464.8" width="2.4" height="15.6" fill="#1478e6"/><rect x="1826.5" y="486.2" width="3.2" height="1.6" fill="#f0ec80"/><rect x="1831.3" y="491.1" width="4.8" height="1.6" fill="#f0ec80"/><rect x="1843.2" y="491.5" width="2.4" height="3.7" fill="#1478e6"/><rect x="1843.9" y="495.9" width="4.8" height="1.6" fill="#f0ec80"/><rect x="1845.4" y="475.5" width="3.2" height="1.6" fill="#f0ec80"/><rect x="1847.7" y="477.0" width="1.6" height="9.3" fill="#f0ec80"/><rect x="1848.8" y="464.8" width="2.4" height="15.6" fill="#ff0000"/><rect x="1849.9" y="475.9" width="2.4" height="4.1" fill="#1478e6"/><rect x="1851.7" y="469.2" width="3.2" height="1.6" fill="#f0ec80"/><rect x="1854.4" y="469.6" width="2.4" height="5.9" fill="#1478e6"/><rect x="1855.8" y="480.4" width="2.4" height="5.9" fill="#1478e6"/><rect x="1860.3" y="465.2" width="1.6" height="4.8" fill="#f0ec80"/><rect x="1858.7" y="469.2" width="4.8" height="1.6" fill="#f0ec80"/><rect x="1862.1" y="460.0" width="2.4" height="4.1" fill="#ff0000"/><rect x="1863.9" y="464.8" width="4.8" height="1.6" fill="#f0ec80"/><rect x="1868.0" y="469.2" width="4.8" height="1.6" fill="#f0ec80"/><rect x="1868.7" y="469.2" width="4.8" height="1.6" fill="#f0ec80"/><rect x="1871.4" y="475.9" width="2.4" height="10.4" fill="#ff0000"/><rect x="1874.4" y="480.4" width="2.4" height="10.7" fill="#1478e6"/><rect x="1876.9" y="469.6" width="2.4" height="16.7" fill="#ff0000"/><rect x="1882.8" y="469.2" width="4.8" height="1.6" fill="#f0ec80"/><rect x="1884.3" y="469.2" width="4.8" height="1.6" fill="#f0ec80"/><rect x="1883.2" y="480.3" width="4.8" height="1.6" fill="#f0ec80"/><rect x="1889.1" y="459.9" width="4.8" height="1.6" fill="#f0ec80"/><rect x="11.9" y="676.7" width="3.2" height="1.6" fill="#f0ec80"/><rect x="16.1" y="665.5" width="4.8" height="1.6" fill="#f0ec80"/><rect x="20.2" y="661.7" width="1.6" height="5.0" fill="#ff0000"/><rect x="22.3" y="650.0" width="2.4" height="5.8" fill="#ff0000"/><rect x="22.9" y="651.6" width="1.4" height="2.6" fill="#f0ec80"/><rect x="25.2" y="635.0" width="1.6" height="10.8" fill="#ff0000"/><rect x="25.6" y="661.7" width="3.2" height="1.6" fill="#f0ec80"/><rect x="36.9" y="665.9" width="3.2" height="1.6" fill="#f0ec80"/><rect x="46.9" y="650.0" width="3.2" height="1.6" fill="#f0ec80"/><rect x="47.7" y="654.2" width="3.2" height="1.6" fill="#f0ec80"/><rect x="50.2" y="640.0" width="1.6" height="11.7" fill="#ff0000"/><rect x="54.7" y="628.9" width="3.2" height="1.6" fill="#f0ec80"/>
<text xml:space="preserve" transform="translate(12.80,421.1) scale(1.0000,1)" font-size="19.2" font-family="Liberation Sans" font-weight="normal" fill="#d4d4d4" >時刻</text><g font-size="20.4" font-family="Liberation Sans" font-weight="normal" fill="#d4d4d4"><text transform="translate(55.20,421.1) scale(0.72,1)" text-anchor="middle">:</text><text transform="translate(64.80,421.1) scale(0.72,1)" text-anchor="middle">0</text><text transform="translate(74.40,421.1) scale(0.72,1)" text-anchor="middle">6</text><text transform="translate(84.00,421.1) scale(0.72,1)" text-anchor="middle">:</text><text transform="translate(93.60,421.1) scale(0.72,1)" text-anchor="middle">0</text><text transform="translate(103.20,421.1) scale(0.72,1)" text-anchor="middle">0</text></g><text xml:space="preserve" transform="translate(118.40,421.1) scale(1.0000,1)" font-size="19.2" font-family="Liberation Sans" font-weight="normal" fill="#d4d4d4" >始値</text><g font-size="20.4" font-family="Liberation Sans" font-weight="normal" fill="#d4d4d4"><text transform="translate(160.80,421.1) scale(0.72,1)" text-anchor="middle">:</text><text transform="translate(170.40,421.1) scale(0.72,1)" text-anchor="middle">4</text><text transform="translate(180.00,421.1) scale(0.72,1)" text-anchor="middle">,</text><text transform="translate(189.60,421.1) scale(0.72,1)" text-anchor="middle">7</text><text transform="translate(199.20,421.1) scale(0.72,1)" text-anchor="middle">4</text><text transform="translate(208.80,421.1) scale(0.72,1)" text-anchor="middle">7</text></g><text xml:space="preserve" transform="translate(224.00,421.1) scale(1.0000,1)" font-size="19.2" font-family="Liberation Sans" font-weight="normal" fill="#d4d4d4" >高値</text><g font-size="20.4" font-family="Liberation Sans" font-weight="normal" fill="#d4d4d4"><text transform="translate(266.40,421.1) scale(0.72,1)" text-anchor="middle">:</text><text transform="translate(276.00,421.1) scale(0.72,1)" text-anchor="middle">4</text><text transform="translate(285.60,421.1) scale(0.72,1)" text-anchor="middle">,</text><text transform="translate(295.20,421.1) scale(0.72,1)" text-anchor="middle">7</text><text transform="translate(304.80,421.1) scale(0.72,1)" text-anchor="middle">4</text><text transform="translate(314.40,421.1) scale(0.72,1)" text-anchor="middle">7</text></g><text xml:space="preserve" transform="translate(329.60,421.1) scale(1.0000,1)" font-size="19.2" font-family="Liberation Sans" font-weight="normal" fill="#d4d4d4" >安値</text><g font-size="20.4" font-family="Liberation Sans" font-weight="normal" fill="#d4d4d4"><text transform="translate(372.00,421.1) scale(0.72,1)" text-anchor="middle">:</text><text transform="translate(381.60,421.1) scale(0.72,1)" text-anchor="middle">4</text><text transform="translate(391.20,421.1) scale(0.72,1)" text-anchor="middle">,</text><text transform="translate(400.80,421.1) scale(0.72,1)" text-anchor="middle">7</text><text transform="translate(410.40,421.1) scale(0.72,1)" text-anchor="middle">4</text><text transform="translate(420.00,421.1) scale(0.72,1)" text-anchor="middle">7</text></g><text xml:space="preserve" transform="translate(435.20,421.1) scale(1.0000,1)" font-size="19.2" font-family="Liberation Sans" font-weight="normal" fill="#d4d4d4" >終値</text><g font-size="20.4" font-family="Liberation Sans" font-weight="normal" fill="#d4d4d4"><text transform="translate(477.60,421.1) scale(0.72,1)" text-anchor="middle">:</text><text transform="translate(487.20,421.1) scale(0.72,1)" text-anchor="middle">4</text><text transform="translate(496.80,421.1) scale(0.72,1)" text-anchor="middle">,</text><text transform="translate(506.40,421.1) scale(0.72,1)" text-anchor="middle">7</text><text transform="translate(516.00,421.1) scale(0.72,1)" text-anchor="middle">4</text><text transform="translate(525.60,421.1) scale(0.72,1)" text-anchor="middle">7</text></g>
<g font-size="20.4" font-family="Liberation Sans" font-weight="normal" fill="#cccccc"><text transform="translate(1364.00,716.1) scale(0.72,1)" text-anchor="middle">3</text><path d="M1375.00 701.90V716.10M1371.80 705.10L1375.00 702.10" stroke="#cccccc" stroke-width="1.5" fill="none"/></g>
<path d="M1897.6 494.4L1901.4 496.8L1897.6 499.2Z" fill="#f0ec80"/>
</g>
<g font-size="20.4" font-family="Liberation Sans" font-weight="bold" fill="#f0f0f0" stroke="#f0f0f0" stroke-width="0.6"><text transform="translate(35.50,740.8000000000001) scale(0.74,1)" text-anchor="middle">0</text><text transform="translate(45.10,740.8000000000001) scale(0.74,1)" text-anchor="middle">6</text></g>
<g font-size="20.4" font-family="Liberation Sans" font-weight="normal" fill="#cccccc"><text transform="translate(85.00,740.8000000000001) scale(0.72,1)" text-anchor="middle">0</text><text transform="translate(94.60,740.8000000000001) scale(0.72,1)" text-anchor="middle">9</text></g>
<g font-size="20.4" font-family="Liberation Sans" font-weight="normal" fill="#cccccc"><path d="M181.40 726.60V740.80M178.20 729.80L181.40 726.80" stroke="#cccccc" stroke-width="1.5" fill="none"/><text transform="translate(189.60,740.8000000000001) scale(0.72,1)" text-anchor="middle">0</text></g>
<g font-size="20.4" font-family="Liberation Sans" font-weight="normal" fill="#cccccc"><path d="M276.70 726.60V740.80M273.50 729.80L276.70 726.80" stroke="#cccccc" stroke-width="1.5" fill="none"/><path d="M286.30 726.60V740.80M283.10 729.80L286.30 726.80" stroke="#cccccc" stroke-width="1.5" fill="none"/></g>
<g font-size="20.4" font-family="Liberation Sans" font-weight="normal" fill="#cccccc"><path d="M368.80 726.60V740.80M365.60 729.80L368.80 726.80" stroke="#cccccc" stroke-width="1.5" fill="none"/><text transform="translate(377.00,740.8000000000001) scale(0.72,1)" text-anchor="middle">2</text></g>
<g font-size="20.4" font-family="Liberation Sans" font-weight="normal" fill="#cccccc"><path d="M462.70 726.60V740.80M459.50 729.80L462.70 726.80" stroke="#cccccc" stroke-width="1.5" fill="none"/><text transform="translate(470.90,740.8000000000001) scale(0.72,1)" text-anchor="middle">3</text></g>
<g font-size="20.4" font-family="Liberation Sans" font-weight="normal" fill="#cccccc"><path d="M556.10 726.60V740.80M552.90 729.80L556.10 726.80" stroke="#cccccc" stroke-width="1.5" fill="none"/><text transform="translate(564.30,740.8000000000001) scale(0.72,1)" text-anchor="middle">4</text></g>
<g font-size="20.4" font-family="Liberation Sans" font-weight="normal" fill="#cccccc"><path d="M649.70 726.60V740.80M646.50 729.80L649.70 726.80" stroke="#cccccc" stroke-width="1.5" fill="none"/><text transform="translate(657.90,740.8000000000001) scale(0.72,1)" text-anchor="middle">5</text></g>
<g font-size="20.4" font-family="Liberation Sans" font-weight="normal" fill="#cccccc"><path d="M712.40 726.60V740.80M709.20 729.80L712.40 726.80" stroke="#cccccc" stroke-width="1.5" fill="none"/><text transform="translate(720.60,740.8000000000001) scale(0.72,1)" text-anchor="middle">7</text></g>
<g font-size="20.4" font-family="Liberation Sans" font-weight="normal" fill="#cccccc"><path d="M807.70 726.60V740.80M804.50 729.80L807.70 726.80" stroke="#cccccc" stroke-width="1.5" fill="none"/><text transform="translate(815.90,740.8000000000001) scale(0.72,1)" text-anchor="middle">8</text></g>
<g font-size="20.4" font-family="Liberation Sans" font-weight="normal" fill="#cccccc"><path d="M899.70 726.60V740.80M896.50 729.80L899.70 726.80" stroke="#cccccc" stroke-width="1.5" fill="none"/><text transform="translate(907.90,740.8000000000001) scale(0.72,1)" text-anchor="middle">9</text></g>
<g font-size="20.4" font-family="Liberation Sans" font-weight="normal" fill="#cccccc"><text transform="translate(987.40,740.8000000000001) scale(0.72,1)" text-anchor="middle">2</text><text transform="translate(997.00,740.8000000000001) scale(0.72,1)" text-anchor="middle">0</text></g>
<g font-size="20.4" font-family="Liberation Sans" font-weight="normal" fill="#cccccc"><text transform="translate(1083.00,740.8000000000001) scale(0.72,1)" text-anchor="middle">2</text><path d="M1094.00 726.60V740.80M1090.80 729.80L1094.00 726.80" stroke="#cccccc" stroke-width="1.5" fill="none"/></g>
<g font-size="20.4" font-family="Liberation Sans" font-weight="normal" fill="#cccccc"><text transform="translate(1171.80,740.8000000000001) scale(0.72,1)" text-anchor="middle">2</text><text transform="translate(1181.40,740.8000000000001) scale(0.72,1)" text-anchor="middle">2</text></g>
<g font-size="20.4" font-family="Liberation Sans" font-weight="normal" fill="#cccccc"><text transform="translate(1267.20,740.8000000000001) scale(0.72,1)" text-anchor="middle">2</text><text transform="translate(1276.80,740.8000000000001) scale(0.72,1)" text-anchor="middle">3</text></g>
<g font-size="20.4" font-family="Liberation Sans" font-weight="normal" fill="#cccccc"><text transform="translate(1362.30,740.8000000000001) scale(0.72,1)" text-anchor="middle">0</text><text transform="translate(1371.90,740.8000000000001) scale(0.72,1)" text-anchor="middle">0</text></g>
<g font-size="20.4" font-family="Liberation Sans" font-weight="normal" fill="#cccccc"><text transform="translate(1456.60,740.8000000000001) scale(0.72,1)" text-anchor="middle">0</text><path d="M1467.60 726.60V740.80M1464.40 729.80L1467.60 726.80" stroke="#cccccc" stroke-width="1.5" fill="none"/></g>
<g font-size="20.4" font-family="Liberation Sans" font-weight="normal" fill="#cccccc"><text transform="translate(1551.60,740.8000000000001) scale(0.72,1)" text-anchor="middle">0</text><text transform="translate(1561.20,740.8000000000001) scale(0.72,1)" text-anchor="middle">2</text></g>
<g font-size="20.4" font-family="Liberation Sans" font-weight="normal" fill="#cccccc"><text transform="translate(1645.10,740.8000000000001) scale(0.72,1)" text-anchor="middle">0</text><text transform="translate(1654.70,740.8000000000001) scale(0.72,1)" text-anchor="middle">3</text></g>
<g font-size="20.4" font-family="Liberation Sans" font-weight="normal" fill="#cccccc"><text transform="translate(1737.20,740.8000000000001) scale(0.72,1)" text-anchor="middle">0</text><text transform="translate(1746.80,740.8000000000001) scale(0.72,1)" text-anchor="middle">4</text></g>
<g font-size="20.4" font-family="Liberation Sans" font-weight="normal" fill="#cccccc"><text transform="translate(1822.00,740.8000000000001) scale(0.72,1)" text-anchor="middle">0</text><text transform="translate(1831.60,740.8000000000001) scale(0.72,1)" text-anchor="middle">5</text></g>
<g font-size="20.4" font-family="Liberation Sans" font-weight="normal" fill="#cccccc"><text transform="translate(1879.00,740.8000000000001) scale(0.72,1)" text-anchor="middle">0</text><text transform="translate(1888.60,740.8000000000001) scale(0.72,1)" text-anchor="middle">6</text></g>
<g clip-path="url(#ax1)">
<g font-size="20.4" font-family="Liberation Sans" font-weight="normal" fill="#cccccc"><text transform="translate(1912.50,424.3) scale(0.72,1)" text-anchor="middle">4</text><text transform="translate(1922.10,424.3) scale(0.72,1)" text-anchor="middle">,</text><text transform="translate(1931.70,424.3) scale(0.72,1)" text-anchor="middle">7</text><text transform="translate(1941.30,424.3) scale(0.72,1)" text-anchor="middle">6</text><text transform="translate(1950.90,424.3) scale(0.72,1)" text-anchor="middle">0</text></g>
<g font-size="20.4" font-family="Liberation Sans" font-weight="normal" fill="#cccccc"><text transform="translate(1912.50,477.3) scale(0.72,1)" text-anchor="middle">4</text><text transform="translate(1922.10,477.3) scale(0.72,1)" text-anchor="middle">,</text><text transform="translate(1931.70,477.3) scale(0.72,1)" text-anchor="middle">7</text><text transform="translate(1941.30,477.3) scale(0.72,1)" text-anchor="middle">5</text><text transform="translate(1950.90,477.3) scale(0.72,1)" text-anchor="middle">0</text></g>
<g font-size="20.4" font-family="Liberation Sans" font-weight="normal" fill="#cccccc"><text transform="translate(1912.50,530.3) scale(0.72,1)" text-anchor="middle">4</text><text transform="translate(1922.10,530.3) scale(0.72,1)" text-anchor="middle">,</text><text transform="translate(1931.70,530.3) scale(0.72,1)" text-anchor="middle">7</text><text transform="translate(1941.30,530.3) scale(0.72,1)" text-anchor="middle">4</text><text transform="translate(1950.90,530.3) scale(0.72,1)" text-anchor="middle">0</text></g>
<g font-size="20.4" font-family="Liberation Sans" font-weight="normal" fill="#cccccc"><text transform="translate(1912.50,583.5999999999999) scale(0.72,1)" text-anchor="middle">4</text><text transform="translate(1922.10,583.5999999999999) scale(0.72,1)" text-anchor="middle">,</text><text transform="translate(1931.70,583.5999999999999) scale(0.72,1)" text-anchor="middle">7</text><text transform="translate(1941.30,583.5999999999999) scale(0.72,1)" text-anchor="middle">3</text><text transform="translate(1950.90,583.5999999999999) scale(0.72,1)" text-anchor="middle">0</text></g>
<g font-size="20.4" font-family="Liberation Sans" font-weight="normal" fill="#cccccc"><text transform="translate(1912.50,636.5999999999999) scale(0.72,1)" text-anchor="middle">4</text><text transform="translate(1922.10,636.5999999999999) scale(0.72,1)" text-anchor="middle">,</text><text transform="translate(1931.70,636.5999999999999) scale(0.72,1)" text-anchor="middle">7</text><text transform="translate(1941.30,636.5999999999999) scale(0.72,1)" text-anchor="middle">2</text><text transform="translate(1950.90,636.5999999999999) scale(0.72,1)" text-anchor="middle">0</text></g>
<g font-size="20.4" font-family="Liberation Sans" font-weight="normal" fill="#cccccc"><text transform="translate(1912.50,689.5999999999999) scale(0.72,1)" text-anchor="middle">4</text><text transform="translate(1922.10,689.5999999999999) scale(0.72,1)" text-anchor="middle">,</text><text transform="translate(1931.70,689.5999999999999) scale(0.72,1)" text-anchor="middle">7</text><path d="M1942.70 675.40V689.60M1939.50 678.60L1942.70 675.60" stroke="#cccccc" stroke-width="1.5" fill="none"/><text transform="translate(1950.90,689.5999999999999) scale(0.72,1)" text-anchor="middle">0</text></g>
<g font-size="20.4" font-family="Liberation Sans" font-weight="normal" fill="#cccccc"><text transform="translate(1912.50,742.6999999999999) scale(0.72,1)" text-anchor="middle">4</text><text transform="translate(1922.10,742.6999999999999) scale(0.72,1)" text-anchor="middle">,</text><text transform="translate(1931.70,742.6999999999999) scale(0.72,1)" text-anchor="middle">7</text><text transform="translate(1941.30,742.6999999999999) scale(0.72,1)" text-anchor="middle">0</text><text transform="translate(1950.90,742.6999999999999) scale(0.72,1)" text-anchor="middle">0</text></g>
<rect x="1905.8" y="481.0" width="93.5" height="32.299999999999955" fill="#e4e4e4"/>
<rect x="1907.4" y="482.6" width="90.3" height="29.099999999999955" fill="#d4d4d4"/>
<g font-size="20.4" font-family="Liberation Sans" font-weight="bold" fill="#000" stroke="#000" stroke-width="0.6"><text transform="translate(1932.50,502.8) scale(0.74,1)" text-anchor="middle">4</text><text transform="translate(1942.10,502.8) scale(0.74,1)" text-anchor="middle">,</text><text transform="translate(1951.70,502.8) scale(0.74,1)" text-anchor="middle">7</text><text transform="translate(1961.30,502.8) scale(0.74,1)" text-anchor="middle">4</text><text transform="translate(1970.90,502.8) scale(0.74,1)" text-anchor="middle">7</text></g>
</g>
</svg>
<svg width="2011" height="1080" style="position:absolute;left:0;top:0">
<defs><clipPath id="c2"><rect x="11" y="758.5" width="1894.5" height="286.5"/></clipPath><clipPath id="ax2"><rect x="1907" y="756.5" width="92" height="313.5"/></clipPath></defs>
<g clip-path="url(#c2)">
<line x1="56.3" y1="758.5" x2="56.3" y2="1045" stroke="#b4b4b4" stroke-width="3.2" stroke-dasharray="1.6 1.6"/>
<line x1="80.5" y1="758.5" x2="80.5" y2="1045" stroke="#8c8c8c" stroke-width="1.6" stroke-dasharray="1.6 1.6"/>
<line x1="175.5" y1="758.5" x2="175.5" y2="1045" stroke="#8c8c8c" stroke-width="1.6" stroke-dasharray="1.6 1.6"/>
<line x1="270.8" y1="758.5" x2="270.8" y2="1045" stroke="#8c8c8c" stroke-width="1.6" stroke-dasharray="1.6 1.6"/>
<line x1="362.9" y1="758.5" x2="362.9" y2="1045" stroke="#8c8c8c" stroke-width="1.6" stroke-dasharray="1.6 1.6"/>
<line x1="456.8" y1="758.5" x2="456.8" y2="1045" stroke="#8c8c8c" stroke-width="1.6" stroke-dasharray="1.6 1.6"/>
<line x1="550.2" y1="758.5" x2="550.2" y2="1045" stroke="#8c8c8c" stroke-width="1.6" stroke-dasharray="1.6 1.6"/>
<line x1="643.8" y1="758.5" x2="643.8" y2="1045" stroke="#8c8c8c" stroke-width="1.6" stroke-dasharray="1.6 1.6"/>
<line x1="706.5" y1="758.5" x2="706.5" y2="1045" stroke="#8c8c8c" stroke-width="1.6" stroke-dasharray="1.6 1.6"/>
<line x1="801.8" y1="758.5" x2="801.8" y2="1045" stroke="#8c8c8c" stroke-width="1.6" stroke-dasharray="1.6 1.6"/>
<line x1="893.8" y1="758.5" x2="893.8" y2="1045" stroke="#8c8c8c" stroke-width="1.6" stroke-dasharray="1.6 1.6"/>
<line x1="982.9" y1="758.5" x2="982.9" y2="1045" stroke="#8c8c8c" stroke-width="1.6" stroke-dasharray="1.6 1.6"/>
<line x1="1078.5" y1="758.5" x2="1078.5" y2="1045" stroke="#8c8c8c" stroke-width="1.6" stroke-dasharray="1.6 1.6"/>
<line x1="1167.3" y1="758.5" x2="1167.3" y2="1045" stroke="#8c8c8c" stroke-width="1.6" stroke-dasharray="1.6 1.6"/>
<line x1="1262.7" y1="758.5" x2="1262.7" y2="1045" stroke="#8c8c8c" stroke-width="1.6" stroke-dasharray="1.6 1.6"/>
<line x1="1357.8" y1="758.5" x2="1357.8" y2="1045" stroke="#8c8c8c" stroke-width="1.6" stroke-dasharray="1.6 1.6"/>
<line x1="1452.1" y1="758.5" x2="1452.1" y2="1045" stroke="#8c8c8c" stroke-width="1.6" stroke-dasharray="1.6 1.6"/>
<line x1="1547.1" y1="758.5" x2="1547.1" y2="1045" stroke="#8c8c8c" stroke-width="1.6" stroke-dasharray="1.6 1.6"/>
<line x1="1640.6" y1="758.5" x2="1640.6" y2="1045" stroke="#8c8c8c" stroke-width="1.6" stroke-dasharray="1.6 1.6"/>
<line x1="1732.7" y1="758.5" x2="1732.7" y2="1045" stroke="#8c8c8c" stroke-width="1.6" stroke-dasharray="1.6 1.6"/>
<line x1="1817.5" y1="758.5" x2="1817.5" y2="1045" stroke="#8c8c8c" stroke-width="1.6" stroke-dasharray="1.6 1.6"/>
<line x1="1898.7" y1="758.5" x2="1898.7" y2="1045" stroke="#8c8c8c" stroke-width="1.6" stroke-dasharray="1.6 1.6"/>
<line x1="11" y1="809.1" x2="1905.5" y2="809.1" stroke="#8c8c8c" stroke-width="1.6" stroke-dasharray="1.6 1.6"/>
<line x1="11" y1="862.2" x2="1905.5" y2="862.2" stroke="#8c8c8c" stroke-width="1.6" stroke-dasharray="1.6 1.6"/>
<line x1="11" y1="916.6" x2="1905.5" y2="916.6" stroke="#8c8c8c" stroke-width="1.6" stroke-dasharray="1.6 1.6"/>
<line x1="11" y1="971.2" x2="1905.5" y2="971.2" stroke="#8c8c8c" stroke-width="1.6" stroke-dasharray="1.6 1.6"/>
<line x1="11" y1="1025.9" x2="1905.5" y2="1025.9" stroke="#8c8c8c" stroke-width="1.6" stroke-dasharray="1.6 1.6"/>
<path d="M12.5,916.0H14.1V912.8H15.7V912.8H17.3V909.6H18.9V914.4H20.5V912.8H22.1V916.0H23.7V914.4H25.3V904.8H26.9V903.2H28.5V903.2H30.1V904.8H31.7V904.8H33.3V908.0H34.9V908.0H36.5V911.2H38.1V917.6H39.7V927.2H41.3V927.2H42.9V932.0H44.5V933.6H46.1V935.2H47.7V930.4H49.3V925.6H50.9V924.0H52.5V927.2H54.1V930.4H55.7V925.6H57.3V927.2H58.9V946.4H60.5V943.2H62.1V933.6H63.7V930.4H65.3V930.4H66.9V925.6H68.5V925.6H70.1V925.6H71.7V927.2H73.3V925.6H74.9V922.4H76.5V924.0H78.1V917.6H79.7V912.8H81.3V909.6H82.9V912.8H84.5V914.4H86.1V917.6H87.7V922.4H89.3V925.6H90.9V925.6H92.5V941.6H94.1V952.8H95.7V957.6H97.3V957.6H98.9V948.0H100.5V941.6H102.1V938.4H103.7V936.8H105.3V935.2H106.9V928.8H108.5V920.8H110.1V914.4H111.7V917.6H113.3V920.8H114.9V924.0H116.5V924.0H118.1V925.6H119.7V933.6H121.3V940.0H122.9V940.0H124.5V935.2H126.1V936.8H127.7V941.6H129.3V938.4H130.9V932.0H132.5V927.2H134.1V920.8H135.7V911.2H137.3V904.8H138.9V906.4H140.5V908.0H142.1V906.4H143.7V906.4H145.3V914.4H146.9V924.0H148.5V922.4H150.1V917.6H151.7V914.4H153.3V912.8H154.9V914.4H156.5V911.2H158.1V909.6H159.7V906.4H161.3V903.2H162.9V906.4H164.5V916.0H166.1V924.0H167.7V928.8H169.3V933.6H170.9V936.8H172.5V941.6H174.1V946.4H175.7V951.2H177.3V964.0H178.9V973.6H180.5V978.4H182.1V981.6H183.7V986.4H185.3V986.4H186.9V980.0H188.5V976.8H190.1V986.4H191.7V996.0H193.3V1013.6H194.9V1012.0H196.5V1010.4H198.1V1007.2H199.7V1000.8H201.3V996.0H202.9V996.0H204.5V1002.4H206.1V1008.8H207.7V1000.8H209.3V989.6H210.9V983.2H212.5V981.6H214.1V980.0H215.7V978.4H217.3V973.6H218.9V972.0H220.5V968.8H222.1V968.8H223.7V968.8H225.3V970.4H226.9V968.8H228.5V975.2H230.1V973.6H231.7V968.8H233.3V964.0H234.9V967.2H236.5V970.4H238.1V981.6H239.7V991.2H241.3V988.0H242.9V984.8H244.5V986.4H246.1V980.0H247.7V978.4H249.3V978.4H250.9V976.8H252.5V980.0H254.1V988.0H255.7V994.4H257.3V999.2H258.9V999.2H260.5V997.6H262.1V997.6H263.7V1000.8H265.3V999.2H266.9V997.6H268.5V997.6H270.1V989.6H271.7V983.2H273.3V984.8H274.9V984.8H276.5V986.4H278.1V992.8H279.7V999.2H281.3V999.2H282.9V1002.4H284.5V1002.4H286.1V1000.8H287.7V997.6H289.3V997.6H290.9V997.6H292.5V1000.8H294.1V1008.8H295.7V1010.4H297.3V1010.4H298.9V1012.0H300.5V1012.0H302.1V1012.0H303.7V1010.4H305.3V1007.2H306.9V1005.6H308.5V1002.4H310.1V1002.4H311.7V1000.8H313.3V1004.0H314.9V1010.4H316.5V1018.4H318.1V1021.6H319.7V1023.2H321.3V1024.8H322.9V1026.4H324.5V1028.0H326.1V1031.2H327.7V1026.4H329.3V1021.6H330.9V1020.0H332.5V1020.0H334.1V1023.2H335.7V1023.2H337.3V1023.2H338.9V1021.6H340.5V1021.6H342.1V1021.6H343.7V1021.6H345.3V1016.8H346.9V1013.6H348.5V1012.0H350.1V1012.0H351.7V1008.8H353.3V1008.8H354.9V1007.2H356.5V1008.8H358.1V1013.6H359.7V1018.4H361.3V1016.8H362.9V1013.6H364.5V1021.6H366.1V1029.6H367.7V1032.8H369.3V1032.8H370.9V1028.0H372.5V1024.8H374.1V1021.6H375.7V1021.6H377.3V1026.4H378.9V1029.6H380.5V1026.4H382.1V1023.2H383.7V1021.6H385.3V1024.8H386.9V1029.6H388.5V1029.6H390.1V1026.4H391.7V1023.2H393.3V1020.0H394.9V1018.4H396.5V1023.2H398.1V1024.8H399.7V1024.8H401.3V1024.8H402.9V1026.4H404.5V1026.4H406.1V1026.4H407.7V1024.8H409.3V1021.6H410.9V1018.4H412.5V1016.8H414.1V1016.8H415.7V1020.0H417.3V1018.4H418.9V1007.2H420.5V1004.0H422.1V1004.0H423.7V1004.0H425.3V1008.8H426.9V1008.8H428.5V1008.8H430.1V1005.6H431.7V1004.0H433.3V999.2H434.9V992.8H436.5V994.4H438.1V999.2H439.7V1000.8H441.3V1000.8H442.9V999.2H444.5V997.6H446.1V999.2H447.7V999.2H449.3V996.0H450.9V986.4H452.5V983.2H454.1V984.8H455.7V984.8H457.3V983.2H458.9V989.6H460.5V991.2H462.1V988.0H463.7V988.0H465.3V989.6H466.9V992.8H468.5V991.2H470.1V989.6H471.7V988.0H473.3V983.2H474.9V978.4H476.5V980.0H478.1V981.6H479.7V983.2H481.3V981.6H482.9V980.0H484.5V978.4H486.1V976.8H487.7V975.2H489.3V970.4H490.9V972.0H492.5V975.2H494.1V975.2H495.7V976.8H497.3V976.8H498.9V973.6H500.5V975.2H502.1V975.2H503.7V976.8H505.3V983.2H506.9V983.2H508.5V978.4H510.1V975.2H511.7V976.8H513.3V978.4H514.9V975.2H516.5V975.2H518.1V980.0H519.7V984.8H521.3V989.6H522.9V991.2H524.5V992.8H526.1V994.4H527.7V997.6H529.3V996.0H530.9V992.8H532.5V991.2H534.1V991.2H535.7V994.4H537.3V994.4H538.9V991.2H540.5V986.4H542.1V991.2H543.7V992.8H545.3V996.0H546.9V997.6H548.5V999.2H550.1V999.2H551.7V996.0H553.3V992.8H554.9V994.4H556.5V997.6H558.1V999.2H559.7V999.2H561.3V999.2H562.9V1002.4H564.5V999.2H566.1V999.2H567.7V999.2H569.3V1000.8H570.9V1002.4H572.5V1004.0H574.1V1005.6H575.7V1008.8H577.3V1008.8H578.9V1007.2H580.5V1008.8H582.1V1008.8H583.7V1004.0H585.3V997.6H586.9V996.0H588.5V996.0H590.1V994.4H591.7V996.0H593.3V997.6H594.9V999.2H596.5V1002.4H598.1V1004.0H599.7V1007.2H601.3V1012.0H602.9V1015.2H604.5V1016.8H606.1V1016.8H607.7V1015.2H609.3V1015.2H610.9V1020.0H612.5V1024.8H614.1V1029.6H615.7V1026.4H617.3V1023.2H618.9V1020.0H620.5V1012.0H622.1V1005.6H623.7V999.2H625.3V996.0H626.9V994.4H628.5V992.8H630.1V991.2H631.7V992.8H633.3V991.2H634.9V991.2H636.5V991.2H638.1V992.8H639.7V996.0H641.3V997.6H642.9V996.0H644.5V989.6H646.1V991.2H647.7V991.2H649.3V991.2H650.9V984.8H652.5V980.0H654.1V981.6H655.7V986.4H657.3V986.4H658.9V978.4H660.5V980.0H662.1V980.0H663.7V976.8H665.3V978.4H666.9V978.4H668.5V980.0H670.1V984.8H671.7V992.8H673.3V999.2H674.9V997.6H676.5V994.4H678.1V992.8H679.7V989.6H681.3V988.0H682.9V983.2H684.5V978.4H686.1V972.0H687.7V970.4H689.3V970.4H690.9V970.4H692.5V972.0H694.1V980.0H695.7V978.4H697.3V976.8H698.9V975.2H700.5V981.6H702.1V986.4H703.7V992.8H705.3V999.2H706.9V1007.2H708.5V980.0H710.1V970.4H711.7V972.0H713.3V972.0H714.9V967.2H716.5V960.8H718.1V957.6H719.7V956.0H721.3V954.4H722.9V952.8H724.5V952.8H726.1V952.8H727.7V957.6H729.3V957.6H730.9V956.0H732.5V954.4H734.1V954.4H735.7V956.0H737.3V957.6H738.9V954.4H740.5V946.4H742.1V943.2H743.7V938.4H745.3V935.2H746.9V933.6H748.5V935.2H750.1V936.8H751.7V933.6H753.3V922.4H754.9V924.0H756.5V930.4H758.1V925.6H759.7V920.8H761.3V916.0H762.9V920.8H764.5V922.4H766.1V920.8H767.7V917.6H769.3V917.6H770.9V914.4H772.5V916.0H774.1V919.2H775.7V924.0H777.3V927.2H778.9V932.0H780.5V932.0H782.1V933.6H783.7V928.8H785.3V925.6H786.9V920.8H788.5V917.6H790.1V911.2H791.7V904.8H793.3V901.6H794.9V903.2H796.5V904.8H798.1V906.4H799.7V911.2H801.3V914.4H802.9V908.0H804.5V904.8H806.1V903.2H807.7V900.0H809.3V895.2H810.9V895.2H812.5V895.2H814.1V896.8H815.7V903.2H817.3V911.2H818.9V919.2H820.5V920.8H822.1V922.4H823.7V920.8H825.3V917.6H826.9V914.4H828.5V916.0H830.1V917.6H831.7V919.2H833.3V920.8H834.9V927.2H836.5V938.4H838.1V941.6H839.7V943.2H841.3V946.4H842.9V940.0H844.5V932.0H846.1V928.8H847.7V924.0H849.3V922.4H850.9V922.4H852.5V925.6H854.1V927.2H855.7V925.6H857.3V924.0H858.9V922.4H860.5V922.4H862.1V922.4H863.7V924.0H865.3V920.8H866.9V914.4H868.5V919.2H870.1V917.6H871.7V917.6H873.3V914.4H874.9V914.4H876.5V919.2H878.1V917.6H879.7V914.4H881.3V912.8H882.9V911.2H884.5V911.2H886.1V911.2H887.7V919.2H889.3V927.2H890.9V928.8H892.5V928.8H894.1V928.8H895.7V920.8H897.3V917.6H898.9V914.4H900.5V912.8H902.1V909.6H903.7V908.0H905.3V909.6H906.9V911.2H908.5V912.8H910.1V912.8H911.7V909.6H913.3V908.0H914.9V904.8H916.5V904.8H918.1V906.4H919.7V906.4H921.3V909.6H922.9V908.0H924.5V909.6H926.1V908.0H927.7V908.0H929.3V909.6H930.9V904.8H932.5V898.4H934.1V892.0H935.7V890.4H937.3V888.8H938.9V890.4H940.5V890.4H942.1V892.0H943.7V888.8H945.3V884.0H946.9V880.8H948.5V882.4H950.1V880.8H951.7V885.6H953.3V890.4H954.9V893.6H956.5V898.4H958.1V900.0H959.7V900.0H961.3V900.0H962.9V901.6H964.5V898.4H966.1V895.2H967.7V888.8H969.3V882.4H970.9V884.0H972.5V885.6H974.1V887.2H975.7V895.2H977.3V900.0H978.9V898.4H980.5V895.2H982.1V892.0H983.7V887.2H985.3V880.8H986.9V876.0H988.5V879.2H990.1V880.8H991.7V884.0H993.3V885.6H994.9V884.0H996.5V885.6H998.1V887.2H999.7V890.4H1001.3V892.0H1002.9V890.4H1004.5V890.4H1006.1V896.8H1007.7V893.6H1009.3V892.0H1010.9V892.0H1012.5V890.4H1014.1V890.4H1015.7V884.0H1017.3V877.6H1018.9V876.0H1020.5V872.8H1022.1V872.8H1023.7V874.4H1025.3V876.0H1026.9V877.6H1028.5V880.8H1030.1V880.8H1031.7V884.0H1033.3V885.6H1034.9V884.0H1036.5V887.2H1038.1V901.6H1039.7V904.8H1041.3V903.2H1042.9V887.2H1044.5V887.2H1046.1V888.8H1047.7V893.6H1049.3V903.2H1050.9V901.6H1052.5V903.2H1054.1V903.2H1055.7V903.2H1057.3V900.0H1058.9V900.0H1060.5V903.2H1062.1V901.6H1063.7V896.8H1065.3V893.6H1066.9V890.4H1068.5V892.0H1070.1V895.2H1071.7V893.6H1073.3V890.4H1074.9V885.6H1076.5V882.4H1078.1V884.0H1079.7V887.2H1081.3V888.8H1082.9V892.0H1084.5V893.6H1086.1V890.4H1087.7V884.0H1089.3V885.6H1090.9V885.6H1092.5V888.8H1094.1V888.8H1095.7V884.0H1097.3V882.4H1098.9V880.8H1100.5V880.8H1102.1V884.0H1103.7V885.6H1105.3V887.2H1106.9V887.2H1108.5V887.2H1110.1V887.2H1111.7V888.8H1113.3V893.6H1114.9V898.4H1116.5V898.4H1118.1V898.4H1119.7V898.4H1121.3V898.4H1122.9V900.0H1124.5V903.2H1126.1V908.0H1127.7V909.6H1129.3V908.0H1130.9V904.8H1132.5V903.2H1134.1V898.4H1135.7V893.6H1137.3V892.0H1138.9V895.2H1140.5V895.2H1142.1V893.6H1143.7V893.6H1145.3V892.0H1146.9V900.0H1148.5V903.2H1150.1V901.6H1151.7V909.6H1153.3V916.0H1154.9V920.8H1156.5V924.0H1158.1V925.6H1159.7V925.6H1161.3V928.8H1162.9V928.8H1164.5V928.8H1166.1V928.8H1167.7V920.8H1169.3V911.2H1170.9V903.2H1172.5V893.6H1174.1V895.2H1175.7V898.4H1177.3V898.4H1178.9V896.8H1180.5V892.0H1182.1V893.6H1183.7V903.2H1185.3V911.2H1186.9V908.0H1188.5V903.2H1190.1V903.2H1191.7V903.2H1193.3V904.8H1194.9V906.4H1196.5V912.8H1198.1V916.0H1199.7V919.2H1201.3V922.4H1202.9V924.0H1204.5V924.0H1206.1V924.0H1207.7V927.2H1209.3V928.8H1210.9V930.4H1212.5V928.8H1214.1V927.2H1215.7V925.6H1217.3V919.2H1218.9V912.8H1220.5V914.4H1222.1V914.4H1223.7V911.2H1225.3V908.0H1226.9V904.8H1228.5V903.2H1230.1V900.0H1231.7V895.2H1233.3V884.0H1234.9V887.2H1236.5V895.2H1238.1V896.8H1239.7V892.0H1241.3V890.4H1242.9V895.2H1244.5V898.4H1246.1V906.4H1247.7V917.6H1249.3V924.0H1250.9V922.4H1252.5V922.4H1254.1V922.4H1255.7V922.4H1257.3V922.4H1258.9V920.8H1260.5V917.6H1262.1V912.8H1263.7V912.8H1265.3V911.2H1266.9V914.4H1268.5V914.4H1270.1V912.8H1271.7V912.8H1273.3V916.0H1274.9V916.0H1276.5V917.6H1278.1V917.6H1279.7V917.6H1281.3V927.2H1282.9V919.2H1284.5V912.8H1286.1V919.2H1287.7V925.6H1289.3V928.8H1290.9V925.6H1292.5V924.0H1294.1V920.8H1295.7V914.4H1297.3V914.4H1298.9V911.2H1300.5V911.2H1302.1V911.2H1303.7V908.0H1305.3V903.2H1306.9V896.8H1308.5V890.4H1310.1V885.6H1311.7V885.6H1313.3V895.2H1314.9V909.6H1316.5V924.0H1318.1V935.2H1319.7V944.8H1321.3V946.4H1322.9V943.2H1324.5V935.2H1326.1V920.8H1327.7V906.4H1329.3V906.4H1330.9V904.8H1332.5V908.0H1334.1V911.2H1335.7V914.4H1337.3V916.0H1338.9V917.6H1340.5V917.6H1342.1V916.0H1343.7V909.6H1345.3V900.0H1346.9V903.2H1348.5V908.0H1350.1V909.6H1351.7V904.8H1353.3V898.4H1354.9V895.2H1356.5V895.2H1358.1V896.8H1359.7V896.8H1361.3V896.8H1362.9V903.2H1364.5V911.2H1366.1V909.6H1367.7V906.4H1369.3V901.6H1370.9V901.6H1372.5V901.6H1374.1V903.2H1375.7V904.8H1377.3V909.6H1378.9V912.8H1380.5V912.8H1382.1V914.4H1383.7V912.8H1385.3V912.8H1386.9V916.0H1388.5V917.6H1390.1V920.8H1391.7V919.2H1393.3V920.8H1394.9V922.4H1396.5V916.0H1398.1V911.2H1399.7V909.6H1401.3V914.4H1402.9V917.6H1404.5V917.6H1406.1V920.8H1407.7V924.0H1409.3V922.4H1410.9V922.4H1412.5V928.8H1414.1V919.2H1415.7V908.0H1417.3V903.2H1418.9V900.0H1420.5V893.6H1422.1V890.4H1423.7V888.8H1425.3V887.2H1426.9V884.0H1428.5V884.0H1430.1V879.2H1431.7V874.4H1433.3V869.6H1434.9V864.8H1436.5V861.6H1438.1V860.0H1439.7V856.8H1441.3V845.6H1442.9V834.4H1444.5V828.0H1446.1V826.4H1447.7V828.0H1449.3V832.8H1450.9V829.6H1452.5V828.0H1454.1V810.4H1455.7V796.0H1457.3V810.4H1458.9V816.8H1460.5V812.0H1462.1V807.2H1463.7V804.0H1465.3V802.4H1466.9V802.4H1468.5V799.2H1470.1V799.2H1471.7V810.4H1473.3V820.0H1474.9V828.0H1476.5V831.2H1478.1V836.0H1479.7V836.0H1481.3V831.2H1482.9V826.4H1484.5V818.4H1486.1V813.6H1487.7V818.4H1489.3V824.8H1490.9V831.2H1492.5V837.6H1494.1V839.2H1495.7V837.6H1497.3V836.0H1498.9V834.4H1500.5V832.8H1502.1V832.8H1503.7V834.4H1505.3V821.6H1506.9V807.2H1508.5V813.6H1510.1V816.8H1511.7V820.0H1513.3V821.6H1514.9V821.6H1516.5V821.6H1518.1V826.4H1519.7V831.2H1521.3V832.8H1522.9V829.6H1524.5V828.0H1526.1V820.0H1527.7V810.4H1529.3V802.4H1530.9V804.0H1532.5V804.0H1534.1V800.8H1535.7V804.0H1537.3V805.6H1538.9V807.2H1540.5V810.4H1542.1V808.8H1543.7V808.8H1545.3V815.2H1546.9V823.2H1548.5V828.0H1550.1V834.4H1551.7V834.4H1553.3V834.4H1554.9V831.2H1556.5V829.6H1558.1V824.8H1559.7V820.0H1561.3V818.4H1562.9V820.0H1564.5V820.0H1566.1V820.0H1567.7V818.4H1569.3V816.8H1570.9V813.6H1572.5V813.6H1574.1V815.2H1575.7V816.8H1577.3V820.0H1578.9V826.4H1580.5V826.4H1582.1V823.2H1583.7V820.0H1585.3V816.8H1586.9V815.2H1588.5V816.8H1590.1V818.4H1591.7V821.6H1593.3V824.8H1594.9V824.8H1596.5V828.0H1598.1V815.2H1599.7V813.6H1601.3V812.0H1602.9V810.4H1604.5V804.0H1606.1V799.2H1607.7V792.8H1609.3V792.8H1610.9V796.0H1612.5V800.8H1614.1V797.6H1615.7V794.4H1617.3V794.4H1618.9V794.4H1620.5V794.4H1622.1V799.2H1623.7V804.0H1625.3V808.8H1626.9V805.6H1628.5V804.0H1630.1V800.8H1631.7V802.4H1633.3V802.4H1634.9V804.0H1636.5V807.2H1638.1V812.0H1639.7V812.0H1641.3V812.0H1642.9V812.0H1644.5V810.4H1646.1V810.4H1647.7V812.0H1649.3V813.6H1650.9V807.2H1652.5V800.8H1654.1V797.6H1655.7V797.6H1657.3V800.8H1658.9V802.4H1660.5V804.0H1662.1V804.0H1663.7V805.6H1665.3V813.6H1666.9V810.4H1668.5V807.2H1670.1V802.4H1671.7V807.2H1673.3V810.4H1674.9V813.6H1676.5V808.8H1678.1V800.8H1679.7V783.2H1681.3V781.6H1682.9V781.6H1684.5V783.2H1686.1V786.4H1687.7V794.4H1689.3V797.6H1690.9V799.2H1692.5V797.6H1694.1V807.2H1695.7V808.8H1697.3V797.6H1698.9V791.2H1700.5V794.4H1702.1V797.6H1703.7V799.2H1705.3V797.6H1706.9V797.6H1708.5V796.0H1710.1V794.4H1711.7V794.4H1713.3V792.8H1714.9V791.2H1716.5V789.6H1718.1V799.2H1719.7V799.2H1721.3V797.6H1722.9V797.6H1724.5V804.0H1726.1V812.0H1727.7V810.4H1729.3V804.0H1730.9V805.6H1732.5V802.4H1734.1V800.8H1735.7V802.4H1737.3V813.6H1738.9V824.8H1740.5V832.8H1742.1V832.8H1743.7V831.2H1745.3V831.2H1746.9V829.6H1748.5V828.0H1750.1V829.6H1751.7V829.6H1753.3V829.6H1754.9V829.6H1756.5V832.8H1758.1V834.4H1759.7V839.2H1761.3V840.8H1762.9V839.2H1764.5V837.6H1766.1V837.6H1767.7V837.6H1769.3V839.2H1770.9V839.2H1772.5V847.2H1774.1V858.4H1775.7V860.0H1777.3V858.4H1778.9V860.0H1780.5V861.6H1782.1V864.8H1783.7V866.4H1785.3V866.4H1786.9V866.4H1788.5V868.0H1790.1V866.4H1791.7V863.2H1793.3V860.0H1794.9V853.6H1796.5V850.4H1798.1V845.6H1799.7V852.0H1801.3V858.4H1802.9V868.0H1804.5V864.8H1806.1V860.0H1807.7V853.6H1809.3V847.2H1810.9V853.6H1812.5V858.4H1814.1V861.6H1815.7V863.2H1817.3V863.2H1818.9V853.6H1820.5V852.0H1822.1V855.2H1823.7V855.2H1825.3V855.2H1826.9V852.0H1828.5V850.4H1830.1V845.6H1831.7V842.4H1833.3V837.6H1834.9V834.4H1836.5V834.4H1838.1V832.8H1839.7V831.2H1841.3V831.2H1842.9V834.4H1844.5V837.6H1846.1V845.6H1847.7V847.2H1849.3V845.6H1850.9V845.6H1852.5V844.0H1854.1V845.6H1855.7V848.8H1857.3V842.4H1858.9V840.8H1860.5V845.6H1862.1V847.2H1863.7V842.4H1865.3V844.0H1866.9V842.4H1868.5V834.4H1870.1V826.4H1871.7V823.2H1873.3V823.2H1874.9V820.0H1876.5V804.0H1878.1V792.8H1879.7V780.0H1881.3V773.6H1882.9V778.4H1884.5V781.6H1886.1V791.2H1887.7V791.2H1889.3V788.0H1890.9V783.2H1892.5V786.4H1894.1V796.0H1895.7V813.6H1897.3V826.4H1898.9V829.6H1900.5V832.8" fill="none" stroke="#ff0000" stroke-width="2.8" stroke-linejoin="miter" stroke-linecap="butt"/>
<g font-size="20.4" font-family="Liberation Sans" font-weight="normal" fill="#d4d4d4"><text transform="translate(16.80,777.1) scale(0.72,1)" text-anchor="middle">[</text></g><text xml:space="preserve" transform="translate(22.40,777.1) scale(1.0000,1)" font-size="19.2" font-family="Liberation Sans" font-weight="normal" fill="#d4d4d4" >金</text><g font-size="20.4" font-family="Liberation Sans" font-weight="normal" fill="#d4d4d4"><text transform="translate(55.20,777.1) scale(0.72,1)" text-anchor="middle">2</text><text transform="translate(64.80,777.1) scale(0.72,1)" text-anchor="middle">5</text><text transform="translate(74.40,777.1) scale(0.72,1)" text-anchor="middle">/</text><path d="M85.40 762.90V777.10M82.20 766.10L85.40 763.10" stroke="#d4d4d4" stroke-width="1.5" fill="none"/><text transform="translate(93.60,777.1) scale(0.72,1)" text-anchor="middle">2</text><path d="M114.20 762.90V777.10M111.00 766.10L114.20 763.10" stroke="#d4d4d4" stroke-width="1.5" fill="none"/><text transform="translate(122.40,777.1) scale(0.72,1)" text-anchor="middle">3</text><text transform="translate(132.00,777.1) scale(0.72,1)" text-anchor="middle">,</text><text transform="translate(141.60,777.1) scale(0.72,1)" text-anchor="middle">9</text><path d="M152.60 762.90V777.10M149.40 766.10L152.60 763.10" stroke="#d4d4d4" stroke-width="1.5" fill="none"/><path d="M162.20 762.90V777.10M159.00 766.10L162.20 763.10" stroke="#d4d4d4" stroke-width="1.5" fill="none"/></g><path d="M167.9 763.6L178.9 774.6M178.9 763.6L167.9 774.6" stroke="#d4d4d4" stroke-width="1.5"/><g font-size="20.4" font-family="Liberation Sans" font-weight="normal" fill="#d4d4d4"><path d="M191.00 762.90V777.10M187.80 766.10L191.00 763.10" stroke="#d4d4d4" stroke-width="1.5" fill="none"/><text transform="translate(199.20,777.1) scale(0.72,1)" text-anchor="middle">.</text><text transform="translate(208.80,777.1) scale(0.72,1)" text-anchor="middle">0</text><text transform="translate(218.40,777.1) scale(0.72,1)" text-anchor="middle">0</text><text transform="translate(228.00,777.1) scale(0.72,1)" text-anchor="middle">]</text></g><rect x="235.6" y="768.5" width="11.5" height="1.6" fill="#d4d4d4"/><g font-size="20.4" font-family="Liberation Sans" font-weight="normal" fill="#d4d4d4"><text transform="translate(256.80,777.1) scale(0.72,1)" text-anchor="middle">[</text></g><text xml:space="preserve" transform="translate(262.40,777.1) scale(1.0000,1)" font-size="19.2" font-family="Liberation Sans" font-weight="normal" fill="#d4d4d4" >白金</text><g font-size="20.4" font-family="Liberation Sans" font-weight="normal" fill="#d4d4d4"><text transform="translate(314.40,777.1) scale(0.72,1)" text-anchor="middle">2</text><text transform="translate(324.00,777.1) scale(0.72,1)" text-anchor="middle">5</text><text transform="translate(333.60,777.1) scale(0.72,1)" text-anchor="middle">/</text><path d="M344.60 762.90V777.10M341.40 766.10L344.60 763.10" stroke="#d4d4d4" stroke-width="1.5" fill="none"/><text transform="translate(352.80,777.1) scale(0.72,1)" text-anchor="middle">2</text><text transform="translate(372.00,777.1) scale(0.72,1)" text-anchor="middle">4</text><text transform="translate(381.60,777.1) scale(0.72,1)" text-anchor="middle">,</text><text transform="translate(391.20,777.1) scale(0.72,1)" text-anchor="middle">7</text><text transform="translate(400.80,777.1) scale(0.72,1)" text-anchor="middle">4</text><text transform="translate(410.40,777.1) scale(0.72,1)" text-anchor="middle">7</text></g><path d="M417.5 763.6L428.5 774.6M428.5 763.6L417.5 774.6" stroke="#d4d4d4" stroke-width="1.5"/><g font-size="20.4" font-family="Liberation Sans" font-weight="normal" fill="#d4d4d4"><path d="M440.60 762.90V777.10M437.40 766.10L440.60 763.10" stroke="#d4d4d4" stroke-width="1.5" fill="none"/><text transform="translate(448.80,777.1) scale(0.72,1)" text-anchor="middle">.</text><text transform="translate(458.40,777.1) scale(0.72,1)" text-anchor="middle">0</text><text transform="translate(468.00,777.1) scale(0.72,1)" text-anchor="middle">0</text><text transform="translate(477.60,777.1) scale(0.72,1)" text-anchor="middle">]</text></g><text xml:space="preserve" transform="translate(492.80,777.1) scale(1.0000,1)" font-size="19.2" font-family="Liberation Sans" font-weight="normal" fill="#d4d4d4" >終値</text><g font-size="20.4" font-family="Liberation Sans" font-weight="normal" fill="#d4d4d4"></g><text xml:space="preserve" transform="translate(540.80,777.1) scale(1.0000,1)" font-size="19.2" font-family="Liberation Sans" font-weight="normal" fill="#d4d4d4" >時刻</text><g font-size="20.4" font-family="Liberation Sans" font-weight="normal" fill="#d4d4d4"><text transform="translate(583.20,777.1) scale(0.72,1)" text-anchor="middle">:</text><text transform="translate(592.80,777.1) scale(0.72,1)" text-anchor="middle">0</text><text transform="translate(602.40,777.1) scale(0.72,1)" text-anchor="middle">6</text><text transform="translate(612.00,777.1) scale(0.72,1)" text-anchor="middle">:</text><text transform="translate(621.60,777.1) scale(0.72,1)" text-anchor="middle">0</text><text transform="translate(631.20,777.1) scale(0.72,1)" text-anchor="middle">0</text><text transform="translate(650.40,777.1) scale(0.72,1)" text-anchor="middle">9</text><text transform="translate(660.00,777.1) scale(0.72,1)" text-anchor="middle">,</text><path d="M671.00 762.90V777.10M667.80 766.10L671.00 763.10" stroke="#d4d4d4" stroke-width="1.5" fill="none"/><text transform="translate(679.20,777.1) scale(0.72,1)" text-anchor="middle">6</text><text transform="translate(688.80,777.1) scale(0.72,1)" text-anchor="middle">4</text></g>
<g font-size="20.4" font-family="Liberation Sans" font-weight="normal" fill="#cccccc"><text transform="translate(1364.00,1037.5) scale(0.72,1)" text-anchor="middle">3</text><path d="M1375.00 1023.30V1037.50M1371.80 1026.50L1375.00 1023.50" stroke="#cccccc" stroke-width="1.5" fill="none"/></g>
</g>
<g font-size="20.4" font-family="Liberation Sans" font-weight="bold" fill="#f0f0f0" stroke="#f0f0f0" stroke-width="0.6"><text transform="translate(35.50,1062.2) scale(0.74,1)" text-anchor="middle">0</text><text transform="translate(45.10,1062.2) scale(0.74,1)" text-anchor="middle">6</text></g>
<g font-size="20.4" font-family="Liberation Sans" font-weight="normal" fill="#cccccc"><text transform="translate(85.00,1062.2) scale(0.72,1)" text-anchor="middle">0</text><text transform="translate(94.60,1062.2) scale(0.72,1)" text-anchor="middle">9</text></g>
<g font-size="20.4" font-family="Liberation Sans" font-weight="normal" fill="#cccccc"><path d="M181.40 1048.00V1062.20M178.20 1051.20L181.40 1048.20" stroke="#cccccc" stroke-width="1.5" fill="none"/><text transform="translate(189.60,1062.2) scale(0.72,1)" text-anchor="middle">0</text></g>
<g font-size="20.4" font-family="Liberation Sans" font-weight="normal" fill="#cccccc"><path d="M276.70 1048.00V1062.20M273.50 1051.20L276.70 1048.20" stroke="#cccccc" stroke-width="1.5" fill="none"/><path d="M286.30 1048.00V1062.20M283.10 1051.20L286.30 1048.20" stroke="#cccccc" stroke-width="1.5" fill="none"/></g>
<g font-size="20.4" font-family="Liberation Sans" font-weight="normal" fill="#cccccc"><path d="M368.80 1048.00V1062.20M365.60 1051.20L368.80 1048.20" stroke="#cccccc" stroke-width="1.5" fill="none"/><text transform="translate(377.00,1062.2) scale(0.72,1)" text-anchor="middle">2</text></g>
<g font-size="20.4" font-family="Liberation Sans" font-weight="normal" fill="#cccccc"><path d="M462.70 1048.00V1062.20M459.50 1051.20L462.70 1048.20" stroke="#cccccc" stroke-width="1.5" fill="none"/><text transform="translate(470.90,1062.2) scale(0.72,1)" text-anchor="middle">3</text></g>
<g font-size="20.4" font-family="Liberation Sans" font-weight="normal" fill="#cccccc"><path d="M556.10 1048.00V1062.20M552.90 1051.20L556.10 1048.20" stroke="#cccccc" stroke-width="1.5" fill="none"/><text transform="translate(564.30,1062.2) scale(0.72,1)" text-anchor="middle">4</text></g>
<g font-size="20.4" font-family="Liberation Sans" font-weight="normal" fill="#cccccc"><path d="M649.70 1048.00V1062.20M646.50 1051.20L649.70 1048.20" stroke="#cccccc" stroke-width="1.5" fill="none"/><text transform="translate(657.90,1062.2) scale(0.72,1)" text-anchor="middle">5</text></g>
<g font-size="20.4" font-family="Liberation Sans" font-weight="normal" fill="#cccccc"><path d="M712.40 1048.00V1062.20M709.20 1051.20L712.40 1048.20" stroke="#cccccc" stroke-width="1.5" fill="none"/><text transform="translate(720.60,1062.2) scale(0.72,1)" text-anchor="middle">7</text></g>
<g font-size="20.4" font-family="Liberation Sans" font-weight="normal" fill="#cccccc"><path d="M807.70 1048.00V1062.20M804.50 1051.20L807.70 1048.20" stroke="#cccccc" stroke-width="1.5" fill="none"/><text transform="translate(815.90,1062.2) scale(0.72,1)" text-anchor="middle">8</text></g>
<g font-size="20.4" font-family="Liberation Sans" font-weight="normal" fill="#cccccc"><path d="M899.70 1048.00V1062.20M896.50 1051.20L899.70 1048.20" stroke="#cccccc" stroke-width="1.5" fill="none"/><text transform="translate(907.90,1062.2) scale(0.72,1)" text-anchor="middle">9</text></g>
<g font-size="20.4" font-family="Liberation Sans" font-weight="normal" fill="#cccccc"><text transform="translate(987.40,1062.2) scale(0.72,1)" text-anchor="middle">2</text><text transform="translate(997.00,1062.2) scale(0.72,1)" text-anchor="middle">0</text></g>
<g font-size="20.4" font-family="Liberation Sans" font-weight="normal" fill="#cccccc"><text transform="translate(1083.00,1062.2) scale(0.72,1)" text-anchor="middle">2</text><path d="M1094.00 1048.00V1062.20M1090.80 1051.20L1094.00 1048.20" stroke="#cccccc" stroke-width="1.5" fill="none"/></g>
<g font-size="20.4" font-family="Liberation Sans" font-weight="normal" fill="#cccccc"><text transform="translate(1171.80,1062.2) scale(0.72,1)" text-anchor="middle">2</text><text transform="translate(1181.40,1062.2) scale(0.72,1)" text-anchor="middle">2</text></g>
<g font-size="20.4" font-family="Liberation Sans" font-weight="normal" fill="#cccccc"><text transform="translate(1267.20,1062.2) scale(0.72,1)" text-anchor="middle">2</text><text transform="translate(1276.80,1062.2) scale(0.72,1)" text-anchor="middle">3</text></g>
<g font-size="20.4" font-family="Liberation Sans" font-weight="normal" fill="#cccccc"><text transform="translate(1362.30,1062.2) scale(0.72,1)" text-anchor="middle">0</text><text transform="translate(1371.90,1062.2) scale(0.72,1)" text-anchor="middle">0</text></g>
<g font-size="20.4" font-family="Liberation Sans" font-weight="normal" fill="#cccccc"><text transform="translate(1456.60,1062.2) scale(0.72,1)" text-anchor="middle">0</text><path d="M1467.60 1048.00V1062.20M1464.40 1051.20L1467.60 1048.20" stroke="#cccccc" stroke-width="1.5" fill="none"/></g>
<g font-size="20.4" font-family="Liberation Sans" font-weight="normal" fill="#cccccc"><text transform="translate(1551.60,1062.2) scale(0.72,1)" text-anchor="middle">0</text><text transform="translate(1561.20,1062.2) scale(0.72,1)" text-anchor="middle">2</text></g>
<g font-size="20.4" font-family="Liberation Sans" font-weight="normal" fill="#cccccc"><text transform="translate(1645.10,1062.2) scale(0.72,1)" text-anchor="middle">0</text><text transform="translate(1654.70,1062.2) scale(0.72,1)" text-anchor="middle">3</text></g>
<g font-size="20.4" font-family="Liberation Sans" font-weight="normal" fill="#cccccc"><text transform="translate(1737.20,1062.2) scale(0.72,1)" text-anchor="middle">0</text><text transform="translate(1746.80,1062.2) scale(0.72,1)" text-anchor="middle">4</text></g>
<g font-size="20.4" font-family="Liberation Sans" font-weight="normal" fill="#cccccc"><text transform="translate(1822.00,1062.2) scale(0.72,1)" text-anchor="middle">0</text><text transform="translate(1831.60,1062.2) scale(0.72,1)" text-anchor="middle">5</text></g>
<g font-size="20.4" font-family="Liberation Sans" font-weight="normal" fill="#cccccc"><text transform="translate(1879.00,1062.2) scale(0.72,1)" text-anchor="middle">0</text><text transform="translate(1888.60,1062.2) scale(0.72,1)" text-anchor="middle">6</text></g>
<g clip-path="url(#ax2)">
<g font-size="20.4" font-family="Liberation Sans" font-weight="normal" fill="#cccccc"><text transform="translate(1912.50,805.4) scale(0.72,1)" text-anchor="middle">9</text><text transform="translate(1922.10,805.4) scale(0.72,1)" text-anchor="middle">,</text><path d="M1933.10 791.20V805.40M1929.90 794.40L1933.10 791.40" stroke="#cccccc" stroke-width="1.5" fill="none"/><text transform="translate(1941.30,805.4) scale(0.72,1)" text-anchor="middle">7</text><text transform="translate(1950.90,805.4) scale(0.72,1)" text-anchor="middle">5</text></g>
<g font-size="20.4" font-family="Liberation Sans" font-weight="normal" fill="#cccccc"><text transform="translate(1912.50,858.5) scale(0.72,1)" text-anchor="middle">9</text><text transform="translate(1922.10,858.5) scale(0.72,1)" text-anchor="middle">,</text><path d="M1933.10 844.30V858.50M1929.90 847.50L1933.10 844.50" stroke="#cccccc" stroke-width="1.5" fill="none"/><text transform="translate(1941.30,858.5) scale(0.72,1)" text-anchor="middle">5</text><text transform="translate(1950.90,858.5) scale(0.72,1)" text-anchor="middle">0</text></g>
<g font-size="20.4" font-family="Liberation Sans" font-weight="normal" fill="#cccccc"><text transform="translate(1912.50,912.9) scale(0.72,1)" text-anchor="middle">9</text><text transform="translate(1922.10,912.9) scale(0.72,1)" text-anchor="middle">,</text><path d="M1933.10 898.70V912.90M1929.90 901.90L1933.10 898.90" stroke="#cccccc" stroke-width="1.5" fill="none"/><text transform="translate(1941.30,912.9) scale(0.72,1)" text-anchor="middle">2</text><text transform="translate(1950.90,912.9) scale(0.72,1)" text-anchor="middle">5</text></g>
<g font-size="20.4" font-family="Liberation Sans" font-weight="normal" fill="#cccccc"><text transform="translate(1912.50,967.5) scale(0.72,1)" text-anchor="middle">9</text><text transform="translate(1922.10,967.5) scale(0.72,1)" text-anchor="middle">,</text><path d="M1933.10 953.30V967.50M1929.90 956.50L1933.10 953.50" stroke="#cccccc" stroke-width="1.5" fill="none"/><text transform="translate(1941.30,967.5) scale(0.72,1)" text-anchor="middle">0</text><text transform="translate(1950.90,967.5) scale(0.72,1)" text-anchor="middle">0</text></g>
<g font-size="20.4" font-family="Liberation Sans" font-weight="normal" fill="#cccccc"><text transform="translate(1912.50,1022.2) scale(0.72,1)" text-anchor="middle">9</text><text transform="translate(1922.10,1022.2) scale(0.72,1)" text-anchor="middle">,</text><text transform="translate(1931.70,1022.2) scale(0.72,1)" text-anchor="middle">0</text><text transform="translate(1941.30,1022.2) scale(0.72,1)" text-anchor="middle">7</text><text transform="translate(1950.90,1022.2) scale(0.72,1)" text-anchor="middle">5</text></g>
<g font-size="20.4" font-family="Liberation Sans" font-weight="normal" fill="#cccccc"><text transform="translate(1912.50,1076.6) scale(0.72,1)" text-anchor="middle">9</text><text transform="translate(1922.10,1076.6) scale(0.72,1)" text-anchor="middle">,</text><text transform="translate(1931.70,1076.6) scale(0.72,1)" text-anchor="middle">0</text><text transform="translate(1941.30,1076.6) scale(0.72,1)" text-anchor="middle">5</text><text transform="translate(1950.90,1076.6) scale(0.72,1)" text-anchor="middle">0</text></g>
<rect x="1905.8" y="817.8" width="93.5" height="31.5" fill="#e4e4e4"/>
<rect x="1907.4" y="819.4" width="90.3" height="28.3" fill="#d4d4d4"/>
<g font-size="20.4" font-family="Liberation Sans" font-weight="bold" fill="#000" stroke="#000" stroke-width="0.6"><text transform="translate(1932.50,839.5999999999999) scale(0.74,1)" text-anchor="middle">9</text><text transform="translate(1942.10,839.5999999999999) scale(0.74,1)" text-anchor="middle">,</text><path d="M1953.10 825.40V839.60M1949.90 828.60L1953.10 825.60" stroke="#000" stroke-width="2.6" fill="none"/><text transform="translate(1961.30,839.5999999999999) scale(0.74,1)" text-anchor="middle">6</text><text transform="translate(1970.90,839.5999999999999) scale(0.74,1)" text-anchor="middle">4</text></g>
</g>
</svg>
<svg width="2011" height="80" style="position:absolute;left:0;top:0">
<defs>
<linearGradient id="btng" x1="0" y1="0" x2="0" y2="1">
<stop offset="0" stop-color="#ffffff"/><stop offset="0.45" stop-color="#ececec"/><stop offset="0.55" stop-color="#dcdcdc"/><stop offset="1" stop-color="#e8e8e8"/>
</linearGradient>
<linearGradient id="spin" x1="0" y1="0" x2="0" y2="1">
<stop offset="0" stop-color="#f6f6f6"/><stop offset="1" stop-color="#e2e2e2"/>
</linearGradient>
<linearGradient id="refg" x1="0" y1="0" x2="1" y2="1">
<stop offset="0" stop-color="#1060ff"/><stop offset="1" stop-color="#20a0f0"/>
</linearGradient>
</defs>
<!-- window corners -->
<path d="M3.6 1.6H12A8.4 8.4 0 0 0 3.6 10Z" fill="#e6e6ee"/>
<path d="M3.8 10.5A8.6 8.6 0 0 1 12.4 1.9" fill="none" stroke="#8a8a8a" stroke-width="1.6"/>
<path d="M1996 0H2011V11H2004.6A8.6 8.6 0 0 0 1996 2.4Z" fill="#e6e6ee"/>
<path d="M1996 2.4A8.6 8.6 0 0 1 2004.6 11" fill="none" stroke="#8a8a8a" stroke-width="1.6"/>
<!-- app icon -->
<rect x="15.3" y="8.1" width="22.6" height="22.6" fill="#fafafa"/>
<g stroke="#d8dcdc" stroke-width="1">
<line x1="17" y1="11" x2="37.5" y2="11"/><line x1="17" y1="14" x2="37.5" y2="14"/><line x1="17" y1="17" x2="37.5" y2="17"/><line x1="17" y1="20" x2="37.5" y2="20"/><line x1="17" y1="23" x2="37.5" y2="23"/><line x1="17" y1="26" x2="37.5" y2="26"/>
</g>
<path d="M16.2 8.5V29.9H37.3" fill="none" stroke="#707070" stroke-width="1.8"/>
<path d="M20 20.5L21.5 18.2L23 20.5V26L21.5 27.7L20 26Z" fill="#ff0000"/>
<path d="M23 13.5L24.7 11.4L26.4 13.5V23.5L24.7 25.9L23 23.5Z" fill="#1a8cff"/>
<path d="M26.4 12L28.2 9.9L30 12V19.5L28.2 21.8L26.4 19.5Z" fill="#ff0000"/>
<path d="M30 15.5L31.3 13.8L32.6 15.5V21L31.3 23L30 21Z" fill="#1a8cff"/>
<path d="M32.6 14L34.3 11.7L36 14V22L34.3 24.4L32.6 22Z" fill="#ff0000"/>
<!-- title text -->
<text x="46.6" y="26.8" font-family="Liberation Sans" font-size="19.5" fill="#101010" textLength="174" lengthAdjust="spacingAndGlyphs">金1分足[2025/12]1.00</text>
<text x="229.8" y="26.8" font-family="Liberation Sans" font-size="19.5" fill="#101010">-</text>
<text x="244.8" y="26.8" font-family="Liberation Sans" font-size="19.5" fill="#101010" textLength="191" lengthAdjust="spacingAndGlyphs">白金1分足[2025/12]1.00</text>
<!-- restore (tile) icon -->
<rect x="1876.8" y="9.5" width="15.2" height="20.1" fill="#ffffff" stroke="#6c6c6c" stroke-width="1.6"/>
<rect x="1876.8" y="8.7" width="15.2" height="2.6" fill="#6c6c6c"/>
<rect x="1882.7" y="14.7" width="14.2" height="10.3" fill="#f0f0f0" stroke="#5c5c5c" stroke-width="1.6"/>
<rect x="1882.7" y="13.9" width="14.2" height="2.6" fill="#5c5c5c"/>
<g stroke="#c8c8c8" stroke-width="0.8"><line x1="1884" y1="19.5" x2="1896" y2="19.5"/><line x1="1884" y1="22.5" x2="1896" y2="22.5"/><line x1="1887.5" y1="16.5" x2="1887.5" y2="25"/><line x1="1891" y1="16.5" x2="1891" y2="25"/></g>
<!-- min/max/close buttons -->
<rect x="1911.1" y="6.7" width="25.8" height="25.7" rx="5" fill="url(#btng)" stroke="#8c8c8c" stroke-width="1.6"/>
<rect x="1918.4" y="23" width="8.8" height="2.8" fill="#505050"/>
<rect x="1942.7" y="6.7" width="25.8" height="25.7" rx="5" fill="url(#btng)" stroke="#8c8c8c" stroke-width="1.6"/>
<rect x="1950" y="14.8" width="11.2" height="10.2" fill="none" stroke="#505050" stroke-width="1.6"/>
<rect x="1949.2" y="13.6" width="12.7" height="3" fill="#505050"/>
<rect x="1973.9" y="6.7" width="25.8" height="25.7" rx="5" fill="url(#btng)" stroke="#8c8c8c" stroke-width="1.6"/>
<path d="M1981.2 14L1992.2 25M1992.2 14L1981.2 25" stroke="#505050" stroke-width="2.2"/>

<!-- toolbar -->
<text x="17.5" y="61.5" font-family="Liberation Sans" font-size="19" fill="#101018" textLength="18" lengthAdjust="spacingAndGlyphs">金</text>
<text x="53.6" y="62.4" font-family="Liberation Sans" font-size="19" fill="#181830" textLength="63.4" lengthAdjust="spacingAndGlyphs">2025/12</text>
<text x="223.3" y="61.5" font-family="Liberation Sans" font-size="19" fill="#101018" textLength="35.7" lengthAdjust="spacingAndGlyphs">白金</text>
<text x="277" y="62.4" font-family="Liberation Sans" font-size="19" fill="#181830" textLength="63.8" lengthAdjust="spacingAndGlyphs">2025/12</text>
<text x="445.5" y="61.5" font-family="Liberation Sans" font-size="19" fill="#101018" textLength="35.8" lengthAdjust="spacingAndGlyphs">分足</text>
<text x="588.7" y="61.5" font-family="Liberation Sans" font-size="19" fill="#101018" textLength="44.2" lengthAdjust="spacingAndGlyphs">1分足</text>
<path d="M491.5 52.2h8.9l-4.45 5.1z" fill="#000"/>
<path d="M643.6 52.2h8.4l-4.2 5.1z" fill="#000"/>
<path d="M896.4 52.3h8.4l-4.2 4.8z" fill="#000"/>
<!-- separators -->
<g>
<rect x="210" y="47" width="1.2" height="19" fill="#a8acb4"/><rect x="211.2" y="47" width="1.6" height="19" fill="#f8f8fa"/>
<rect x="433.3" y="47" width="1.2" height="19" fill="#a8acb4"/><rect x="434.5" y="47" width="1.6" height="19" fill="#f8f8fa"/>
<rect x="663.3" y="47" width="1.2" height="19" fill="#a8acb4"/><rect x="664.5" y="47" width="1.6" height="19" fill="#f8f8fa"/>
<rect x="708.3" y="47" width="1.2" height="19" fill="#a8acb4"/><rect x="709.5" y="47" width="1.6" height="19" fill="#f8f8fa"/>
<rect x="861.5" y="47" width="1.2" height="19" fill="#a8acb4"/><rect x="862.7" y="47" width="1.6" height="19" fill="#f8f8fa"/>
<rect x="952" y="47" width="1.2" height="19" fill="#a8acb4"/><rect x="953.2" y="47" width="1.6" height="19" fill="#f8f8fa"/>
</g>
<!-- input boxes -->
<g>
<rect x="127.4" y="41.3" width="75.8" height="27" rx="2" fill="#fff" stroke="#b4b8c0" stroke-width="1.6"/>
<text x="132.3" y="58.9" font-family="Liberation Sans" font-size="20" fill="#000" textLength="27.4" lengthAdjust="spacingAndGlyphs">1.00</text>
<rect x="180.6" y="43.9" width="19.2" height="20" fill="url(#spin)" stroke="#b0b0b0" stroke-width="1.6"/>
<line x1="180.6" y1="54" x2="199.8" y2="54" stroke="#b0b0b0" stroke-width="1.6"/>
<path d="M185.7 50.9h8l-4-4.7z M185.7 57.3h8l-4 4.7z" fill="#000"/>

<rect x="351.4" y="41.3" width="75.3" height="27" rx="2" fill="#fff" stroke="#b4b8c0" stroke-width="1.6"/>
<text x="355" y="58.9" font-family="Liberation Sans" font-size="20" fill="#000" textLength="28" lengthAdjust="spacingAndGlyphs">1.00</text>
<rect x="403.7" y="43.9" width="19.2" height="20" fill="url(#spin)" stroke="#b0b0b0" stroke-width="1.6"/>
<line x1="403.7" y1="54" x2="422.9" y2="54" stroke="#b0b0b0" stroke-width="1.6"/>
<path d="M408.8 50.9h8l-4-4.7z M408.8 57.3h8l-4 4.7z" fill="#000"/>

<rect x="507.4" y="41.3" width="70.6" height="27" rx="2" fill="#fff" stroke="#b4b8c0" stroke-width="1.6"/>
<text x="512.3" y="58.9" font-family="Liberation Sans" font-size="20" fill="#000" textLength="32.9" lengthAdjust="spacingAndGlyphs">1200</text>
<rect x="555.5" y="43.9" width="19.2" height="20" fill="url(#spin)" stroke="#b0b0b0" stroke-width="1.6"/>
<line x1="555.5" y1="54" x2="574.7" y2="54" stroke="#b0b0b0" stroke-width="1.6"/>
<path d="M561 50.9h8l-4-4.7z M561 57.3h8l-4 4.7z" fill="#000"/>
</g>
<!-- pressed button 1 -->
<rect x="668.4" y="40.2" width="27.4" height="27.6" fill="#ffffff"/>
<rect x="668.4" y="40.2" width="26" height="26" fill="#707070"/>
<rect x="670" y="41.8" width="24.4" height="24.4" fill="#b8bcc0"/>
<rect x="672" y="44" width="22.2" height="21.8" fill="#f4f4ec" stroke="#6a6a6a" stroke-width="1.2"/>
<g stroke="#d8d8d0" stroke-width="0.9"><line x1="673" y1="46.5" x2="693.5" y2="46.5"/><line x1="673" y1="53" x2="693.5" y2="53"/><line x1="673" y1="56" x2="693.5" y2="56"/><line x1="673" y1="59" x2="693.5" y2="59"/><line x1="673" y1="62" x2="693.5" y2="62"/></g>
<path d="M676.9 44.5V65.5M673 49.9H693.6" stroke="#4040b0" stroke-width="1.8"/>
<path d="M689.5 62.3L682.5 55.5" stroke="#8010b0" stroke-width="3"/>
<path d="M680.8 54L688 54.4L681.2 61.2Z" fill="#8010b0"/>
<!-- pressed/checked button 2 -->
<rect x="713.9" y="40.2" width="27.4" height="27.6" fill="#ffffff"/>
<rect x="713.9" y="40.2" width="26" height="26" fill="#707070"/>
<rect x="715.5" y="41.8" width="24.4" height="24.4" fill="#a8acb0"/>
<path d="M719 46.4L722.8 62.5L726.2 57L733 63.8L735.6 61.2L728.8 54.4L734.2 51Z" fill="#ffffff" stroke="#6040c8" stroke-width="1.6" stroke-linejoin="round"/>
<!-- hand -->
<path d="M755 64.5C752 60 750.6 56.5 751.6 55.2C752.8 53.8 754.6 55 756 57L755 48.5C754.8 46.5 757.5 46 758 48L759 53L759.2 45.5C759.4 43.3 762.2 43.3 762.4 45.5L762.8 52.5L764 46.5C764.4 44.5 767 44.8 766.8 47L766.4 53.5L768 49.5C768.6 47.8 771 48.3 770.8 50.3L770.2 58C769.8 61 768.8 63 768.4 64.5Z" fill="#fff8e8" stroke="#e0901c" stroke-width="1.6" stroke-linejoin="round"/>
<!-- pencil -->
<path d="M788.5 63.8L790.3 57.6L805 43.6C806 42.6 807.6 42.6 808.6 43.6L809 44C810 45 810 46.6 809 47.6L794.3 61.6Z" fill="#fff0d8" stroke="#e09020" stroke-width="1.6" stroke-linejoin="round"/>
<path d="M788.2 64.3L790.3 57.8L794.2 61.6Z" fill="#b07020"/>
<path d="M791.5 57L795 60.6" stroke="#e09020" stroke-width="1.4"/>
<!-- blue pen -->
<path d="M823.5 63.8L825.8 57.4L840.6 43.6C841.8 42.4 843.5 42.5 844.5 43.5L844.9 43.9C846 45 846 46.6 844.8 47.8L830.1 61.6Z" fill="#d8e8ff" stroke="#2070e8" stroke-width="1.7" stroke-linejoin="round"/>
<path d="M823.2 64.5L825.8 57.6L830 61.6Z" fill="#2060d0"/>
<path d="M839.6 54.2L845 59.6L839.6 65L834.2 59.6Z" fill="#002070"/>
<g fill="#c8d8ff"><rect x="837.6" y="57.6" width="1.3" height="1.3"/><rect x="840.4" y="57.6" width="1.3" height="1.3"/><rect x="837.6" y="60.4" width="1.3" height="1.3"/><rect x="840.4" y="60.4" width="1.3" height="1.3"/></g>
<!-- bar chart icon -->
<rect x="871" y="44" width="20.7" height="20" fill="#fafaf6"/>
<g stroke="#e8e0d8" stroke-width="0.9"><line x1="872" y1="46.5" x2="891.5" y2="46.5"/><line x1="872" y1="50" x2="891.5" y2="50"/><line x1="872" y1="53.5" x2="891.5" y2="53.5"/><line x1="872" y1="57" x2="891.5" y2="57"/><line x1="872" y1="60.5" x2="891.5" y2="60.5"/></g>
<path d="M871 44.5V64H891.7" fill="none" stroke="#808080" stroke-width="1.4"/>
<g fill="#1080ff"><rect x="873.1" y="54.7" width="2.6" height="9" rx="1"/><rect x="878.1" y="46.4" width="2.6" height="17.3" rx="1"/><rect x="882.6" y="49.3" width="2.6" height="14.4" rx="1"/><rect x="887.7" y="55.9" width="2.6" height="7.8" rx="1"/></g>
<!-- X chart icon -->
<rect x="914.6" y="44" width="20.9" height="20" fill="#fafaf6"/>
<g stroke="#e8e0d8" stroke-width="0.9"><line x1="915.5" y1="46.5" x2="935" y2="46.5"/><line x1="915.5" y1="50" x2="935" y2="50"/><line x1="915.5" y1="53.5" x2="935" y2="53.5"/><line x1="915.5" y1="57" x2="935" y2="57"/><line x1="915.5" y1="60.5" x2="935" y2="60.5"/></g>
<path d="M914.6 43.5V64H935.5" fill="none" stroke="#808080" stroke-width="1.4"/>
<g fill="#1080ff"><rect x="916.6" y="54.7" width="2.6" height="9" rx="1"/><rect x="922" y="45.2" width="2.6" height="18.5" rx="1"/><rect x="926.2" y="48.7" width="2.6" height="15" rx="1"/><rect x="930.9" y="55.9" width="2.6" height="7.8" rx="1"/></g>
<path d="M917.3 47.5L931.6 60.1M931.6 47.5L917.3 60.1" stroke="#ff2020" stroke-width="1.8"/>
<!-- refresh R -->
<path d="M969.5 46.8A9 9 0 1 0 977.6 59.5" fill="none" stroke="url(#refg)" stroke-width="3.2"/>
<path d="M961.2 43.1H970.3V52.2L967 48.8Z" fill="#0050ff"/>
<text x="971.2" y="57.8" font-family="Liberation Sans" font-weight="bold" font-size="11.5" fill="#0868d8">R</text>
<!-- wrench -->
<path d="M1966.4 62.8L1974.4 55.3" stroke="#5040f0" stroke-width="4.6" stroke-linecap="round"/>
<path d="M1983.2 45A6.8 6.8 0 1 0 1985.6 52.2L1981.5 51.8L1979 49L1980.8 45.6Z" fill="#f8f6ff" stroke="#7060d0" stroke-width="1.7" stroke-linejoin="round"/>
</svg>

</body></html>
